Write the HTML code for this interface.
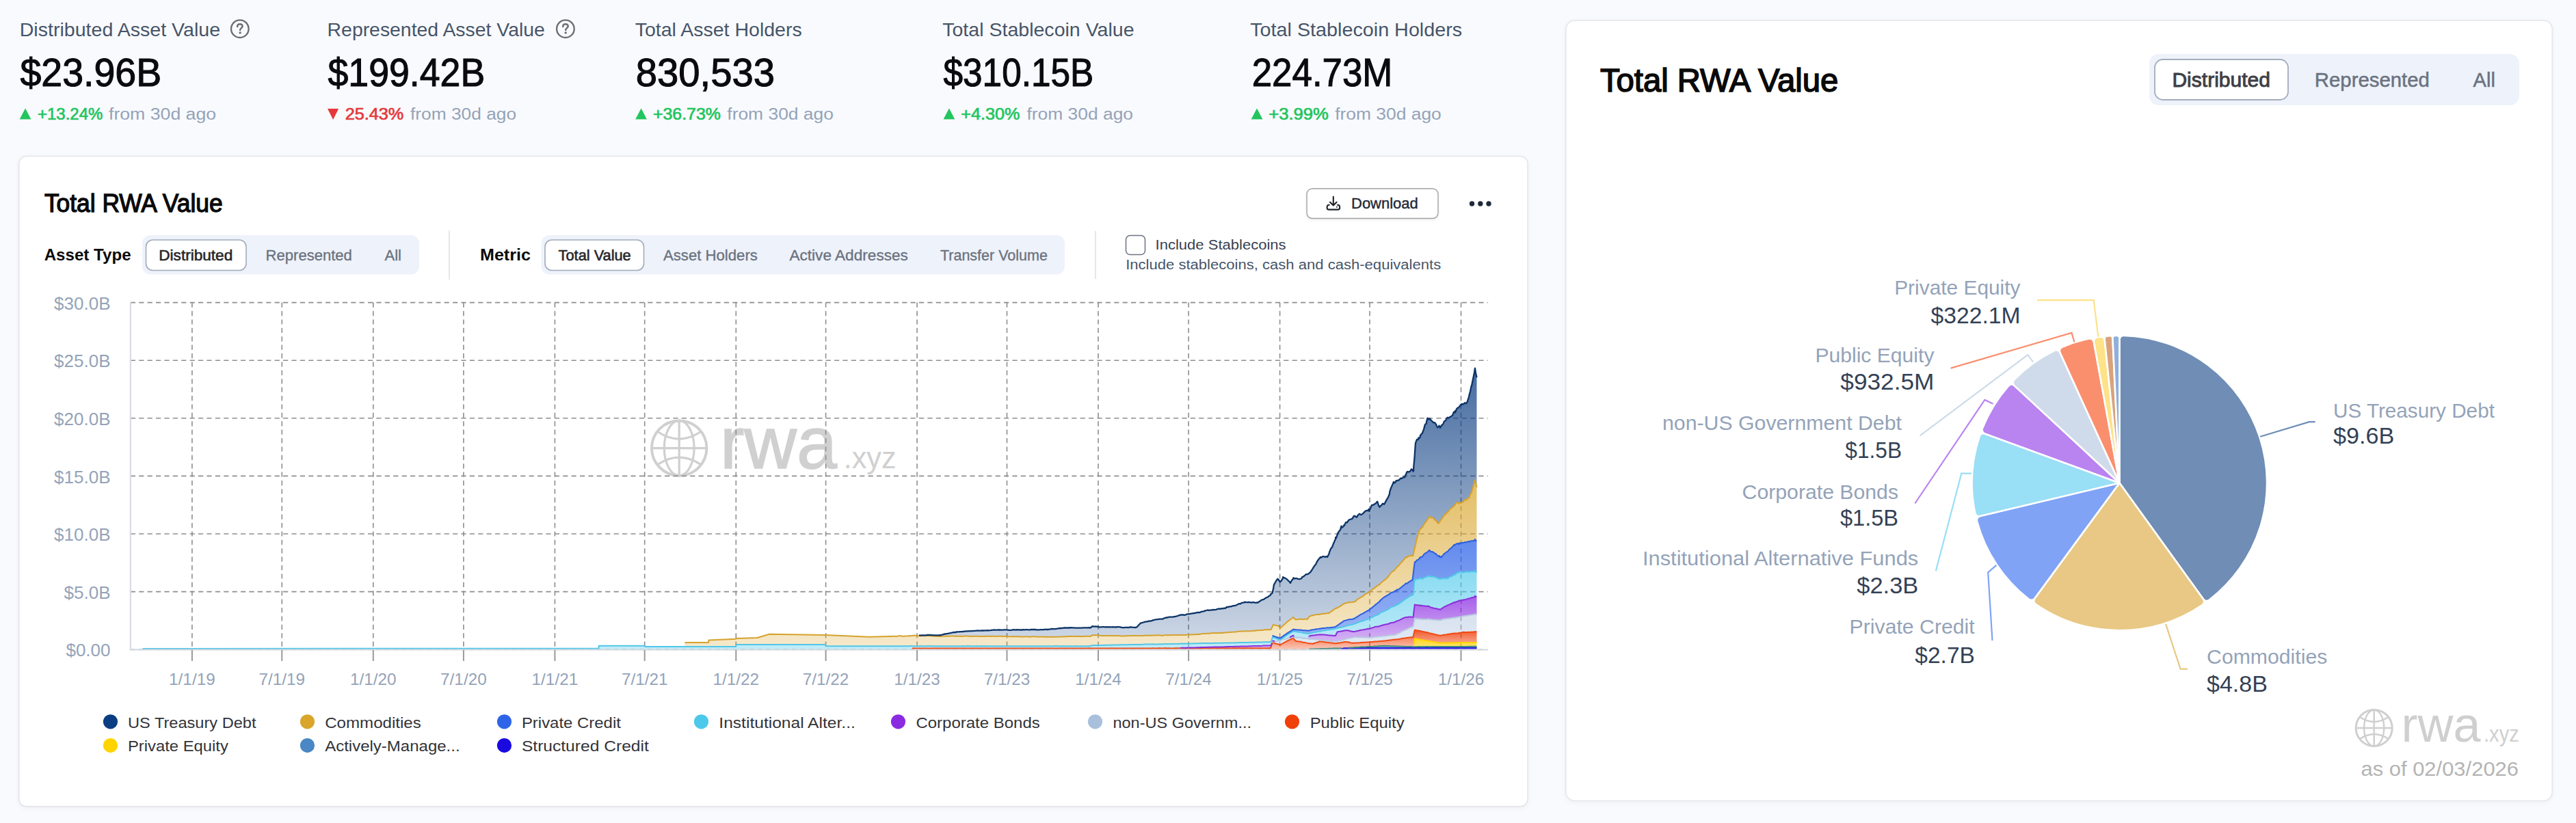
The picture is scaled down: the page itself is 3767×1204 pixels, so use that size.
<!DOCTYPE html>
<html><head><meta charset="utf-8"><title>RWA Dashboard</title>
<style>
html,body{margin:0;padding:0;width:3767px;height:1204px;overflow:hidden;background:#f9fafd;}
svg{display:block;font-family:"Liberation Sans",sans-serif;}
</style></head><body>
<svg width="3767" height="1204" viewBox="0 0 3767 1204">
<defs><filter id="sh2" x="-10%" y="-20%" width="120%" height="150%"><feDropShadow dx="0" dy="1.5" stdDeviation="1.5" flood-color="#000" flood-opacity="0.08"/></filter><filter id="sh" x="-5%" y="-5%" width="110%" height="115%"><feDropShadow dx="0" dy="2" stdDeviation="3" flood-color="#0f172a" flood-opacity="0.045"/></filter><linearGradient id="g_sc" x1="0" y1="0" x2="0" y2="1"><stop offset="0.02" stop-color="#1a0ae0" stop-opacity="0.8"/><stop offset="0.98" stop-color="#1a0ae0" stop-opacity="0.5"/></linearGradient><linearGradient id="g_am" x1="0" y1="0" x2="0" y2="1"><stop offset="0.02" stop-color="#4a87c4" stop-opacity="0.8"/><stop offset="0.98" stop-color="#4a87c4" stop-opacity="0.5"/></linearGradient><linearGradient id="g_pe" x1="0" y1="0" x2="0" y2="1"><stop offset="0.02" stop-color="#ffd000" stop-opacity="0.85"/><stop offset="0.98" stop-color="#ffd000" stop-opacity="0.5"/></linearGradient><linearGradient id="g_pub" x1="0" y1="0" x2="0" y2="1"><stop offset="0.02" stop-color="#f0400a" stop-opacity="0.85"/><stop offset="0.98" stop-color="#f0400a" stop-opacity="0.3"/></linearGradient><linearGradient id="g_nus" x1="0" y1="0" x2="0" y2="1"><stop offset="0.02" stop-color="#a9c0dd" stop-opacity="0.45"/><stop offset="0.98" stop-color="#a9c0dd" stop-opacity="0.35"/></linearGradient><linearGradient id="g_cb" x1="0" y1="0" x2="0" y2="1"><stop offset="0.02" stop-color="#8a2be2" stop-opacity="0.75"/><stop offset="0.98" stop-color="#8a2be2" stop-opacity="0.3"/></linearGradient><linearGradient id="g_iaf" x1="0" y1="0" x2="0" y2="1"><stop offset="0.02" stop-color="#4cc8ea" stop-opacity="0.65"/><stop offset="0.98" stop-color="#4cc8ea" stop-opacity="0.35"/></linearGradient><linearGradient id="g_pc" x1="0" y1="0" x2="0" y2="1"><stop offset="0.02" stop-color="#2e64e8" stop-opacity="0.75"/><stop offset="0.98" stop-color="#2e64e8" stop-opacity="0.45"/></linearGradient><linearGradient id="g_com" x1="0" y1="0" x2="0" y2="1"><stop offset="0.02" stop-color="#d9a52b" stop-opacity="0.72"/><stop offset="0.98" stop-color="#d9a52b" stop-opacity="0.25"/></linearGradient><linearGradient id="g_ust" x1="0" y1="0" x2="0" y2="1"><stop offset="0.02" stop-color="#0b3d82" stop-opacity="0.75"/><stop offset="0.98" stop-color="#0b3d82" stop-opacity="0.2"/></linearGradient></defs>
<rect x="0" y="0" width="3767" height="1204" fill="#f9fafd"/>
<rect x="27.8" y="228.5" width="2206.2" height="951.4" rx="11" fill="#ffffff" stroke="#e3e6eb" stroke-width="1.6" filter="url(#sh)"/>
<rect x="2289.8" y="29.8" width="1442.5" height="1141.7" rx="13" fill="#ffffff" stroke="#e3e6eb" stroke-width="1.6" filter="url(#sh)"/>
<text x="28.7" y="52.7" font-size="28.5" font-weight="normal" fill="#475569" textLength="293.4" lengthAdjust="spacingAndGlyphs">Distributed Asset Value</text>
<text stroke="#0b0b0f" stroke-width="1.1" x="29.5" y="126.2" font-size="57.0" font-weight="normal" fill="#0b0b0f" textLength="206.7" lengthAdjust="spacingAndGlyphs">$23.96B</text>
<path d="M37.0,158.4 L45.4,174.6 L28.7,174.6 Z" fill="#22c55e"/>
<text stroke="#22c55e" stroke-width="0.7" x="55.0" y="175.0" font-size="23.5" font-weight="normal" fill="#22c55e" textLength="95.3" lengthAdjust="spacingAndGlyphs">+13.24%</text>
<text x="159.0" y="175.0" font-size="23.5" font-weight="normal" fill="#94a3b8" textLength="157.1" lengthAdjust="spacingAndGlyphs">from 30d ago</text>
<circle cx="350.8" cy="42.2" r="12.8" fill="none" stroke="#6e6e72" stroke-width="2.4"/>
<path d="M347.1,38.9 C347.1,36.4 348.9,35.2 350.9,35.2 C353.1,35.2 354.6,36.6 354.6,38.5 C354.6,40.9 351.1,41.4 351.1,43.9" fill="none" stroke="#6e6e72" stroke-width="2.5" stroke-linecap="round"/>
<circle cx="351.1" cy="47.9" r="1.7" fill="#6e6e72"/>
<text x="478.6" y="52.7" font-size="28.5" font-weight="normal" fill="#475569" textLength="318.2" lengthAdjust="spacingAndGlyphs">Represented Asset Value</text>
<text stroke="#0b0b0f" stroke-width="1.1" x="479.5" y="126.2" font-size="57.0" font-weight="normal" fill="#0b0b0f" textLength="229.7" lengthAdjust="spacingAndGlyphs">$199.42B</text>
<path d="M479.0,159 L495.1,159 L487.1,175 Z" fill="#e5393b"/>
<text stroke="#e5393b" stroke-width="0.7" x="504.7" y="175.0" font-size="23.5" font-weight="normal" fill="#e5393b" textLength="85.6" lengthAdjust="spacingAndGlyphs">25.43%</text>
<text x="600.0" y="175.0" font-size="23.5" font-weight="normal" fill="#94a3b8" textLength="155.1" lengthAdjust="spacingAndGlyphs">from 30d ago</text>
<circle cx="826.9" cy="42.2" r="12.8" fill="none" stroke="#6e6e72" stroke-width="2.4"/>
<path d="M823.2,38.9 C823.2,36.4 825.0,35.2 827.0,35.2 C829.2,35.2 830.7,36.6 830.7,38.5 C830.7,40.9 827.2,41.4 827.2,43.9" fill="none" stroke="#6e6e72" stroke-width="2.5" stroke-linecap="round"/>
<circle cx="827.2" cy="47.9" r="1.7" fill="#6e6e72"/>
<text x="928.7" y="52.7" font-size="28.5" font-weight="normal" fill="#475569" textLength="244.0" lengthAdjust="spacingAndGlyphs">Total Asset Holders</text>
<text stroke="#0b0b0f" stroke-width="1.1" x="929.7" y="126.2" font-size="57.0" font-weight="normal" fill="#0b0b0f" textLength="203.3" lengthAdjust="spacingAndGlyphs">830,533</text>
<path d="M937.6,158.4 L945.9,174.6 L929.2,174.6 Z" fill="#22c55e"/>
<text stroke="#22c55e" stroke-width="0.7" x="955.0" y="175.0" font-size="23.5" font-weight="normal" fill="#22c55e" textLength="98.9" lengthAdjust="spacingAndGlyphs">+36.73%</text>
<text x="1063.3" y="175.0" font-size="23.5" font-weight="normal" fill="#94a3b8" textLength="155.6" lengthAdjust="spacingAndGlyphs">from 30d ago</text>
<text x="1378.2" y="52.7" font-size="28.5" font-weight="normal" fill="#475569" textLength="280.4" lengthAdjust="spacingAndGlyphs">Total Stablecoin Value</text>
<text stroke="#0b0b0f" stroke-width="1.1" x="1379.5" y="126.2" font-size="57.0" font-weight="normal" fill="#0b0b0f" textLength="219.8" lengthAdjust="spacingAndGlyphs">$310.15B</text>
<path d="M1387.9,158.4 L1396.3,174.6 L1379.6,174.6 Z" fill="#22c55e"/>
<text stroke="#22c55e" stroke-width="0.7" x="1405.3" y="175.0" font-size="23.5" font-weight="normal" fill="#22c55e" textLength="86.2" lengthAdjust="spacingAndGlyphs">+4.30%</text>
<text x="1501.5" y="175.0" font-size="23.5" font-weight="normal" fill="#94a3b8" textLength="155.5" lengthAdjust="spacingAndGlyphs">from 30d ago</text>
<text x="1828.2" y="52.7" font-size="28.5" font-weight="normal" fill="#475569" textLength="310.0" lengthAdjust="spacingAndGlyphs">Total Stablecoin Holders</text>
<text stroke="#0b0b0f" stroke-width="1.1" x="1830.7" y="126.2" font-size="57.0" font-weight="normal" fill="#0b0b0f" textLength="205.7" lengthAdjust="spacingAndGlyphs">224.73M</text>
<path d="M1838.0,158.4 L1846.4,174.6 L1829.7,174.6 Z" fill="#22c55e"/>
<text stroke="#22c55e" stroke-width="0.7" x="1855.3" y="175.0" font-size="23.5" font-weight="normal" fill="#22c55e" textLength="87.6" lengthAdjust="spacingAndGlyphs">+3.99%</text>
<text x="1952.2" y="175.0" font-size="23.5" font-weight="normal" fill="#94a3b8" textLength="155.6" lengthAdjust="spacingAndGlyphs">from 30d ago</text>
<text stroke="#0a0a0a" stroke-width="1.3" x="64.9" y="310.0" font-size="36.0" font-weight="normal" fill="#0a0a0a" textLength="260.7" lengthAdjust="spacingAndGlyphs">Total RWA Value</text>
<text x="64.7" y="381.3" font-size="24.0" font-weight="bold" fill="#0a0a0a" textLength="126.9" lengthAdjust="spacingAndGlyphs">Asset Type</text>
<rect x="208" y="344" width="405" height="57.5" rx="12" fill="#eef2fa"/>
<rect x="213.5" y="351" width="146.5" height="44.5" rx="10" fill="#ffffff" stroke="#a3acbb" stroke-width="1.6"/>
<text stroke="#27272a" stroke-width="0.6" x="232.3" y="381.3" font-size="21.5" font-weight="normal" fill="#27272a" textLength="107.9" lengthAdjust="spacingAndGlyphs">Distributed</text>
<text stroke="#6b7280" stroke-width="0.35" x="388.6" y="381.3" font-size="21.5" font-weight="normal" fill="#6b7280" textLength="126.3" lengthAdjust="spacingAndGlyphs">Represented</text>
<text stroke="#6b7280" stroke-width="0.35" x="562.5" y="381.3" font-size="21.5" font-weight="normal" fill="#6b7280" textLength="24.5" lengthAdjust="spacingAndGlyphs">All</text>
<rect x="656" y="337" width="2" height="72" fill="#e5e7eb"/>
<text x="702.0" y="381.3" font-size="24.0" font-weight="bold" fill="#0a0a0a" textLength="73.9" lengthAdjust="spacingAndGlyphs">Metric</text>
<rect x="791.5" y="344" width="765.5" height="57.5" rx="12" fill="#eef2fa"/>
<rect x="797" y="351" width="144.5" height="44.5" rx="10" fill="#ffffff" stroke="#a3acbb" stroke-width="1.6"/>
<text stroke="#27272a" stroke-width="0.6" x="816.6" y="381.3" font-size="21.5" font-weight="normal" fill="#27272a" textLength="106.1" lengthAdjust="spacingAndGlyphs">Total Value</text>
<text stroke="#6b7280" stroke-width="0.35" x="970.0" y="381.3" font-size="21.5" font-weight="normal" fill="#6b7280" textLength="137.9" lengthAdjust="spacingAndGlyphs">Asset Holders</text>
<text stroke="#6b7280" stroke-width="0.35" x="1154.4" y="381.3" font-size="21.5" font-weight="normal" fill="#6b7280" textLength="173.5" lengthAdjust="spacingAndGlyphs">Active Addresses</text>
<text stroke="#6b7280" stroke-width="0.35" x="1374.9" y="381.3" font-size="21.5" font-weight="normal" fill="#6b7280" textLength="157.1" lengthAdjust="spacingAndGlyphs">Transfer Volume</text>
<rect x="1601" y="338" width="2" height="70" fill="#e5e7eb"/>
<rect x="1646.5" y="344.5" width="28" height="28" rx="6" fill="#ffffff" stroke="#6b7280" stroke-width="1.5"/>
<text x="1689.6" y="365.4" font-size="20.0" font-weight="normal" fill="#374151" textLength="191.0" lengthAdjust="spacingAndGlyphs">Include Stablecoins</text>
<text x="1646.2" y="394.4" font-size="20.0" font-weight="normal" fill="#475569" textLength="461.0" lengthAdjust="spacingAndGlyphs">Include stablecoins, cash and cash-equivalents</text>
<rect x="1911" y="276" width="192" height="43.5" rx="8" fill="#ffffff" stroke="#a3a3a3" stroke-width="1.4" filter="url(#sh2)"/>
<path d="M1949.8,287.8 L1949.8,300.2 M1945,295.8 L1949.8,300.6 L1954.6,295.8 M1943.8,299.8 C1941.3,299.8 1940.6,301.5 1940.6,303 L1940.6,304.2 C1940.6,305.8 1941.8,306.6 1943.3,306.6 L1956.5,306.6 C1958,306.6 1959.1,305.8 1959.1,304.2 L1959.1,303 C1959.1,301.5 1958.5,299.8 1956,299.8" fill="none" stroke="#1f2328" stroke-width="2.1" stroke-linecap="round" stroke-linejoin="round"/>
<circle cx="1954.9" cy="302.8" r="1" fill="#1f2328"/>
<text stroke="#1f2937" stroke-width="0.4" x="1976.0" y="305.1" font-size="22.0" font-weight="normal" fill="#1f2937" textLength="97.8" lengthAdjust="spacingAndGlyphs">Download</text>
<circle cx="2152.5" cy="298" r="3.7" fill="#1e293b"/>
<circle cx="2164.8" cy="298" r="3.7" fill="#1e293b"/>
<circle cx="2177" cy="298" r="3.7" fill="#1e293b"/>
<text stroke="#0a0a0a" stroke-width="1.6" x="2339.9" y="133.7" font-size="48.0" font-weight="normal" fill="#0a0a0a" textLength="348.3" lengthAdjust="spacingAndGlyphs">Total RWA Value</text>
<rect x="3143" y="79" width="541" height="75" rx="14" fill="#eef2fa"/>
<rect x="3151" y="87" width="195" height="59" rx="12" fill="#ffffff" stroke="#a3acbb" stroke-width="1.8"/>
<text stroke="#3f3f46" stroke-width="0.9" x="3176.4" y="126.7" font-size="29.0" font-weight="normal" fill="#3f3f46" textLength="143.6" lengthAdjust="spacingAndGlyphs">Distributed</text>
<text stroke="#6b7280" stroke-width="0.5" x="3384.8" y="126.7" font-size="29.0" font-weight="normal" fill="#6b7280" textLength="168.1" lengthAdjust="spacingAndGlyphs">Represented</text>
<text stroke="#6b7280" stroke-width="0.5" x="3616.6" y="126.7" font-size="29.0" font-weight="normal" fill="#6b7280" textLength="32.4" lengthAdjust="spacingAndGlyphs">All</text>
<circle cx="993.2" cy="655.6" r="40.2" fill="none" stroke="#d0d0d0" stroke-width="4.0"/><ellipse cx="993.2" cy="655.6" rx="21.9" ry="40.2" fill="none" stroke="#d0d0d0" stroke-width="3.2"/><path d="M993.2,615.4 L993.2,695.8 M953.0,655.6 L1033.4,655.6" stroke="#d0d0d0" stroke-width="3.2"/><path d="M962.4,632.0 Q993.2,652.2 1024.0,632.0 M962.4,679.2 Q993.2,659.0 1024.0,679.2" fill="none" stroke="#d0d0d0" stroke-width="3.2"/>
<text stroke="#d0d0d0" stroke-width="1.6" x="1053.0" y="685.3" font-size="108.0" font-weight="normal" fill="#d0d0d0" textLength="171.1" lengthAdjust="spacingAndGlyphs">rwa</text>
<text x="1233.7" y="685.3" font-size="44.0" font-weight="normal" fill="#d0d0d0" textLength="77.0" lengthAdjust="spacingAndGlyphs">.xyz</text>
<path d="M190.8,442.6 L2175.8,442.6 M190.8,527.2 L2175.8,527.2 M190.8,611.8 L2175.8,611.8 M190.8,696.4 L2175.8,696.4 M190.8,781.0 L2175.8,781.0 M190.8,865.6 L2175.8,865.6 M280.9,442.6 L280.9,950.2 M412.3,442.6 L412.3,950.2 M545.8,442.6 L545.8,950.2 M677.9,442.6 L677.9,950.2 M811.4,442.6 L811.4,950.2 M942.7,442.6 L942.7,950.2 M1076.3,442.6 L1076.3,950.2 M1207.6,442.6 L1207.6,950.2 M1341.1,442.6 L1341.1,950.2 M1472.5,442.6 L1472.5,950.2 M1606.0,442.6 L1606.0,950.2 M1738.1,442.6 L1738.1,950.2 M1871.6,442.6 L1871.6,950.2 M2003.0,442.6 L2003.0,950.2 M2136.5,442.6 L2136.5,950.2" fill="none" stroke="#8e8e8e" stroke-width="1.6" stroke-dasharray="7.2 5.2"/>
<path d="M190.8,950.2 L2175.8,950.2" fill="none" stroke="#c8c8c8" stroke-width="2" stroke-dasharray="6.2 6.2"/>
<path d="M190.8,950.0 L208.5,950.0 L875.5,950.0 L875.7,950.0 L943.0,950.0 L943.3,950.0 L1001.4,950.0 L1001.5,950.0 L1036.0,950.0 L1036.4,950.0 L1076.0,950.0 L1076.5,950.0 L1107.5,950.0 L1125.0,950.0 L1207.0,950.0 L1207.6,950.0 L1270.5,950.0 L1300.0,950.0 L1302.0,950.0 L1304.0,950.0 L1306.0,950.0 L1308.0,950.0 L1310.0,950.0 L1312.0,950.0 L1312.5,950.0 L1314.0,950.0 L1316.0,950.0 L1318.0,950.0 L1320.0,950.0 L1322.0,950.0 L1324.0,950.0 L1326.0,950.0 L1328.0,950.0 L1330.0,950.0 L1332.0,950.0 L1333.0,950.0 L1334.0,950.0 L1334.5,950.0 L1336.0,950.0 L1338.0,950.0 L1340.0,950.0 L1342.0,950.0 L1344.0,950.0 L1346.0,950.0 L1348.0,950.0 L1350.0,950.0 L1352.0,950.0 L1354.0,950.0 L1356.0,950.0 L1358.0,950.0 L1360.0,950.0 L1362.0,950.0 L1364.0,950.0 L1366.0,950.0 L1368.0,950.0 L1370.0,950.0 L1372.0,950.0 L1374.0,950.0 L1375.0,950.0 L1376.0,950.0 L1378.0,950.0 L1380.0,950.0 L1382.0,950.0 L1384.0,950.0 L1386.0,950.0 L1388.0,950.0 L1390.0,950.0 L1392.0,950.0 L1394.0,950.0 L1396.0,950.0 L1398.0,950.0 L1398.3,950.0 L1400.0,950.0 L1402.0,950.0 L1404.0,950.0 L1406.0,950.0 L1408.0,950.0 L1410.0,950.0 L1412.0,950.0 L1414.0,950.0 L1416.0,950.0 L1418.0,950.0 L1420.0,950.0 L1422.0,950.0 L1424.0,950.0 L1426.0,950.0 L1428.0,950.0 L1430.0,950.0 L1430.4,950.0 L1432.0,950.0 L1434.0,950.0 L1436.0,950.0 L1438.0,950.0 L1440.0,950.0 L1442.0,950.0 L1444.0,950.0 L1446.0,950.0 L1448.0,950.0 L1450.0,950.0 L1452.0,950.0 L1454.0,950.0 L1456.0,950.0 L1458.0,950.0 L1460.0,950.0 L1462.0,950.0 L1464.0,950.0 L1466.0,950.0 L1468.0,950.0 L1470.0,950.0 L1471.2,950.0 L1472.0,950.0 L1474.0,950.0 L1476.0,950.0 L1478.0,950.0 L1480.0,950.0 L1482.0,950.0 L1484.0,950.0 L1486.0,950.0 L1488.0,950.0 L1490.0,950.0 L1492.0,950.0 L1494.0,950.0 L1496.0,950.0 L1498.0,950.0 L1500.0,950.0 L1502.0,950.0 L1504.0,950.0 L1506.0,950.0 L1508.0,950.0 L1510.0,950.0 L1512.0,950.0 L1514.0,950.0 L1516.0,950.0 L1518.0,950.0 L1520.0,950.0 L1522.0,950.0 L1524.0,950.0 L1526.0,950.0 L1528.0,950.0 L1529.5,950.0 L1530.0,950.0 L1532.0,950.0 L1534.0,950.0 L1536.0,950.0 L1538.0,950.0 L1540.0,950.0 L1541.0,950.0 L1542.0,950.0 L1544.0,950.0 L1546.0,950.0 L1548.0,950.0 L1550.0,950.0 L1552.0,950.0 L1554.0,950.0 L1556.0,950.0 L1558.0,950.0 L1558.7,950.0 L1560.0,950.0 L1562.0,950.0 L1564.0,950.0 L1566.0,950.0 L1568.0,950.0 L1570.0,950.0 L1572.0,950.0 L1574.0,950.0 L1576.0,950.0 L1578.0,950.0 L1580.0,950.0 L1582.0,950.0 L1584.0,950.0 L1586.0,950.0 L1588.0,950.0 L1590.0,950.0 L1592.0,950.0 L1594.0,950.0 L1595.0,950.0 L1596.0,950.0 L1596.6,950.0 L1598.0,950.0 L1600.0,950.0 L1602.0,950.0 L1604.0,950.0 L1606.0,950.0 L1608.0,950.0 L1610.0,950.0 L1612.0,950.0 L1614.0,950.0 L1616.0,950.0 L1618.0,950.0 L1620.0,950.0 L1622.0,950.0 L1624.0,950.0 L1626.0,950.0 L1628.0,950.0 L1630.0,950.0 L1632.0,950.0 L1634.0,950.0 L1636.0,950.0 L1638.0,950.0 L1640.0,950.0 L1642.0,950.0 L1644.0,950.0 L1646.0,950.0 L1648.0,950.0 L1650.0,950.0 L1652.0,950.0 L1654.0,950.0 L1656.0,950.0 L1658.0,950.0 L1660.0,950.0 L1661.9,950.0 L1662.0,950.0 L1664.0,950.0 L1666.0,950.0 L1668.0,950.0 L1668.4,950.0 L1670.0,950.0 L1672.0,950.0 L1674.0,950.0 L1676.0,950.0 L1678.0,950.0 L1680.0,950.0 L1682.0,950.0 L1684.0,950.0 L1686.0,950.0 L1688.0,950.0 L1690.0,950.0 L1692.0,950.0 L1694.0,950.0 L1694.7,950.0 L1696.0,950.0 L1698.0,950.0 L1700.0,950.0 L1702.0,950.0 L1704.0,950.0 L1706.0,950.0 L1708.0,950.0 L1710.0,950.0 L1712.0,950.0 L1714.0,950.0 L1716.0,950.0 L1718.0,950.0 L1720.0,950.0 L1722.0,950.0 L1724.0,950.0 L1726.0,950.0 L1728.0,950.0 L1730.0,950.0 L1732.0,950.0 L1734.0,950.0 L1736.0,950.0 L1738.0,950.0 L1738.4,950.0 L1740.0,950.0 L1742.0,950.0 L1744.0,950.0 L1746.0,950.0 L1748.0,950.0 L1750.0,950.0 L1752.0,950.0 L1754.0,950.0 L1756.0,950.0 L1758.0,950.0 L1760.0,950.0 L1762.0,950.0 L1764.0,950.0 L1766.0,950.0 L1768.0,950.0 L1770.0,950.0 L1772.0,950.0 L1774.0,950.0 L1776.0,950.0 L1778.0,950.0 L1780.0,950.0 L1782.0,950.0 L1784.0,950.0 L1786.0,950.0 L1788.0,950.0 L1790.0,950.0 L1792.0,950.0 L1794.0,950.0 L1796.0,950.0 L1798.0,950.0 L1800.0,950.0 L1802.0,950.0 L1804.0,950.0 L1806.0,950.0 L1808.0,950.0 L1810.0,950.0 L1812.0,950.0 L1814.0,950.0 L1816.0,950.0 L1818.0,950.0 L1819.3,950.0 L1820.0,950.0 L1822.0,950.0 L1824.0,950.0 L1826.0,950.0 L1828.0,950.0 L1830.0,950.0 L1832.0,950.0 L1834.0,950.0 L1836.0,950.0 L1838.0,950.0 L1839.0,950.0 L1840.0,950.0 L1842.0,950.0 L1844.0,950.0 L1846.0,950.0 L1848.0,950.0 L1850.0,950.0 L1852.0,950.0 L1854.0,950.0 L1856.0,950.0 L1856.5,950.0 L1858.0,950.0 L1858.5,950.0 L1858.7,950.0 L1860.0,950.0 L1860.6,950.0 L1860.9,950.0 L1861.2,950.0 L1861.8,950.0 L1862.0,950.0 L1863.0,950.0 L1864.0,950.0 L1866.0,950.0 L1868.0,950.0 L1868.5,950.0 L1869.9,950.0 L1870.0,950.0 L1871.7,950.0 L1871.8,950.0 L1872.0,950.0 L1872.4,950.0 L1874.0,950.0 L1876.0,950.0 L1876.2,950.0 L1878.0,950.0 L1880.0,950.0 L1882.0,950.0 L1884.0,950.0 L1886.0,950.0 L1887.0,950.0 L1888.0,950.0 L1890.0,950.0 L1891.0,950.0 L1891.5,950.0 L1892.0,950.0 L1893.5,950.0 L1894.0,950.0 L1894.7,950.0 L1896.0,950.0 L1898.0,950.0 L1900.0,950.0 L1902.0,950.0 L1903.6,950.0 L1904.0,950.0 L1906.0,950.0 L1908.0,950.0 L1910.0,950.0 L1912.0,950.0 L1914.0,950.0 L1914.6,950.0 L1916.0,950.0 L1917.2,950.0 L1918.0,950.0 L1919.6,950.0 L1920.0,950.0 L1922.0,950.0 L1924.0,950.0 L1926.0,950.0 L1928.0,950.0 L1929.5,950.0 L1930.0,950.0 L1930.7,950.0 L1930.8,950.0 L1932.0,950.0 L1934.0,950.0 L1936.0,950.0 L1938.0,950.0 L1940.0,950.0 L1941.0,950.0 L1942.0,950.0 L1943.2,950.0 L1944.0,950.0 L1946.0,950.0 L1948.0,950.0 L1950.0,950.0 L1952.0,950.0 L1953.0,950.0 L1953.1,950.0 L1954.0,950.0 L1955.6,950.0 L1956.0,950.0 L1958.0,950.0 L1960.0,950.0 L1961.5,949.5 L1961.8,949.4 L1962.0,949.3 L1964.0,948.6 L1965.0,948.2 L1965.5,948.2 L1966.0,948.2 L1966.8,948.2 L1968.0,948.2 L1970.0,948.2 L1972.0,948.2 L1974.0,948.2 L1976.0,948.2 L1978.0,948.2 L1978.5,948.1 L1980.0,948.1 L1982.0,948.1 L1984.0,948.1 L1986.0,948.1 L1988.0,948.1 L1990.0,948.1 L1992.0,948.1 L1994.0,948.1 L1996.0,948.1 L1998.0,948.1 L2000.0,948.1 L2002.0,948.1 L2002.3,948.2 L2002.5,948.1 L2003.3,948.1 L2004.0,948.1 L2005.0,948.1 L2006.0,948.2 L2008.0,948.1 L2010.0,948.1 L2012.0,948.1 L2014.0,948.1 L2014.2,948.1 L2016.0,948.1 L2017.6,948.1 L2018.0,948.1 L2020.0,948.1 L2022.0,948.1 L2024.0,948.1 L2025.0,948.1 L2026.0,948.1 L2028.0,948.1 L2030.0,948.1 L2032.0,948.1 L2032.3,948.0 L2034.0,948.1 L2036.0,948.1 L2038.0,948.1 L2038.5,948.0 L2040.0,948.0 L2042.0,948.1 L2043.0,948.0 L2044.0,948.0 L2044.7,948.0 L2046.0,948.0 L2048.0,948.0 L2050.0,948.0 L2052.0,948.0 L2054.0,948.0 L2056.0,948.1 L2056.5,948.0 L2057.0,948.0 L2058.0,948.0 L2060.0,948.0 L2062.0,948.0 L2064.0,948.0 L2065.5,948.0 L2066.0,948.0 L2066.6,948.0 L2067.0,948.0 L2067.4,948.0 L2068.0,948.0 L2068.5,948.0 L2068.8,948.0 L2070.0,948.0 L2072.0,948.0 L2074.0,948.0 L2074.4,948.0 L2076.0,948.0 L2076.7,947.9 L2077.0,947.9 L2078.0,948.0 L2080.0,948.0 L2082.0,948.0 L2084.0,947.9 L2085.7,948.0 L2086.0,948.0 L2087.5,948.0 L2088.0,948.0 L2090.0,948.0 L2090.2,948.0 L2090.7,948.0 L2092.0,948.0 L2092.4,947.9 L2094.0,947.9 L2096.0,947.9 L2098.0,947.9 L2100.0,948.0 L2102.0,947.9 L2104.0,947.9 L2104.4,947.9 L2105.9,947.9 L2106.0,947.9 L2108.0,947.9 L2108.2,947.9 L2110.0,947.9 L2112.0,947.9 L2112.7,947.9 L2114.0,947.9 L2116.0,947.9 L2116.6,947.9 L2118.0,947.9 L2120.0,947.9 L2122.0,947.9 L2124.0,947.9 L2126.0,947.9 L2126.2,947.9 L2126.8,947.9 L2128.0,947.9 L2128.2,947.9 L2130.0,947.9 L2132.0,947.8 L2132.9,947.9 L2134.0,947.9 L2136.0,947.8 L2137.0,947.8 L2137.4,947.8 L2138.0,947.8 L2140.0,947.8 L2142.0,947.8 L2144.0,947.9 L2145.8,947.9 L2146.0,947.8 L2148.0,947.8 L2148.6,947.8 L2150.0,947.8 L2151.6,947.8 L2152.0,947.8 L2154.0,947.8 L2156.0,947.8 L2156.9,947.8 L2157.1,947.8 L2158.0,947.8 L2159.5,947.8 L2159.5,950.0 L2158.0,950.0 L2157.1,950.0 L2156.9,950.0 L2156.0,950.0 L2154.0,950.0 L2152.0,950.0 L2151.6,950.0 L2150.0,950.0 L2148.6,950.0 L2148.0,950.0 L2146.0,950.0 L2145.8,950.0 L2144.0,950.0 L2142.0,950.0 L2140.0,950.0 L2138.0,950.0 L2137.4,950.0 L2137.0,950.0 L2136.0,950.0 L2134.0,950.0 L2132.9,950.0 L2132.0,950.0 L2130.0,950.0 L2128.2,950.0 L2128.0,950.0 L2126.8,950.0 L2126.2,950.0 L2126.0,950.0 L2124.0,950.0 L2122.0,950.0 L2120.0,950.0 L2118.0,950.0 L2116.6,950.0 L2116.0,950.0 L2114.0,950.0 L2112.7,950.0 L2112.0,950.0 L2110.0,950.0 L2108.2,950.0 L2108.0,950.0 L2106.0,950.0 L2105.9,950.0 L2104.4,950.0 L2104.0,950.0 L2102.0,950.0 L2100.0,950.0 L2098.0,950.0 L2096.0,950.0 L2094.0,950.0 L2092.4,950.0 L2092.0,950.0 L2090.7,950.0 L2090.2,950.0 L2090.0,950.0 L2088.0,950.0 L2087.5,950.0 L2086.0,950.0 L2085.7,950.0 L2084.0,950.0 L2082.0,950.0 L2080.0,950.0 L2078.0,950.0 L2077.0,950.0 L2076.7,950.0 L2076.0,950.0 L2074.4,950.0 L2074.0,950.0 L2072.0,950.0 L2070.0,950.0 L2068.8,950.0 L2068.5,950.0 L2068.0,950.0 L2067.4,950.0 L2067.0,950.0 L2066.6,950.0 L2066.0,950.0 L2065.5,950.0 L2064.0,950.0 L2062.0,950.0 L2060.0,950.0 L2058.0,950.0 L2057.0,950.0 L2056.5,950.0 L2056.0,950.0 L2054.0,950.0 L2052.0,950.0 L2050.0,950.0 L2048.0,950.0 L2046.0,950.0 L2044.7,950.0 L2044.0,950.0 L2043.0,950.0 L2042.0,950.0 L2040.0,950.0 L2038.5,950.0 L2038.0,950.0 L2036.0,950.0 L2034.0,950.0 L2032.3,950.0 L2032.0,950.0 L2030.0,950.0 L2028.0,950.0 L2026.0,950.0 L2025.0,950.0 L2024.0,950.0 L2022.0,950.0 L2020.0,950.0 L2018.0,950.0 L2017.6,950.0 L2016.0,950.0 L2014.2,950.0 L2014.0,950.0 L2012.0,950.0 L2010.0,950.0 L2008.0,950.0 L2006.0,950.0 L2005.0,950.0 L2004.0,950.0 L2003.3,950.0 L2002.5,950.0 L2002.3,950.0 L2002.0,950.0 L2000.0,950.0 L1998.0,950.0 L1996.0,950.0 L1994.0,950.0 L1992.0,950.0 L1990.0,950.0 L1988.0,950.0 L1986.0,950.0 L1984.0,950.0 L1982.0,950.0 L1980.0,950.0 L1978.5,950.0 L1978.0,950.0 L1976.0,950.0 L1974.0,950.0 L1972.0,950.0 L1970.0,950.0 L1968.0,950.0 L1966.8,950.0 L1966.0,950.0 L1965.5,950.0 L1965.0,950.0 L1964.0,950.0 L1962.0,950.0 L1961.8,950.0 L1961.5,950.0 L1960.0,950.0 L1958.0,950.0 L1956.0,950.0 L1955.6,950.0 L1954.0,950.0 L1953.1,950.0 L1953.0,950.0 L1952.0,950.0 L1950.0,950.0 L1948.0,950.0 L1946.0,950.0 L1944.0,950.0 L1943.2,950.0 L1942.0,950.0 L1941.0,950.0 L1940.0,950.0 L1938.0,950.0 L1936.0,950.0 L1934.0,950.0 L1932.0,950.0 L1930.8,950.0 L1930.7,950.0 L1930.0,950.0 L1929.5,950.0 L1928.0,950.0 L1926.0,950.0 L1924.0,950.0 L1922.0,950.0 L1920.0,950.0 L1919.6,950.0 L1918.0,950.0 L1917.2,950.0 L1916.0,950.0 L1914.6,950.0 L1914.0,950.0 L1912.0,950.0 L1910.0,950.0 L1908.0,950.0 L1906.0,950.0 L1904.0,950.0 L1903.6,950.0 L1902.0,950.0 L1900.0,950.0 L1898.0,950.0 L1896.0,950.0 L1894.7,950.0 L1894.0,950.0 L1893.5,950.0 L1892.0,950.0 L1891.5,950.0 L1891.0,950.0 L1890.0,950.0 L1888.0,950.0 L1887.0,950.0 L1886.0,950.0 L1884.0,950.0 L1882.0,950.0 L1880.0,950.0 L1878.0,950.0 L1876.2,950.0 L1876.0,950.0 L1874.0,950.0 L1872.4,950.0 L1872.0,950.0 L1871.8,950.0 L1871.7,950.0 L1870.0,950.0 L1869.9,950.0 L1868.5,950.0 L1868.0,950.0 L1866.0,950.0 L1864.0,950.0 L1863.0,950.0 L1862.0,950.0 L1861.8,950.0 L1861.2,950.0 L1860.9,950.0 L1860.6,950.0 L1860.0,950.0 L1858.7,950.0 L1858.5,950.0 L1858.0,950.0 L1856.5,950.0 L1856.0,950.0 L1854.0,950.0 L1852.0,950.0 L1850.0,950.0 L1848.0,950.0 L1846.0,950.0 L1844.0,950.0 L1842.0,950.0 L1840.0,950.0 L1839.0,950.0 L1838.0,950.0 L1836.0,950.0 L1834.0,950.0 L1832.0,950.0 L1830.0,950.0 L1828.0,950.0 L1826.0,950.0 L1824.0,950.0 L1822.0,950.0 L1820.0,950.0 L1819.3,950.0 L1818.0,950.0 L1816.0,950.0 L1814.0,950.0 L1812.0,950.0 L1810.0,950.0 L1808.0,950.0 L1806.0,950.0 L1804.0,950.0 L1802.0,950.0 L1800.0,950.0 L1798.0,950.0 L1796.0,950.0 L1794.0,950.0 L1792.0,950.0 L1790.0,950.0 L1788.0,950.0 L1786.0,950.0 L1784.0,950.0 L1782.0,950.0 L1780.0,950.0 L1778.0,950.0 L1776.0,950.0 L1774.0,950.0 L1772.0,950.0 L1770.0,950.0 L1768.0,950.0 L1766.0,950.0 L1764.0,950.0 L1762.0,950.0 L1760.0,950.0 L1758.0,950.0 L1756.0,950.0 L1754.0,950.0 L1752.0,950.0 L1750.0,950.0 L1748.0,950.0 L1746.0,950.0 L1744.0,950.0 L1742.0,950.0 L1740.0,950.0 L1738.4,950.0 L1738.0,950.0 L1736.0,950.0 L1734.0,950.0 L1732.0,950.0 L1730.0,950.0 L1728.0,950.0 L1726.0,950.0 L1724.0,950.0 L1722.0,950.0 L1720.0,950.0 L1718.0,950.0 L1716.0,950.0 L1714.0,950.0 L1712.0,950.0 L1710.0,950.0 L1708.0,950.0 L1706.0,950.0 L1704.0,950.0 L1702.0,950.0 L1700.0,950.0 L1698.0,950.0 L1696.0,950.0 L1694.7,950.0 L1694.0,950.0 L1692.0,950.0 L1690.0,950.0 L1688.0,950.0 L1686.0,950.0 L1684.0,950.0 L1682.0,950.0 L1680.0,950.0 L1678.0,950.0 L1676.0,950.0 L1674.0,950.0 L1672.0,950.0 L1670.0,950.0 L1668.4,950.0 L1668.0,950.0 L1666.0,950.0 L1664.0,950.0 L1662.0,950.0 L1661.9,950.0 L1660.0,950.0 L1658.0,950.0 L1656.0,950.0 L1654.0,950.0 L1652.0,950.0 L1650.0,950.0 L1648.0,950.0 L1646.0,950.0 L1644.0,950.0 L1642.0,950.0 L1640.0,950.0 L1638.0,950.0 L1636.0,950.0 L1634.0,950.0 L1632.0,950.0 L1630.0,950.0 L1628.0,950.0 L1626.0,950.0 L1624.0,950.0 L1622.0,950.0 L1620.0,950.0 L1618.0,950.0 L1616.0,950.0 L1614.0,950.0 L1612.0,950.0 L1610.0,950.0 L1608.0,950.0 L1606.0,950.0 L1604.0,950.0 L1602.0,950.0 L1600.0,950.0 L1598.0,950.0 L1596.6,950.0 L1596.0,950.0 L1595.0,950.0 L1594.0,950.0 L1592.0,950.0 L1590.0,950.0 L1588.0,950.0 L1586.0,950.0 L1584.0,950.0 L1582.0,950.0 L1580.0,950.0 L1578.0,950.0 L1576.0,950.0 L1574.0,950.0 L1572.0,950.0 L1570.0,950.0 L1568.0,950.0 L1566.0,950.0 L1564.0,950.0 L1562.0,950.0 L1560.0,950.0 L1558.7,950.0 L1558.0,950.0 L1556.0,950.0 L1554.0,950.0 L1552.0,950.0 L1550.0,950.0 L1548.0,950.0 L1546.0,950.0 L1544.0,950.0 L1542.0,950.0 L1541.0,950.0 L1540.0,950.0 L1538.0,950.0 L1536.0,950.0 L1534.0,950.0 L1532.0,950.0 L1530.0,950.0 L1529.5,950.0 L1528.0,950.0 L1526.0,950.0 L1524.0,950.0 L1522.0,950.0 L1520.0,950.0 L1518.0,950.0 L1516.0,950.0 L1514.0,950.0 L1512.0,950.0 L1510.0,950.0 L1508.0,950.0 L1506.0,950.0 L1504.0,950.0 L1502.0,950.0 L1500.0,950.0 L1498.0,950.0 L1496.0,950.0 L1494.0,950.0 L1492.0,950.0 L1490.0,950.0 L1488.0,950.0 L1486.0,950.0 L1484.0,950.0 L1482.0,950.0 L1480.0,950.0 L1478.0,950.0 L1476.0,950.0 L1474.0,950.0 L1472.0,950.0 L1471.2,950.0 L1470.0,950.0 L1468.0,950.0 L1466.0,950.0 L1464.0,950.0 L1462.0,950.0 L1460.0,950.0 L1458.0,950.0 L1456.0,950.0 L1454.0,950.0 L1452.0,950.0 L1450.0,950.0 L1448.0,950.0 L1446.0,950.0 L1444.0,950.0 L1442.0,950.0 L1440.0,950.0 L1438.0,950.0 L1436.0,950.0 L1434.0,950.0 L1432.0,950.0 L1430.4,950.0 L1430.0,950.0 L1428.0,950.0 L1426.0,950.0 L1424.0,950.0 L1422.0,950.0 L1420.0,950.0 L1418.0,950.0 L1416.0,950.0 L1414.0,950.0 L1412.0,950.0 L1410.0,950.0 L1408.0,950.0 L1406.0,950.0 L1404.0,950.0 L1402.0,950.0 L1400.0,950.0 L1398.3,950.0 L1398.0,950.0 L1396.0,950.0 L1394.0,950.0 L1392.0,950.0 L1390.0,950.0 L1388.0,950.0 L1386.0,950.0 L1384.0,950.0 L1382.0,950.0 L1380.0,950.0 L1378.0,950.0 L1376.0,950.0 L1375.0,950.0 L1374.0,950.0 L1372.0,950.0 L1370.0,950.0 L1368.0,950.0 L1366.0,950.0 L1364.0,950.0 L1362.0,950.0 L1360.0,950.0 L1358.0,950.0 L1356.0,950.0 L1354.0,950.0 L1352.0,950.0 L1350.0,950.0 L1348.0,950.0 L1346.0,950.0 L1344.0,950.0 L1342.0,950.0 L1340.0,950.0 L1338.0,950.0 L1336.0,950.0 L1334.5,950.0 L1334.0,950.0 L1333.0,950.0 L1332.0,950.0 L1330.0,950.0 L1328.0,950.0 L1326.0,950.0 L1324.0,950.0 L1322.0,950.0 L1320.0,950.0 L1318.0,950.0 L1316.0,950.0 L1314.0,950.0 L1312.5,950.0 L1312.0,950.0 L1310.0,950.0 L1308.0,950.0 L1306.0,950.0 L1304.0,950.0 L1302.0,950.0 L1300.0,950.0 L1270.5,950.0 L1207.6,950.0 L1207.0,950.0 L1125.0,950.0 L1107.5,950.0 L1076.5,950.0 L1076.0,950.0 L1036.4,950.0 L1036.0,950.0 L1001.5,950.0 L1001.4,950.0 L943.3,950.0 L943.0,950.0 L875.7,950.0 L875.5,950.0 L208.5,950.0 L190.8,950.0 Z" fill="url(#g_sc)"/>
<path d="M190.8,950.0 L208.5,950.0 L875.5,950.0 L875.7,950.0 L943.0,950.0 L943.3,950.0 L1001.4,950.0 L1001.5,950.0 L1036.0,950.0 L1036.4,950.0 L1076.0,950.0 L1076.5,950.0 L1107.5,950.0 L1125.0,950.0 L1207.0,950.0 L1207.6,950.0 L1270.5,950.0 L1300.0,950.0 L1302.0,950.0 L1304.0,950.0 L1306.0,950.0 L1308.0,950.0 L1310.0,950.0 L1312.0,950.0 L1312.5,950.0 L1314.0,950.0 L1316.0,950.0 L1318.0,950.0 L1320.0,950.0 L1322.0,950.0 L1324.0,950.0 L1326.0,950.0 L1328.0,950.0 L1330.0,950.0 L1332.0,950.0 L1333.0,950.0 L1334.0,950.0 L1334.5,950.0 L1336.0,950.0 L1338.0,950.0 L1340.0,950.0 L1342.0,950.0 L1344.0,950.0 L1346.0,950.0 L1348.0,950.0 L1350.0,950.0 L1352.0,950.0 L1354.0,950.0 L1356.0,950.0 L1358.0,950.0 L1360.0,950.0 L1362.0,950.0 L1364.0,950.0 L1366.0,950.0 L1368.0,950.0 L1370.0,950.0 L1372.0,950.0 L1374.0,950.0 L1375.0,950.0 L1376.0,950.0 L1378.0,950.0 L1380.0,950.0 L1382.0,950.0 L1384.0,950.0 L1386.0,950.0 L1388.0,950.0 L1390.0,950.0 L1392.0,950.0 L1394.0,950.0 L1396.0,950.0 L1398.0,950.0 L1398.3,950.0 L1400.0,950.0 L1402.0,950.0 L1404.0,950.0 L1406.0,950.0 L1408.0,950.0 L1410.0,950.0 L1412.0,950.0 L1414.0,950.0 L1416.0,950.0 L1418.0,950.0 L1420.0,950.0 L1422.0,950.0 L1424.0,950.0 L1426.0,950.0 L1428.0,950.0 L1430.0,950.0 L1430.4,950.0 L1432.0,950.0 L1434.0,950.0 L1436.0,950.0 L1438.0,950.0 L1440.0,950.0 L1442.0,950.0 L1444.0,950.0 L1446.0,950.0 L1448.0,950.0 L1450.0,950.0 L1452.0,950.0 L1454.0,950.0 L1456.0,950.0 L1458.0,950.0 L1460.0,950.0 L1462.0,950.0 L1464.0,950.0 L1466.0,950.0 L1468.0,950.0 L1470.0,950.0 L1471.2,950.0 L1472.0,950.0 L1474.0,950.0 L1476.0,950.0 L1478.0,950.0 L1480.0,950.0 L1482.0,950.0 L1484.0,950.0 L1486.0,950.0 L1488.0,950.0 L1490.0,950.0 L1492.0,950.0 L1494.0,950.0 L1496.0,950.0 L1498.0,950.0 L1500.0,950.0 L1502.0,950.0 L1504.0,950.0 L1506.0,950.0 L1508.0,950.0 L1510.0,950.0 L1512.0,950.0 L1514.0,950.0 L1516.0,950.0 L1518.0,950.0 L1520.0,950.0 L1522.0,950.0 L1524.0,950.0 L1526.0,950.0 L1528.0,950.0 L1529.5,950.0 L1530.0,950.0 L1532.0,950.0 L1534.0,950.0 L1536.0,950.0 L1538.0,950.0 L1540.0,950.0 L1541.0,950.0 L1542.0,950.0 L1544.0,950.0 L1546.0,950.0 L1548.0,950.0 L1550.0,950.0 L1552.0,950.0 L1554.0,950.0 L1556.0,950.0 L1558.0,950.0 L1558.7,950.0 L1560.0,950.0 L1562.0,950.0 L1564.0,950.0 L1566.0,950.0 L1568.0,950.0 L1570.0,950.0 L1572.0,950.0 L1574.0,950.0 L1576.0,950.0 L1578.0,950.0 L1580.0,950.0 L1582.0,950.0 L1584.0,950.0 L1586.0,950.0 L1588.0,950.0 L1590.0,950.0 L1592.0,950.0 L1594.0,950.0 L1595.0,950.0 L1596.0,950.0 L1596.6,950.0 L1598.0,950.0 L1600.0,950.0 L1602.0,950.0 L1604.0,950.0 L1606.0,950.0 L1608.0,950.0 L1610.0,950.0 L1612.0,950.0 L1614.0,950.0 L1616.0,950.0 L1618.0,950.0 L1620.0,950.0 L1622.0,950.0 L1624.0,950.0 L1626.0,950.0 L1628.0,950.0 L1630.0,950.0 L1632.0,950.0 L1634.0,950.0 L1636.0,950.0 L1638.0,950.0 L1640.0,950.0 L1642.0,950.0 L1644.0,950.0 L1646.0,950.0 L1648.0,950.0 L1650.0,950.0 L1652.0,950.0 L1654.0,950.0 L1656.0,950.0 L1658.0,950.0 L1660.0,950.0 L1661.9,950.0 L1662.0,950.0 L1664.0,950.0 L1666.0,950.0 L1668.0,950.0 L1668.4,950.0 L1670.0,950.0 L1672.0,950.0 L1674.0,950.0 L1676.0,950.0 L1678.0,950.0 L1680.0,950.0 L1682.0,950.0 L1684.0,950.0 L1686.0,950.0 L1688.0,950.0 L1690.0,950.0 L1692.0,950.0 L1694.0,950.0 L1694.7,950.0 L1696.0,950.0 L1698.0,950.0 L1700.0,950.0 L1702.0,950.0 L1704.0,950.0 L1706.0,950.0 L1708.0,950.0 L1710.0,950.0 L1712.0,950.0 L1714.0,950.0 L1716.0,950.0 L1718.0,950.0 L1720.0,950.0 L1722.0,950.0 L1724.0,950.0 L1726.0,950.0 L1728.0,950.0 L1730.0,950.0 L1732.0,950.0 L1734.0,950.0 L1736.0,950.0 L1738.0,950.0 L1738.4,950.0 L1740.0,950.0 L1742.0,950.0 L1744.0,950.0 L1746.0,950.0 L1748.0,950.0 L1750.0,950.0 L1752.0,950.0 L1754.0,950.0 L1756.0,950.0 L1758.0,950.0 L1760.0,950.0 L1762.0,950.0 L1764.0,950.0 L1766.0,950.0 L1768.0,950.0 L1770.0,950.0 L1772.0,950.0 L1774.0,950.0 L1776.0,950.0 L1778.0,950.0 L1780.0,950.0 L1782.0,950.0 L1784.0,950.0 L1786.0,950.0 L1788.0,950.0 L1790.0,950.0 L1792.0,950.0 L1794.0,950.0 L1796.0,950.0 L1798.0,950.0 L1800.0,950.0 L1802.0,950.0 L1804.0,950.0 L1806.0,950.0 L1808.0,950.0 L1810.0,950.0 L1812.0,950.0 L1814.0,950.0 L1816.0,950.0 L1818.0,950.0 L1819.3,950.0 L1820.0,950.0 L1822.0,950.0 L1824.0,950.0 L1826.0,950.0 L1828.0,950.0 L1830.0,950.0 L1832.0,950.0 L1834.0,950.0 L1836.0,950.0 L1838.0,950.0 L1839.0,950.0 L1840.0,950.0 L1842.0,950.0 L1844.0,950.0 L1846.0,950.0 L1848.0,950.0 L1850.0,950.0 L1852.0,950.0 L1854.0,950.0 L1856.0,950.0 L1856.5,950.0 L1858.0,950.0 L1858.5,950.0 L1858.7,950.0 L1860.0,950.0 L1860.6,950.0 L1860.9,950.0 L1861.2,950.0 L1861.8,950.0 L1862.0,950.0 L1863.0,950.0 L1864.0,950.0 L1866.0,950.0 L1868.0,950.0 L1868.5,950.0 L1869.9,950.0 L1870.0,950.0 L1871.7,950.0 L1871.8,950.0 L1872.0,950.0 L1872.4,950.0 L1874.0,950.0 L1876.0,950.0 L1876.2,950.0 L1878.0,950.0 L1880.0,950.0 L1882.0,950.0 L1884.0,950.0 L1886.0,950.0 L1887.0,950.0 L1888.0,950.0 L1890.0,950.0 L1891.0,950.0 L1891.5,950.0 L1892.0,950.0 L1893.5,950.0 L1894.0,950.0 L1894.7,950.0 L1896.0,950.0 L1898.0,950.0 L1900.0,950.0 L1902.0,949.9 L1903.6,949.9 L1904.0,949.9 L1906.0,949.8 L1908.0,949.8 L1910.0,949.7 L1912.0,949.7 L1914.0,949.6 L1914.6,949.6 L1916.0,949.6 L1917.2,949.5 L1918.0,949.5 L1919.6,949.5 L1920.0,949.5 L1922.0,949.4 L1924.0,949.3 L1926.0,949.3 L1928.0,949.2 L1929.5,949.2 L1930.0,949.2 L1930.7,949.2 L1930.8,949.1 L1932.0,949.1 L1934.0,949.0 L1936.0,949.0 L1938.0,949.0 L1940.0,948.9 L1941.0,948.9 L1942.0,948.8 L1943.2,948.8 L1944.0,948.8 L1946.0,948.7 L1948.0,948.7 L1950.0,948.6 L1952.0,948.5 L1953.0,948.5 L1953.1,948.5 L1954.0,948.5 L1955.6,948.5 L1956.0,948.5 L1958.0,948.4 L1960.0,948.4 L1961.5,948.3 L1961.8,948.3 L1962.0,948.3 L1964.0,948.2 L1965.0,948.1 L1965.5,948.1 L1966.0,948.1 L1966.8,948.0 L1968.0,948.0 L1970.0,947.8 L1972.0,947.8 L1974.0,947.6 L1976.0,947.5 L1978.0,947.4 L1978.5,947.3 L1980.0,947.2 L1982.0,947.1 L1984.0,947.0 L1986.0,946.9 L1988.0,946.8 L1990.0,946.6 L1992.0,946.6 L1994.0,946.5 L1996.0,946.4 L1998.0,946.3 L2000.0,946.1 L2002.0,946.0 L2002.3,946.0 L2002.5,946.0 L2003.3,945.9 L2004.0,945.9 L2005.0,945.9 L2006.0,945.9 L2008.0,945.8 L2010.0,945.6 L2012.0,945.5 L2014.0,945.4 L2014.2,945.4 L2016.0,945.2 L2017.6,945.1 L2018.0,945.1 L2020.0,945.0 L2022.0,944.9 L2024.0,944.8 L2025.0,944.9 L2026.0,944.9 L2028.0,945.0 L2030.0,945.0 L2032.0,945.1 L2032.3,945.1 L2034.0,945.2 L2036.0,945.2 L2038.0,945.3 L2038.5,945.3 L2040.0,945.3 L2042.0,945.4 L2043.0,945.5 L2044.0,945.5 L2044.7,945.5 L2046.0,945.6 L2048.0,945.6 L2050.0,945.7 L2052.0,945.8 L2054.0,945.8 L2056.0,945.9 L2056.5,945.9 L2057.0,945.9 L2058.0,946.0 L2060.0,946.0 L2062.0,946.1 L2064.0,946.1 L2065.5,946.2 L2066.0,946.2 L2066.6,946.2 L2067.0,946.2 L2067.4,946.2 L2068.0,946.3 L2068.5,946.3 L2068.8,946.3 L2070.0,946.2 L2072.0,946.2 L2074.0,946.1 L2074.4,946.1 L2076.0,946.2 L2076.7,946.1 L2077.0,946.1 L2078.0,946.2 L2080.0,946.1 L2082.0,946.2 L2084.0,946.1 L2085.7,946.1 L2086.0,946.1 L2087.5,946.1 L2088.0,946.1 L2090.0,946.1 L2090.2,946.1 L2090.7,946.2 L2092.0,946.2 L2092.4,946.1 L2094.0,946.1 L2096.0,946.0 L2098.0,946.1 L2100.0,946.1 L2102.0,946.0 L2104.0,946.0 L2104.4,946.0 L2105.9,946.0 L2106.0,946.0 L2108.0,946.0 L2108.2,946.1 L2110.0,946.0 L2112.0,946.0 L2112.7,946.0 L2114.0,946.0 L2116.0,946.0 L2116.6,946.0 L2118.0,946.0 L2120.0,946.0 L2122.0,946.0 L2124.0,945.9 L2126.0,945.9 L2126.2,945.9 L2126.8,945.9 L2128.0,945.9 L2128.2,945.9 L2130.0,945.9 L2132.0,945.9 L2132.9,945.9 L2134.0,945.9 L2136.0,945.8 L2137.0,945.9 L2137.4,945.8 L2138.0,945.9 L2140.0,945.9 L2142.0,945.9 L2144.0,945.9 L2145.8,945.9 L2146.0,945.8 L2148.0,945.8 L2148.6,945.8 L2150.0,945.8 L2151.6,945.8 L2152.0,945.8 L2154.0,945.8 L2156.0,945.8 L2156.9,945.8 L2157.1,945.8 L2158.0,945.8 L2159.5,945.8 L2159.5,947.8 L2158.0,947.8 L2157.1,947.8 L2156.9,947.8 L2156.0,947.8 L2154.0,947.8 L2152.0,947.8 L2151.6,947.8 L2150.0,947.8 L2148.6,947.8 L2148.0,947.8 L2146.0,947.8 L2145.8,947.9 L2144.0,947.9 L2142.0,947.8 L2140.0,947.8 L2138.0,947.8 L2137.4,947.8 L2137.0,947.8 L2136.0,947.8 L2134.0,947.9 L2132.9,947.9 L2132.0,947.8 L2130.0,947.9 L2128.2,947.9 L2128.0,947.9 L2126.8,947.9 L2126.2,947.9 L2126.0,947.9 L2124.0,947.9 L2122.0,947.9 L2120.0,947.9 L2118.0,947.9 L2116.6,947.9 L2116.0,947.9 L2114.0,947.9 L2112.7,947.9 L2112.0,947.9 L2110.0,947.9 L2108.2,947.9 L2108.0,947.9 L2106.0,947.9 L2105.9,947.9 L2104.4,947.9 L2104.0,947.9 L2102.0,947.9 L2100.0,948.0 L2098.0,947.9 L2096.0,947.9 L2094.0,947.9 L2092.4,947.9 L2092.0,948.0 L2090.7,948.0 L2090.2,948.0 L2090.0,948.0 L2088.0,948.0 L2087.5,948.0 L2086.0,948.0 L2085.7,948.0 L2084.0,947.9 L2082.0,948.0 L2080.0,948.0 L2078.0,948.0 L2077.0,947.9 L2076.7,947.9 L2076.0,948.0 L2074.4,948.0 L2074.0,948.0 L2072.0,948.0 L2070.0,948.0 L2068.8,948.0 L2068.5,948.0 L2068.0,948.0 L2067.4,948.0 L2067.0,948.0 L2066.6,948.0 L2066.0,948.0 L2065.5,948.0 L2064.0,948.0 L2062.0,948.0 L2060.0,948.0 L2058.0,948.0 L2057.0,948.0 L2056.5,948.0 L2056.0,948.1 L2054.0,948.0 L2052.0,948.0 L2050.0,948.0 L2048.0,948.0 L2046.0,948.0 L2044.7,948.0 L2044.0,948.0 L2043.0,948.0 L2042.0,948.1 L2040.0,948.0 L2038.5,948.0 L2038.0,948.1 L2036.0,948.1 L2034.0,948.1 L2032.3,948.0 L2032.0,948.1 L2030.0,948.1 L2028.0,948.1 L2026.0,948.1 L2025.0,948.1 L2024.0,948.1 L2022.0,948.1 L2020.0,948.1 L2018.0,948.1 L2017.6,948.1 L2016.0,948.1 L2014.2,948.1 L2014.0,948.1 L2012.0,948.1 L2010.0,948.1 L2008.0,948.1 L2006.0,948.2 L2005.0,948.1 L2004.0,948.1 L2003.3,948.1 L2002.5,948.1 L2002.3,948.2 L2002.0,948.1 L2000.0,948.1 L1998.0,948.1 L1996.0,948.1 L1994.0,948.1 L1992.0,948.1 L1990.0,948.1 L1988.0,948.1 L1986.0,948.1 L1984.0,948.1 L1982.0,948.1 L1980.0,948.1 L1978.5,948.1 L1978.0,948.2 L1976.0,948.2 L1974.0,948.2 L1972.0,948.2 L1970.0,948.2 L1968.0,948.2 L1966.8,948.2 L1966.0,948.2 L1965.5,948.2 L1965.0,948.2 L1964.0,948.6 L1962.0,949.3 L1961.8,949.4 L1961.5,949.5 L1960.0,950.0 L1958.0,950.0 L1956.0,950.0 L1955.6,950.0 L1954.0,950.0 L1953.1,950.0 L1953.0,950.0 L1952.0,950.0 L1950.0,950.0 L1948.0,950.0 L1946.0,950.0 L1944.0,950.0 L1943.2,950.0 L1942.0,950.0 L1941.0,950.0 L1940.0,950.0 L1938.0,950.0 L1936.0,950.0 L1934.0,950.0 L1932.0,950.0 L1930.8,950.0 L1930.7,950.0 L1930.0,950.0 L1929.5,950.0 L1928.0,950.0 L1926.0,950.0 L1924.0,950.0 L1922.0,950.0 L1920.0,950.0 L1919.6,950.0 L1918.0,950.0 L1917.2,950.0 L1916.0,950.0 L1914.6,950.0 L1914.0,950.0 L1912.0,950.0 L1910.0,950.0 L1908.0,950.0 L1906.0,950.0 L1904.0,950.0 L1903.6,950.0 L1902.0,950.0 L1900.0,950.0 L1898.0,950.0 L1896.0,950.0 L1894.7,950.0 L1894.0,950.0 L1893.5,950.0 L1892.0,950.0 L1891.5,950.0 L1891.0,950.0 L1890.0,950.0 L1888.0,950.0 L1887.0,950.0 L1886.0,950.0 L1884.0,950.0 L1882.0,950.0 L1880.0,950.0 L1878.0,950.0 L1876.2,950.0 L1876.0,950.0 L1874.0,950.0 L1872.4,950.0 L1872.0,950.0 L1871.8,950.0 L1871.7,950.0 L1870.0,950.0 L1869.9,950.0 L1868.5,950.0 L1868.0,950.0 L1866.0,950.0 L1864.0,950.0 L1863.0,950.0 L1862.0,950.0 L1861.8,950.0 L1861.2,950.0 L1860.9,950.0 L1860.6,950.0 L1860.0,950.0 L1858.7,950.0 L1858.5,950.0 L1858.0,950.0 L1856.5,950.0 L1856.0,950.0 L1854.0,950.0 L1852.0,950.0 L1850.0,950.0 L1848.0,950.0 L1846.0,950.0 L1844.0,950.0 L1842.0,950.0 L1840.0,950.0 L1839.0,950.0 L1838.0,950.0 L1836.0,950.0 L1834.0,950.0 L1832.0,950.0 L1830.0,950.0 L1828.0,950.0 L1826.0,950.0 L1824.0,950.0 L1822.0,950.0 L1820.0,950.0 L1819.3,950.0 L1818.0,950.0 L1816.0,950.0 L1814.0,950.0 L1812.0,950.0 L1810.0,950.0 L1808.0,950.0 L1806.0,950.0 L1804.0,950.0 L1802.0,950.0 L1800.0,950.0 L1798.0,950.0 L1796.0,950.0 L1794.0,950.0 L1792.0,950.0 L1790.0,950.0 L1788.0,950.0 L1786.0,950.0 L1784.0,950.0 L1782.0,950.0 L1780.0,950.0 L1778.0,950.0 L1776.0,950.0 L1774.0,950.0 L1772.0,950.0 L1770.0,950.0 L1768.0,950.0 L1766.0,950.0 L1764.0,950.0 L1762.0,950.0 L1760.0,950.0 L1758.0,950.0 L1756.0,950.0 L1754.0,950.0 L1752.0,950.0 L1750.0,950.0 L1748.0,950.0 L1746.0,950.0 L1744.0,950.0 L1742.0,950.0 L1740.0,950.0 L1738.4,950.0 L1738.0,950.0 L1736.0,950.0 L1734.0,950.0 L1732.0,950.0 L1730.0,950.0 L1728.0,950.0 L1726.0,950.0 L1724.0,950.0 L1722.0,950.0 L1720.0,950.0 L1718.0,950.0 L1716.0,950.0 L1714.0,950.0 L1712.0,950.0 L1710.0,950.0 L1708.0,950.0 L1706.0,950.0 L1704.0,950.0 L1702.0,950.0 L1700.0,950.0 L1698.0,950.0 L1696.0,950.0 L1694.7,950.0 L1694.0,950.0 L1692.0,950.0 L1690.0,950.0 L1688.0,950.0 L1686.0,950.0 L1684.0,950.0 L1682.0,950.0 L1680.0,950.0 L1678.0,950.0 L1676.0,950.0 L1674.0,950.0 L1672.0,950.0 L1670.0,950.0 L1668.4,950.0 L1668.0,950.0 L1666.0,950.0 L1664.0,950.0 L1662.0,950.0 L1661.9,950.0 L1660.0,950.0 L1658.0,950.0 L1656.0,950.0 L1654.0,950.0 L1652.0,950.0 L1650.0,950.0 L1648.0,950.0 L1646.0,950.0 L1644.0,950.0 L1642.0,950.0 L1640.0,950.0 L1638.0,950.0 L1636.0,950.0 L1634.0,950.0 L1632.0,950.0 L1630.0,950.0 L1628.0,950.0 L1626.0,950.0 L1624.0,950.0 L1622.0,950.0 L1620.0,950.0 L1618.0,950.0 L1616.0,950.0 L1614.0,950.0 L1612.0,950.0 L1610.0,950.0 L1608.0,950.0 L1606.0,950.0 L1604.0,950.0 L1602.0,950.0 L1600.0,950.0 L1598.0,950.0 L1596.6,950.0 L1596.0,950.0 L1595.0,950.0 L1594.0,950.0 L1592.0,950.0 L1590.0,950.0 L1588.0,950.0 L1586.0,950.0 L1584.0,950.0 L1582.0,950.0 L1580.0,950.0 L1578.0,950.0 L1576.0,950.0 L1574.0,950.0 L1572.0,950.0 L1570.0,950.0 L1568.0,950.0 L1566.0,950.0 L1564.0,950.0 L1562.0,950.0 L1560.0,950.0 L1558.7,950.0 L1558.0,950.0 L1556.0,950.0 L1554.0,950.0 L1552.0,950.0 L1550.0,950.0 L1548.0,950.0 L1546.0,950.0 L1544.0,950.0 L1542.0,950.0 L1541.0,950.0 L1540.0,950.0 L1538.0,950.0 L1536.0,950.0 L1534.0,950.0 L1532.0,950.0 L1530.0,950.0 L1529.5,950.0 L1528.0,950.0 L1526.0,950.0 L1524.0,950.0 L1522.0,950.0 L1520.0,950.0 L1518.0,950.0 L1516.0,950.0 L1514.0,950.0 L1512.0,950.0 L1510.0,950.0 L1508.0,950.0 L1506.0,950.0 L1504.0,950.0 L1502.0,950.0 L1500.0,950.0 L1498.0,950.0 L1496.0,950.0 L1494.0,950.0 L1492.0,950.0 L1490.0,950.0 L1488.0,950.0 L1486.0,950.0 L1484.0,950.0 L1482.0,950.0 L1480.0,950.0 L1478.0,950.0 L1476.0,950.0 L1474.0,950.0 L1472.0,950.0 L1471.2,950.0 L1470.0,950.0 L1468.0,950.0 L1466.0,950.0 L1464.0,950.0 L1462.0,950.0 L1460.0,950.0 L1458.0,950.0 L1456.0,950.0 L1454.0,950.0 L1452.0,950.0 L1450.0,950.0 L1448.0,950.0 L1446.0,950.0 L1444.0,950.0 L1442.0,950.0 L1440.0,950.0 L1438.0,950.0 L1436.0,950.0 L1434.0,950.0 L1432.0,950.0 L1430.4,950.0 L1430.0,950.0 L1428.0,950.0 L1426.0,950.0 L1424.0,950.0 L1422.0,950.0 L1420.0,950.0 L1418.0,950.0 L1416.0,950.0 L1414.0,950.0 L1412.0,950.0 L1410.0,950.0 L1408.0,950.0 L1406.0,950.0 L1404.0,950.0 L1402.0,950.0 L1400.0,950.0 L1398.3,950.0 L1398.0,950.0 L1396.0,950.0 L1394.0,950.0 L1392.0,950.0 L1390.0,950.0 L1388.0,950.0 L1386.0,950.0 L1384.0,950.0 L1382.0,950.0 L1380.0,950.0 L1378.0,950.0 L1376.0,950.0 L1375.0,950.0 L1374.0,950.0 L1372.0,950.0 L1370.0,950.0 L1368.0,950.0 L1366.0,950.0 L1364.0,950.0 L1362.0,950.0 L1360.0,950.0 L1358.0,950.0 L1356.0,950.0 L1354.0,950.0 L1352.0,950.0 L1350.0,950.0 L1348.0,950.0 L1346.0,950.0 L1344.0,950.0 L1342.0,950.0 L1340.0,950.0 L1338.0,950.0 L1336.0,950.0 L1334.5,950.0 L1334.0,950.0 L1333.0,950.0 L1332.0,950.0 L1330.0,950.0 L1328.0,950.0 L1326.0,950.0 L1324.0,950.0 L1322.0,950.0 L1320.0,950.0 L1318.0,950.0 L1316.0,950.0 L1314.0,950.0 L1312.5,950.0 L1312.0,950.0 L1310.0,950.0 L1308.0,950.0 L1306.0,950.0 L1304.0,950.0 L1302.0,950.0 L1300.0,950.0 L1270.5,950.0 L1207.6,950.0 L1207.0,950.0 L1125.0,950.0 L1107.5,950.0 L1076.5,950.0 L1076.0,950.0 L1036.4,950.0 L1036.0,950.0 L1001.5,950.0 L1001.4,950.0 L943.3,950.0 L943.0,950.0 L875.7,950.0 L875.5,950.0 L208.5,950.0 L190.8,950.0 Z" fill="url(#g_am)"/>
<path d="M190.8,950.0 L208.5,950.0 L875.5,950.0 L875.7,950.0 L943.0,950.0 L943.3,950.0 L1001.4,950.0 L1001.5,950.0 L1036.0,950.0 L1036.4,950.0 L1076.0,950.0 L1076.5,950.0 L1107.5,950.0 L1125.0,950.0 L1207.0,950.0 L1207.6,950.0 L1270.5,950.0 L1300.0,950.0 L1302.0,950.0 L1304.0,950.0 L1306.0,950.0 L1308.0,950.0 L1310.0,950.0 L1312.0,950.0 L1312.5,950.0 L1314.0,950.0 L1316.0,950.0 L1318.0,950.0 L1320.0,950.0 L1322.0,950.0 L1324.0,950.0 L1326.0,950.0 L1328.0,950.0 L1330.0,950.0 L1332.0,950.0 L1333.0,950.0 L1334.0,950.0 L1334.5,950.0 L1336.0,950.0 L1338.0,950.0 L1340.0,950.0 L1342.0,950.0 L1344.0,950.0 L1346.0,950.0 L1348.0,950.0 L1350.0,950.0 L1352.0,950.0 L1354.0,950.0 L1356.0,950.0 L1358.0,950.0 L1360.0,950.0 L1362.0,950.0 L1364.0,950.0 L1366.0,950.0 L1368.0,950.0 L1370.0,950.0 L1372.0,950.0 L1374.0,950.0 L1375.0,950.0 L1376.0,950.0 L1378.0,950.0 L1380.0,950.0 L1382.0,950.0 L1384.0,950.0 L1386.0,950.0 L1388.0,950.0 L1390.0,950.0 L1392.0,950.0 L1394.0,950.0 L1396.0,950.0 L1398.0,950.0 L1398.3,950.0 L1400.0,950.0 L1402.0,950.0 L1404.0,950.0 L1406.0,950.0 L1408.0,950.0 L1410.0,950.0 L1412.0,950.0 L1414.0,950.0 L1416.0,950.0 L1418.0,950.0 L1420.0,950.0 L1422.0,950.0 L1424.0,950.0 L1426.0,950.0 L1428.0,950.0 L1430.0,950.0 L1430.4,950.0 L1432.0,950.0 L1434.0,950.0 L1436.0,950.0 L1438.0,950.0 L1440.0,950.0 L1442.0,950.0 L1444.0,950.0 L1446.0,950.0 L1448.0,950.0 L1450.0,950.0 L1452.0,950.0 L1454.0,950.0 L1456.0,950.0 L1458.0,950.0 L1460.0,950.0 L1462.0,950.0 L1464.0,950.0 L1466.0,950.0 L1468.0,950.0 L1470.0,950.0 L1471.2,950.0 L1472.0,950.0 L1474.0,950.0 L1476.0,950.0 L1478.0,950.0 L1480.0,950.0 L1482.0,950.0 L1484.0,950.0 L1486.0,950.0 L1488.0,950.0 L1490.0,950.0 L1492.0,950.0 L1494.0,950.0 L1496.0,950.0 L1498.0,950.0 L1500.0,950.0 L1502.0,950.0 L1504.0,950.0 L1506.0,950.0 L1508.0,950.0 L1510.0,950.0 L1512.0,950.0 L1514.0,950.0 L1516.0,950.0 L1518.0,950.0 L1520.0,950.0 L1522.0,950.0 L1524.0,950.0 L1526.0,950.0 L1528.0,950.0 L1529.5,950.0 L1530.0,950.0 L1532.0,950.0 L1534.0,950.0 L1536.0,950.0 L1538.0,950.0 L1540.0,950.0 L1541.0,950.0 L1542.0,950.0 L1544.0,950.0 L1546.0,950.0 L1548.0,950.0 L1550.0,950.0 L1552.0,950.0 L1554.0,950.0 L1556.0,950.0 L1558.0,950.0 L1558.7,950.0 L1560.0,950.0 L1562.0,950.0 L1564.0,950.0 L1566.0,950.0 L1568.0,950.0 L1570.0,950.0 L1572.0,950.0 L1574.0,950.0 L1576.0,950.0 L1578.0,950.0 L1580.0,950.0 L1582.0,950.0 L1584.0,950.0 L1586.0,950.0 L1588.0,950.0 L1590.0,950.0 L1592.0,950.0 L1594.0,950.0 L1595.0,950.0 L1596.0,950.0 L1596.6,950.0 L1598.0,950.0 L1600.0,950.0 L1602.0,950.0 L1604.0,950.0 L1606.0,950.0 L1608.0,950.0 L1610.0,950.0 L1612.0,950.0 L1614.0,950.0 L1616.0,950.0 L1618.0,950.0 L1620.0,950.0 L1622.0,950.0 L1624.0,950.0 L1626.0,950.0 L1628.0,950.0 L1630.0,950.0 L1632.0,950.0 L1634.0,950.0 L1636.0,950.0 L1638.0,950.0 L1640.0,950.0 L1642.0,950.0 L1644.0,950.0 L1646.0,950.0 L1648.0,950.0 L1650.0,950.0 L1652.0,950.0 L1654.0,950.0 L1656.0,950.0 L1658.0,950.0 L1660.0,950.0 L1661.9,950.0 L1662.0,950.0 L1664.0,950.0 L1666.0,950.0 L1668.0,950.0 L1668.4,950.0 L1670.0,950.0 L1672.0,950.0 L1674.0,950.0 L1676.0,950.0 L1678.0,950.0 L1680.0,950.0 L1682.0,950.0 L1684.0,950.0 L1686.0,950.0 L1688.0,950.0 L1690.0,950.0 L1692.0,950.0 L1694.0,950.0 L1694.7,950.0 L1696.0,950.0 L1698.0,950.0 L1700.0,950.0 L1702.0,950.0 L1704.0,950.0 L1706.0,950.0 L1708.0,950.0 L1710.0,950.0 L1712.0,950.0 L1714.0,950.0 L1716.0,950.0 L1718.0,950.0 L1720.0,950.0 L1722.0,950.0 L1724.0,950.0 L1726.0,950.0 L1728.0,950.0 L1730.0,950.0 L1732.0,950.0 L1734.0,950.0 L1736.0,950.0 L1738.0,950.0 L1738.4,950.0 L1740.0,950.0 L1742.0,950.0 L1744.0,950.0 L1746.0,950.0 L1748.0,950.0 L1750.0,950.0 L1752.0,950.0 L1754.0,950.0 L1756.0,950.0 L1758.0,950.0 L1760.0,950.0 L1762.0,950.0 L1764.0,950.0 L1766.0,950.0 L1768.0,950.0 L1770.0,950.0 L1772.0,950.0 L1774.0,950.0 L1776.0,950.0 L1778.0,950.0 L1780.0,950.0 L1782.0,950.0 L1784.0,950.0 L1786.0,950.0 L1788.0,950.0 L1790.0,950.0 L1792.0,950.0 L1794.0,950.0 L1796.0,950.0 L1798.0,950.0 L1800.0,950.0 L1802.0,950.0 L1804.0,950.0 L1806.0,950.0 L1808.0,950.0 L1810.0,950.0 L1812.0,950.0 L1814.0,950.0 L1816.0,950.0 L1818.0,950.0 L1819.3,950.0 L1820.0,950.0 L1822.0,950.0 L1824.0,950.0 L1826.0,950.0 L1828.0,950.0 L1830.0,950.0 L1832.0,950.0 L1834.0,950.0 L1836.0,950.0 L1838.0,950.0 L1839.0,950.0 L1840.0,950.0 L1842.0,950.0 L1844.0,950.0 L1846.0,950.0 L1848.0,950.0 L1850.0,950.0 L1852.0,950.0 L1854.0,950.0 L1856.0,950.0 L1856.5,950.0 L1858.0,950.0 L1858.5,950.0 L1858.7,950.0 L1860.0,950.0 L1860.6,950.0 L1860.9,950.0 L1861.2,950.0 L1861.8,950.0 L1862.0,950.0 L1863.0,950.0 L1864.0,950.0 L1866.0,950.0 L1868.0,950.0 L1868.5,950.0 L1869.9,950.0 L1870.0,950.0 L1871.7,950.0 L1871.8,950.0 L1872.0,950.0 L1872.4,950.0 L1874.0,950.0 L1876.0,950.0 L1876.2,950.0 L1878.0,950.0 L1880.0,950.0 L1882.0,950.0 L1884.0,950.0 L1886.0,950.0 L1887.0,950.0 L1888.0,950.0 L1890.0,950.0 L1891.0,950.0 L1891.5,950.0 L1892.0,950.0 L1893.5,950.0 L1894.0,950.0 L1894.7,950.0 L1896.0,950.0 L1898.0,950.0 L1900.0,950.0 L1902.0,949.9 L1903.6,949.9 L1904.0,949.9 L1906.0,949.8 L1908.0,949.8 L1910.0,949.7 L1912.0,949.7 L1914.0,949.6 L1914.6,949.6 L1916.0,949.6 L1917.2,949.5 L1918.0,949.5 L1919.6,949.5 L1920.0,949.5 L1922.0,949.4 L1924.0,949.3 L1926.0,949.3 L1928.0,949.2 L1929.5,949.2 L1930.0,949.2 L1930.7,949.2 L1930.8,949.1 L1932.0,949.1 L1934.0,949.0 L1936.0,949.0 L1938.0,949.0 L1940.0,948.9 L1941.0,948.9 L1942.0,948.8 L1943.2,948.8 L1944.0,948.8 L1946.0,948.7 L1948.0,948.7 L1950.0,948.6 L1952.0,948.5 L1953.0,948.5 L1953.1,948.5 L1954.0,948.5 L1955.6,948.5 L1956.0,948.5 L1958.0,948.4 L1960.0,948.4 L1961.5,948.3 L1961.8,948.3 L1962.0,948.3 L1964.0,948.2 L1965.0,948.1 L1965.5,948.1 L1966.0,948.1 L1966.8,948.0 L1968.0,948.0 L1970.0,947.8 L1972.0,947.8 L1974.0,947.6 L1976.0,947.5 L1978.0,947.4 L1978.5,947.3 L1980.0,947.2 L1982.0,947.1 L1984.0,947.0 L1986.0,946.9 L1988.0,946.8 L1990.0,946.6 L1992.0,946.6 L1994.0,946.5 L1996.0,946.4 L1998.0,946.3 L2000.0,946.1 L2002.0,946.0 L2002.3,946.0 L2002.5,946.0 L2003.3,945.9 L2004.0,945.9 L2005.0,945.9 L2006.0,945.9 L2008.0,945.8 L2010.0,945.6 L2012.0,945.5 L2014.0,945.4 L2014.2,945.4 L2016.0,945.2 L2017.6,945.1 L2018.0,945.1 L2020.0,945.0 L2022.0,944.9 L2024.0,944.8 L2025.0,944.9 L2026.0,944.9 L2028.0,945.0 L2030.0,945.0 L2032.0,945.1 L2032.3,945.0 L2034.0,945.2 L2036.0,945.2 L2038.0,945.3 L2038.5,945.3 L2040.0,945.3 L2042.0,945.4 L2043.0,945.5 L2044.0,945.5 L2044.7,945.5 L2046.0,945.6 L2048.0,945.6 L2050.0,945.6 L2052.0,945.7 L2054.0,945.8 L2056.0,945.9 L2056.5,945.9 L2057.0,945.9 L2058.0,945.9 L2060.0,946.0 L2062.0,946.1 L2064.0,946.1 L2065.5,946.1 L2066.0,946.2 L2066.6,946.2 L2067.0,946.2 L2067.4,946.2 L2068.0,941.2 L2068.5,936.8 L2068.8,934.3 L2070.0,934.4 L2072.0,934.8 L2074.0,935.1 L2074.4,935.2 L2076.0,935.5 L2076.7,935.6 L2077.0,935.7 L2078.0,935.9 L2080.0,936.3 L2082.0,936.5 L2084.0,936.9 L2085.7,937.3 L2086.0,937.4 L2087.5,937.5 L2088.0,937.6 L2090.0,937.9 L2090.2,937.9 L2090.7,938.1 L2092.0,938.3 L2092.4,938.3 L2094.0,938.6 L2096.0,939.0 L2098.0,939.4 L2100.0,939.8 L2102.0,940.1 L2104.0,940.4 L2104.4,940.4 L2105.9,940.7 L2106.0,940.7 L2108.0,940.7 L2108.2,940.6 L2110.0,940.6 L2112.0,940.6 L2112.7,940.5 L2114.0,940.7 L2116.0,940.7 L2116.6,940.6 L2118.0,940.4 L2120.0,940.5 L2122.0,940.4 L2124.0,940.2 L2126.0,940.1 L2126.2,940.4 L2126.8,940.3 L2128.0,940.2 L2128.2,940.2 L2130.0,940.3 L2132.0,940.2 L2132.9,940.3 L2134.0,940.1 L2136.0,940.1 L2137.0,940.1 L2137.4,940.1 L2138.0,940.1 L2140.0,940.1 L2142.0,940.1 L2144.0,940.1 L2145.8,940.1 L2146.0,940.1 L2148.0,940.0 L2148.6,940.1 L2150.0,940.0 L2151.6,939.9 L2152.0,939.9 L2154.0,940.0 L2156.0,939.9 L2156.9,939.7 L2157.1,939.7 L2158.0,939.8 L2159.5,939.9 L2159.5,945.8 L2158.0,945.8 L2157.1,945.8 L2156.9,945.8 L2156.0,945.8 L2154.0,945.8 L2152.0,945.8 L2151.6,945.8 L2150.0,945.8 L2148.6,945.8 L2148.0,945.8 L2146.0,945.8 L2145.8,945.9 L2144.0,945.9 L2142.0,945.9 L2140.0,945.9 L2138.0,945.9 L2137.4,945.8 L2137.0,945.9 L2136.0,945.8 L2134.0,945.9 L2132.9,945.9 L2132.0,945.9 L2130.0,945.9 L2128.2,945.9 L2128.0,945.9 L2126.8,945.9 L2126.2,945.9 L2126.0,945.9 L2124.0,945.9 L2122.0,946.0 L2120.0,946.0 L2118.0,946.0 L2116.6,946.0 L2116.0,946.0 L2114.0,946.0 L2112.7,946.0 L2112.0,946.0 L2110.0,946.0 L2108.2,946.1 L2108.0,946.0 L2106.0,946.0 L2105.9,946.0 L2104.4,946.0 L2104.0,946.0 L2102.0,946.0 L2100.0,946.1 L2098.0,946.1 L2096.0,946.0 L2094.0,946.1 L2092.4,946.1 L2092.0,946.2 L2090.7,946.2 L2090.2,946.1 L2090.0,946.1 L2088.0,946.1 L2087.5,946.1 L2086.0,946.1 L2085.7,946.1 L2084.0,946.1 L2082.0,946.2 L2080.0,946.1 L2078.0,946.2 L2077.0,946.1 L2076.7,946.1 L2076.0,946.2 L2074.4,946.1 L2074.0,946.1 L2072.0,946.2 L2070.0,946.2 L2068.8,946.3 L2068.5,946.3 L2068.0,946.3 L2067.4,946.2 L2067.0,946.2 L2066.6,946.2 L2066.0,946.2 L2065.5,946.2 L2064.0,946.1 L2062.0,946.1 L2060.0,946.0 L2058.0,946.0 L2057.0,945.9 L2056.5,945.9 L2056.0,945.9 L2054.0,945.8 L2052.0,945.8 L2050.0,945.7 L2048.0,945.6 L2046.0,945.6 L2044.7,945.5 L2044.0,945.5 L2043.0,945.5 L2042.0,945.4 L2040.0,945.3 L2038.5,945.3 L2038.0,945.3 L2036.0,945.2 L2034.0,945.2 L2032.3,945.1 L2032.0,945.1 L2030.0,945.0 L2028.0,945.0 L2026.0,944.9 L2025.0,944.9 L2024.0,944.8 L2022.0,944.9 L2020.0,945.0 L2018.0,945.1 L2017.6,945.1 L2016.0,945.2 L2014.2,945.4 L2014.0,945.4 L2012.0,945.5 L2010.0,945.6 L2008.0,945.8 L2006.0,945.9 L2005.0,945.9 L2004.0,945.9 L2003.3,945.9 L2002.5,946.0 L2002.3,946.0 L2002.0,946.0 L2000.0,946.1 L1998.0,946.3 L1996.0,946.4 L1994.0,946.5 L1992.0,946.6 L1990.0,946.6 L1988.0,946.8 L1986.0,946.9 L1984.0,947.0 L1982.0,947.1 L1980.0,947.2 L1978.5,947.3 L1978.0,947.4 L1976.0,947.5 L1974.0,947.6 L1972.0,947.8 L1970.0,947.8 L1968.0,948.0 L1966.8,948.0 L1966.0,948.1 L1965.5,948.1 L1965.0,948.1 L1964.0,948.2 L1962.0,948.3 L1961.8,948.3 L1961.5,948.3 L1960.0,948.4 L1958.0,948.4 L1956.0,948.5 L1955.6,948.5 L1954.0,948.5 L1953.1,948.5 L1953.0,948.5 L1952.0,948.5 L1950.0,948.6 L1948.0,948.7 L1946.0,948.7 L1944.0,948.8 L1943.2,948.8 L1942.0,948.8 L1941.0,948.9 L1940.0,948.9 L1938.0,949.0 L1936.0,949.0 L1934.0,949.0 L1932.0,949.1 L1930.8,949.1 L1930.7,949.2 L1930.0,949.2 L1929.5,949.2 L1928.0,949.2 L1926.0,949.3 L1924.0,949.3 L1922.0,949.4 L1920.0,949.5 L1919.6,949.5 L1918.0,949.5 L1917.2,949.5 L1916.0,949.6 L1914.6,949.6 L1914.0,949.6 L1912.0,949.7 L1910.0,949.7 L1908.0,949.8 L1906.0,949.8 L1904.0,949.9 L1903.6,949.9 L1902.0,949.9 L1900.0,950.0 L1898.0,950.0 L1896.0,950.0 L1894.7,950.0 L1894.0,950.0 L1893.5,950.0 L1892.0,950.0 L1891.5,950.0 L1891.0,950.0 L1890.0,950.0 L1888.0,950.0 L1887.0,950.0 L1886.0,950.0 L1884.0,950.0 L1882.0,950.0 L1880.0,950.0 L1878.0,950.0 L1876.2,950.0 L1876.0,950.0 L1874.0,950.0 L1872.4,950.0 L1872.0,950.0 L1871.8,950.0 L1871.7,950.0 L1870.0,950.0 L1869.9,950.0 L1868.5,950.0 L1868.0,950.0 L1866.0,950.0 L1864.0,950.0 L1863.0,950.0 L1862.0,950.0 L1861.8,950.0 L1861.2,950.0 L1860.9,950.0 L1860.6,950.0 L1860.0,950.0 L1858.7,950.0 L1858.5,950.0 L1858.0,950.0 L1856.5,950.0 L1856.0,950.0 L1854.0,950.0 L1852.0,950.0 L1850.0,950.0 L1848.0,950.0 L1846.0,950.0 L1844.0,950.0 L1842.0,950.0 L1840.0,950.0 L1839.0,950.0 L1838.0,950.0 L1836.0,950.0 L1834.0,950.0 L1832.0,950.0 L1830.0,950.0 L1828.0,950.0 L1826.0,950.0 L1824.0,950.0 L1822.0,950.0 L1820.0,950.0 L1819.3,950.0 L1818.0,950.0 L1816.0,950.0 L1814.0,950.0 L1812.0,950.0 L1810.0,950.0 L1808.0,950.0 L1806.0,950.0 L1804.0,950.0 L1802.0,950.0 L1800.0,950.0 L1798.0,950.0 L1796.0,950.0 L1794.0,950.0 L1792.0,950.0 L1790.0,950.0 L1788.0,950.0 L1786.0,950.0 L1784.0,950.0 L1782.0,950.0 L1780.0,950.0 L1778.0,950.0 L1776.0,950.0 L1774.0,950.0 L1772.0,950.0 L1770.0,950.0 L1768.0,950.0 L1766.0,950.0 L1764.0,950.0 L1762.0,950.0 L1760.0,950.0 L1758.0,950.0 L1756.0,950.0 L1754.0,950.0 L1752.0,950.0 L1750.0,950.0 L1748.0,950.0 L1746.0,950.0 L1744.0,950.0 L1742.0,950.0 L1740.0,950.0 L1738.4,950.0 L1738.0,950.0 L1736.0,950.0 L1734.0,950.0 L1732.0,950.0 L1730.0,950.0 L1728.0,950.0 L1726.0,950.0 L1724.0,950.0 L1722.0,950.0 L1720.0,950.0 L1718.0,950.0 L1716.0,950.0 L1714.0,950.0 L1712.0,950.0 L1710.0,950.0 L1708.0,950.0 L1706.0,950.0 L1704.0,950.0 L1702.0,950.0 L1700.0,950.0 L1698.0,950.0 L1696.0,950.0 L1694.7,950.0 L1694.0,950.0 L1692.0,950.0 L1690.0,950.0 L1688.0,950.0 L1686.0,950.0 L1684.0,950.0 L1682.0,950.0 L1680.0,950.0 L1678.0,950.0 L1676.0,950.0 L1674.0,950.0 L1672.0,950.0 L1670.0,950.0 L1668.4,950.0 L1668.0,950.0 L1666.0,950.0 L1664.0,950.0 L1662.0,950.0 L1661.9,950.0 L1660.0,950.0 L1658.0,950.0 L1656.0,950.0 L1654.0,950.0 L1652.0,950.0 L1650.0,950.0 L1648.0,950.0 L1646.0,950.0 L1644.0,950.0 L1642.0,950.0 L1640.0,950.0 L1638.0,950.0 L1636.0,950.0 L1634.0,950.0 L1632.0,950.0 L1630.0,950.0 L1628.0,950.0 L1626.0,950.0 L1624.0,950.0 L1622.0,950.0 L1620.0,950.0 L1618.0,950.0 L1616.0,950.0 L1614.0,950.0 L1612.0,950.0 L1610.0,950.0 L1608.0,950.0 L1606.0,950.0 L1604.0,950.0 L1602.0,950.0 L1600.0,950.0 L1598.0,950.0 L1596.6,950.0 L1596.0,950.0 L1595.0,950.0 L1594.0,950.0 L1592.0,950.0 L1590.0,950.0 L1588.0,950.0 L1586.0,950.0 L1584.0,950.0 L1582.0,950.0 L1580.0,950.0 L1578.0,950.0 L1576.0,950.0 L1574.0,950.0 L1572.0,950.0 L1570.0,950.0 L1568.0,950.0 L1566.0,950.0 L1564.0,950.0 L1562.0,950.0 L1560.0,950.0 L1558.7,950.0 L1558.0,950.0 L1556.0,950.0 L1554.0,950.0 L1552.0,950.0 L1550.0,950.0 L1548.0,950.0 L1546.0,950.0 L1544.0,950.0 L1542.0,950.0 L1541.0,950.0 L1540.0,950.0 L1538.0,950.0 L1536.0,950.0 L1534.0,950.0 L1532.0,950.0 L1530.0,950.0 L1529.5,950.0 L1528.0,950.0 L1526.0,950.0 L1524.0,950.0 L1522.0,950.0 L1520.0,950.0 L1518.0,950.0 L1516.0,950.0 L1514.0,950.0 L1512.0,950.0 L1510.0,950.0 L1508.0,950.0 L1506.0,950.0 L1504.0,950.0 L1502.0,950.0 L1500.0,950.0 L1498.0,950.0 L1496.0,950.0 L1494.0,950.0 L1492.0,950.0 L1490.0,950.0 L1488.0,950.0 L1486.0,950.0 L1484.0,950.0 L1482.0,950.0 L1480.0,950.0 L1478.0,950.0 L1476.0,950.0 L1474.0,950.0 L1472.0,950.0 L1471.2,950.0 L1470.0,950.0 L1468.0,950.0 L1466.0,950.0 L1464.0,950.0 L1462.0,950.0 L1460.0,950.0 L1458.0,950.0 L1456.0,950.0 L1454.0,950.0 L1452.0,950.0 L1450.0,950.0 L1448.0,950.0 L1446.0,950.0 L1444.0,950.0 L1442.0,950.0 L1440.0,950.0 L1438.0,950.0 L1436.0,950.0 L1434.0,950.0 L1432.0,950.0 L1430.4,950.0 L1430.0,950.0 L1428.0,950.0 L1426.0,950.0 L1424.0,950.0 L1422.0,950.0 L1420.0,950.0 L1418.0,950.0 L1416.0,950.0 L1414.0,950.0 L1412.0,950.0 L1410.0,950.0 L1408.0,950.0 L1406.0,950.0 L1404.0,950.0 L1402.0,950.0 L1400.0,950.0 L1398.3,950.0 L1398.0,950.0 L1396.0,950.0 L1394.0,950.0 L1392.0,950.0 L1390.0,950.0 L1388.0,950.0 L1386.0,950.0 L1384.0,950.0 L1382.0,950.0 L1380.0,950.0 L1378.0,950.0 L1376.0,950.0 L1375.0,950.0 L1374.0,950.0 L1372.0,950.0 L1370.0,950.0 L1368.0,950.0 L1366.0,950.0 L1364.0,950.0 L1362.0,950.0 L1360.0,950.0 L1358.0,950.0 L1356.0,950.0 L1354.0,950.0 L1352.0,950.0 L1350.0,950.0 L1348.0,950.0 L1346.0,950.0 L1344.0,950.0 L1342.0,950.0 L1340.0,950.0 L1338.0,950.0 L1336.0,950.0 L1334.5,950.0 L1334.0,950.0 L1333.0,950.0 L1332.0,950.0 L1330.0,950.0 L1328.0,950.0 L1326.0,950.0 L1324.0,950.0 L1322.0,950.0 L1320.0,950.0 L1318.0,950.0 L1316.0,950.0 L1314.0,950.0 L1312.5,950.0 L1312.0,950.0 L1310.0,950.0 L1308.0,950.0 L1306.0,950.0 L1304.0,950.0 L1302.0,950.0 L1300.0,950.0 L1270.5,950.0 L1207.6,950.0 L1207.0,950.0 L1125.0,950.0 L1107.5,950.0 L1076.5,950.0 L1076.0,950.0 L1036.4,950.0 L1036.0,950.0 L1001.5,950.0 L1001.4,950.0 L943.3,950.0 L943.0,950.0 L875.7,950.0 L875.5,950.0 L208.5,950.0 L190.8,950.0 Z" fill="url(#g_pe)"/>
<path d="M190.8,950.0 L208.5,950.0 L875.5,950.0 L875.7,950.0 L943.0,950.0 L943.3,950.0 L1001.4,950.0 L1001.5,950.0 L1036.0,950.0 L1036.4,950.0 L1076.0,950.0 L1076.5,950.0 L1107.5,950.0 L1125.0,950.0 L1207.0,950.0 L1207.6,950.0 L1270.5,950.0 L1300.0,950.0 L1302.0,950.0 L1304.0,950.0 L1306.0,950.0 L1308.0,950.0 L1310.0,950.0 L1312.0,950.0 L1312.5,950.0 L1314.0,950.0 L1316.0,950.0 L1318.0,950.0 L1320.0,950.0 L1322.0,950.0 L1324.0,950.0 L1326.0,950.0 L1328.0,950.0 L1330.0,950.0 L1332.0,950.0 L1333.0,950.0 L1334.0,949.0 L1334.5,948.5 L1336.0,948.5 L1338.0,948.5 L1340.0,948.5 L1342.0,948.5 L1344.0,948.5 L1346.0,948.5 L1348.0,948.5 L1350.0,948.5 L1352.0,948.5 L1354.0,948.5 L1356.0,948.5 L1358.0,948.5 L1360.0,948.5 L1362.0,948.5 L1364.0,948.5 L1366.0,948.5 L1368.0,948.5 L1370.0,948.5 L1372.0,948.5 L1374.0,948.5 L1375.0,948.5 L1376.0,948.5 L1378.0,948.5 L1380.0,948.5 L1382.0,948.5 L1384.0,948.5 L1386.0,948.5 L1388.0,948.5 L1390.0,948.5 L1392.0,948.5 L1394.0,948.5 L1396.0,948.4 L1398.0,948.5 L1398.3,948.4 L1400.0,948.4 L1402.0,948.5 L1404.0,948.5 L1406.0,948.4 L1408.0,948.5 L1410.0,948.5 L1412.0,948.5 L1414.0,948.5 L1416.0,948.5 L1418.0,948.5 L1420.0,948.5 L1422.0,948.5 L1424.0,948.5 L1426.0,948.5 L1428.0,948.5 L1430.0,948.5 L1430.4,948.5 L1432.0,948.5 L1434.0,948.4 L1436.0,948.5 L1438.0,948.5 L1440.0,948.5 L1442.0,948.4 L1444.0,948.4 L1446.0,948.5 L1448.0,948.5 L1450.0,948.5 L1452.0,948.4 L1454.0,948.4 L1456.0,948.4 L1458.0,948.5 L1460.0,948.4 L1462.0,948.5 L1464.0,948.4 L1466.0,948.5 L1468.0,948.5 L1470.0,948.5 L1471.2,948.4 L1472.0,948.4 L1474.0,948.4 L1476.0,948.4 L1478.0,948.4 L1480.0,948.4 L1482.0,948.4 L1484.0,948.4 L1486.0,948.5 L1488.0,948.4 L1490.0,948.4 L1492.0,948.4 L1494.0,948.5 L1496.0,948.5 L1498.0,948.4 L1500.0,948.5 L1502.0,948.4 L1504.0,948.5 L1506.0,948.4 L1508.0,948.4 L1510.0,948.4 L1512.0,948.4 L1514.0,948.4 L1516.0,948.4 L1518.0,948.4 L1520.0,948.4 L1522.0,948.4 L1524.0,948.4 L1526.0,948.4 L1528.0,948.4 L1529.5,948.4 L1530.0,948.5 L1532.0,948.5 L1534.0,948.4 L1536.0,948.4 L1538.0,948.4 L1540.0,948.4 L1541.0,948.4 L1542.0,948.4 L1544.0,948.4 L1546.0,948.4 L1548.0,948.4 L1550.0,948.4 L1552.0,948.4 L1554.0,948.4 L1556.0,948.4 L1558.0,948.4 L1558.7,948.4 L1560.0,948.4 L1562.0,948.4 L1564.0,948.4 L1566.0,948.4 L1568.0,948.4 L1570.0,948.4 L1572.0,948.4 L1574.0,948.4 L1576.0,948.4 L1578.0,948.4 L1580.0,948.5 L1582.0,948.4 L1584.0,948.4 L1586.0,948.4 L1588.0,948.4 L1590.0,948.4 L1592.0,948.3 L1594.0,948.4 L1595.0,948.4 L1596.0,948.4 L1596.6,948.4 L1598.0,948.4 L1600.0,948.4 L1602.0,948.4 L1604.0,948.4 L1606.0,948.4 L1608.0,948.4 L1610.0,948.4 L1612.0,948.4 L1614.0,948.4 L1616.0,948.4 L1618.0,948.4 L1620.0,948.4 L1622.0,948.4 L1624.0,948.4 L1626.0,948.3 L1628.0,948.4 L1630.0,948.4 L1632.0,948.4 L1634.0,948.4 L1636.0,948.4 L1638.0,948.4 L1640.0,948.4 L1642.0,948.4 L1644.0,948.4 L1646.0,948.4 L1648.0,948.4 L1650.0,948.4 L1652.0,948.4 L1654.0,948.4 L1656.0,948.4 L1658.0,948.4 L1660.0,948.4 L1661.9,948.4 L1662.0,948.4 L1664.0,948.4 L1666.0,948.4 L1668.0,948.4 L1668.4,948.4 L1670.0,948.4 L1672.0,948.4 L1674.0,948.4 L1676.0,948.4 L1678.0,948.4 L1680.0,948.4 L1682.0,948.4 L1684.0,948.4 L1686.0,948.3 L1688.0,948.4 L1690.0,948.4 L1692.0,948.4 L1694.0,948.3 L1694.7,948.3 L1696.0,948.3 L1698.0,948.4 L1700.0,948.4 L1702.0,948.3 L1704.0,948.3 L1706.0,948.3 L1708.0,948.4 L1710.0,948.3 L1712.0,948.4 L1714.0,948.4 L1716.0,948.4 L1718.0,948.3 L1720.0,948.3 L1722.0,948.3 L1724.0,948.3 L1726.0,948.3 L1728.0,948.3 L1730.0,948.3 L1732.0,948.4 L1734.0,948.4 L1736.0,948.3 L1738.0,948.4 L1738.4,948.4 L1740.0,948.4 L1742.0,948.4 L1744.0,948.3 L1746.0,948.3 L1748.0,948.4 L1750.0,948.4 L1752.0,948.3 L1754.0,948.4 L1756.0,948.3 L1758.0,948.4 L1760.0,948.3 L1762.0,948.3 L1764.0,948.3 L1766.0,948.3 L1768.0,948.3 L1770.0,948.3 L1772.0,948.3 L1774.0,948.3 L1776.0,948.3 L1778.0,948.3 L1780.0,948.3 L1782.0,948.3 L1784.0,948.3 L1786.0,948.3 L1788.0,948.3 L1790.0,948.3 L1792.0,948.3 L1794.0,948.3 L1796.0,948.3 L1798.0,948.4 L1800.0,948.4 L1802.0,948.4 L1804.0,948.3 L1806.0,948.3 L1808.0,948.3 L1810.0,948.3 L1812.0,948.3 L1814.0,948.3 L1816.0,948.3 L1818.0,948.3 L1819.3,948.3 L1820.0,948.3 L1822.0,948.3 L1824.0,948.3 L1826.0,948.3 L1828.0,948.3 L1830.0,948.3 L1832.0,948.3 L1834.0,948.3 L1836.0,948.3 L1838.0,948.3 L1839.0,948.3 L1840.0,948.3 L1842.0,948.3 L1844.0,948.3 L1846.0,948.3 L1848.0,948.3 L1850.0,948.3 L1852.0,948.3 L1854.0,948.3 L1856.0,948.3 L1856.5,948.3 L1858.0,948.3 L1858.5,946.8 L1858.7,946.1 L1860.0,942.1 L1860.6,940.2 L1860.9,940.1 L1861.2,940.3 L1861.8,940.4 L1862.0,940.5 L1863.0,940.7 L1864.0,941.1 L1866.0,941.7 L1868.0,942.3 L1868.5,942.3 L1869.9,942.6 L1870.0,942.6 L1871.7,943.1 L1871.8,943.1 L1872.0,943.2 L1872.4,943.3 L1874.0,942.4 L1876.0,941.3 L1876.2,941.1 L1878.0,940.2 L1880.0,939.2 L1882.0,937.9 L1884.0,936.8 L1886.0,935.9 L1887.0,935.6 L1888.0,934.9 L1890.0,933.8 L1891.0,933.4 L1891.5,933.6 L1892.0,934.6 L1893.5,936.4 L1894.0,936.9 L1894.7,937.5 L1896.0,938.0 L1898.0,938.3 L1900.0,938.4 L1902.0,938.7 L1903.6,939.1 L1904.0,939.2 L1906.0,939.7 L1908.0,939.9 L1910.0,940.4 L1912.0,940.9 L1914.0,941.3 L1914.6,941.2 L1916.0,941.5 L1917.2,941.6 L1918.0,941.6 L1919.6,941.9 L1920.0,941.7 L1922.0,941.0 L1924.0,940.4 L1926.0,939.7 L1928.0,939.1 L1929.5,938.5 L1930.0,938.5 L1930.7,938.4 L1930.8,938.5 L1932.0,938.5 L1934.0,938.7 L1936.0,939.1 L1938.0,939.4 L1940.0,939.7 L1941.0,939.7 L1942.0,939.8 L1943.2,940.0 L1944.0,940.2 L1946.0,940.5 L1948.0,940.6 L1950.0,941.0 L1952.0,941.3 L1953.0,941.3 L1953.1,941.3 L1954.0,941.2 L1955.6,940.8 L1956.0,940.9 L1958.0,940.5 L1960.0,940.4 L1961.5,940.0 L1961.8,939.8 L1962.0,939.8 L1964.0,939.5 L1965.0,939.3 L1965.5,939.2 L1966.0,939.1 L1966.8,939.0 L1968.0,939.0 L1970.0,939.2 L1972.0,939.6 L1974.0,940.0 L1976.0,940.4 L1978.0,940.7 L1978.5,940.6 L1980.0,940.8 L1982.0,940.6 L1984.0,940.5 L1986.0,940.4 L1988.0,940.3 L1990.0,940.1 L1992.0,939.9 L1994.0,939.7 L1996.0,939.7 L1998.0,939.6 L2000.0,939.4 L2002.0,939.3 L2002.3,939.1 L2002.5,939.2 L2003.3,939.2 L2004.0,939.2 L2005.0,939.0 L2006.0,939.0 L2008.0,938.9 L2010.0,938.5 L2012.0,938.5 L2014.0,938.4 L2014.2,938.4 L2016.0,938.2 L2017.6,938.1 L2018.0,938.0 L2020.0,937.9 L2022.0,937.7 L2024.0,937.5 L2025.0,937.4 L2026.0,937.4 L2028.0,937.1 L2030.0,936.8 L2032.0,936.4 L2032.3,936.4 L2034.0,936.3 L2036.0,935.9 L2038.0,935.8 L2038.5,935.8 L2040.0,935.6 L2042.0,935.4 L2043.0,935.3 L2044.0,935.2 L2044.7,935.2 L2046.0,935.0 L2048.0,934.6 L2050.0,934.0 L2052.0,933.7 L2054.0,933.7 L2056.0,933.2 L2056.5,933.2 L2057.0,933.0 L2058.0,933.1 L2060.0,932.7 L2062.0,932.4 L2064.0,932.2 L2065.5,932.1 L2066.0,932.1 L2066.6,931.9 L2067.0,929.7 L2067.4,927.7 L2068.0,925.1 L2068.5,923.0 L2068.8,921.8 L2070.0,921.8 L2072.0,922.3 L2074.0,922.6 L2074.4,922.7 L2076.0,922.8 L2076.7,922.9 L2077.0,923.0 L2078.0,923.3 L2080.0,923.8 L2082.0,924.2 L2084.0,924.6 L2085.7,925.1 L2086.0,925.0 L2087.5,925.3 L2088.0,925.4 L2090.0,926.1 L2090.2,926.1 L2090.7,926.3 L2092.0,926.6 L2092.4,926.6 L2094.0,927.0 L2096.0,927.5 L2098.0,928.0 L2100.0,928.5 L2102.0,928.9 L2104.0,929.4 L2104.4,929.4 L2105.9,929.7 L2106.0,929.9 L2108.0,929.5 L2108.2,929.2 L2110.0,929.0 L2112.0,928.7 L2112.7,928.6 L2114.0,928.7 L2116.0,928.2 L2116.6,927.8 L2118.0,927.8 L2120.0,927.4 L2122.0,927.3 L2124.0,926.7 L2126.0,926.7 L2126.2,926.7 L2126.8,926.5 L2128.0,926.6 L2128.2,926.6 L2130.0,926.5 L2132.0,926.2 L2132.9,926.0 L2134.0,925.7 L2136.0,925.7 L2137.0,925.5 L2137.4,925.2 L2138.0,925.1 L2140.0,924.7 L2142.0,925.1 L2144.0,924.9 L2145.8,924.9 L2146.0,924.7 L2148.0,924.8 L2148.6,924.9 L2150.0,924.8 L2151.6,924.5 L2152.0,924.8 L2154.0,924.5 L2156.0,924.3 L2156.9,924.0 L2157.1,924.4 L2158.0,924.2 L2159.5,924.3 L2159.5,939.9 L2158.0,939.8 L2157.1,939.7 L2156.9,939.7 L2156.0,939.9 L2154.0,940.0 L2152.0,939.9 L2151.6,939.9 L2150.0,940.0 L2148.6,940.1 L2148.0,940.0 L2146.0,940.1 L2145.8,940.1 L2144.0,940.1 L2142.0,940.1 L2140.0,940.1 L2138.0,940.1 L2137.4,940.1 L2137.0,940.1 L2136.0,940.1 L2134.0,940.1 L2132.9,940.3 L2132.0,940.2 L2130.0,940.3 L2128.2,940.2 L2128.0,940.2 L2126.8,940.3 L2126.2,940.4 L2126.0,940.1 L2124.0,940.2 L2122.0,940.4 L2120.0,940.5 L2118.0,940.4 L2116.6,940.6 L2116.0,940.7 L2114.0,940.7 L2112.7,940.5 L2112.0,940.6 L2110.0,940.6 L2108.2,940.6 L2108.0,940.7 L2106.0,940.7 L2105.9,940.7 L2104.4,940.4 L2104.0,940.4 L2102.0,940.1 L2100.0,939.8 L2098.0,939.4 L2096.0,939.0 L2094.0,938.6 L2092.4,938.3 L2092.0,938.3 L2090.7,938.1 L2090.2,937.9 L2090.0,937.9 L2088.0,937.6 L2087.5,937.5 L2086.0,937.4 L2085.7,937.3 L2084.0,936.9 L2082.0,936.5 L2080.0,936.3 L2078.0,935.9 L2077.0,935.7 L2076.7,935.6 L2076.0,935.5 L2074.4,935.2 L2074.0,935.1 L2072.0,934.8 L2070.0,934.4 L2068.8,934.3 L2068.5,936.8 L2068.0,941.2 L2067.4,946.2 L2067.0,946.2 L2066.6,946.2 L2066.0,946.2 L2065.5,946.1 L2064.0,946.1 L2062.0,946.1 L2060.0,946.0 L2058.0,945.9 L2057.0,945.9 L2056.5,945.9 L2056.0,945.9 L2054.0,945.8 L2052.0,945.7 L2050.0,945.6 L2048.0,945.6 L2046.0,945.6 L2044.7,945.5 L2044.0,945.5 L2043.0,945.5 L2042.0,945.4 L2040.0,945.3 L2038.5,945.3 L2038.0,945.3 L2036.0,945.2 L2034.0,945.2 L2032.3,945.0 L2032.0,945.1 L2030.0,945.0 L2028.0,945.0 L2026.0,944.9 L2025.0,944.9 L2024.0,944.8 L2022.0,944.9 L2020.0,945.0 L2018.0,945.1 L2017.6,945.1 L2016.0,945.2 L2014.2,945.4 L2014.0,945.4 L2012.0,945.5 L2010.0,945.6 L2008.0,945.8 L2006.0,945.9 L2005.0,945.9 L2004.0,945.9 L2003.3,945.9 L2002.5,946.0 L2002.3,946.0 L2002.0,946.0 L2000.0,946.1 L1998.0,946.3 L1996.0,946.4 L1994.0,946.5 L1992.0,946.6 L1990.0,946.6 L1988.0,946.8 L1986.0,946.9 L1984.0,947.0 L1982.0,947.1 L1980.0,947.2 L1978.5,947.3 L1978.0,947.4 L1976.0,947.5 L1974.0,947.6 L1972.0,947.8 L1970.0,947.8 L1968.0,948.0 L1966.8,948.0 L1966.0,948.1 L1965.5,948.1 L1965.0,948.1 L1964.0,948.2 L1962.0,948.3 L1961.8,948.3 L1961.5,948.3 L1960.0,948.4 L1958.0,948.4 L1956.0,948.5 L1955.6,948.5 L1954.0,948.5 L1953.1,948.5 L1953.0,948.5 L1952.0,948.5 L1950.0,948.6 L1948.0,948.7 L1946.0,948.7 L1944.0,948.8 L1943.2,948.8 L1942.0,948.8 L1941.0,948.9 L1940.0,948.9 L1938.0,949.0 L1936.0,949.0 L1934.0,949.0 L1932.0,949.1 L1930.8,949.1 L1930.7,949.2 L1930.0,949.2 L1929.5,949.2 L1928.0,949.2 L1926.0,949.3 L1924.0,949.3 L1922.0,949.4 L1920.0,949.5 L1919.6,949.5 L1918.0,949.5 L1917.2,949.5 L1916.0,949.6 L1914.6,949.6 L1914.0,949.6 L1912.0,949.7 L1910.0,949.7 L1908.0,949.8 L1906.0,949.8 L1904.0,949.9 L1903.6,949.9 L1902.0,949.9 L1900.0,950.0 L1898.0,950.0 L1896.0,950.0 L1894.7,950.0 L1894.0,950.0 L1893.5,950.0 L1892.0,950.0 L1891.5,950.0 L1891.0,950.0 L1890.0,950.0 L1888.0,950.0 L1887.0,950.0 L1886.0,950.0 L1884.0,950.0 L1882.0,950.0 L1880.0,950.0 L1878.0,950.0 L1876.2,950.0 L1876.0,950.0 L1874.0,950.0 L1872.4,950.0 L1872.0,950.0 L1871.8,950.0 L1871.7,950.0 L1870.0,950.0 L1869.9,950.0 L1868.5,950.0 L1868.0,950.0 L1866.0,950.0 L1864.0,950.0 L1863.0,950.0 L1862.0,950.0 L1861.8,950.0 L1861.2,950.0 L1860.9,950.0 L1860.6,950.0 L1860.0,950.0 L1858.7,950.0 L1858.5,950.0 L1858.0,950.0 L1856.5,950.0 L1856.0,950.0 L1854.0,950.0 L1852.0,950.0 L1850.0,950.0 L1848.0,950.0 L1846.0,950.0 L1844.0,950.0 L1842.0,950.0 L1840.0,950.0 L1839.0,950.0 L1838.0,950.0 L1836.0,950.0 L1834.0,950.0 L1832.0,950.0 L1830.0,950.0 L1828.0,950.0 L1826.0,950.0 L1824.0,950.0 L1822.0,950.0 L1820.0,950.0 L1819.3,950.0 L1818.0,950.0 L1816.0,950.0 L1814.0,950.0 L1812.0,950.0 L1810.0,950.0 L1808.0,950.0 L1806.0,950.0 L1804.0,950.0 L1802.0,950.0 L1800.0,950.0 L1798.0,950.0 L1796.0,950.0 L1794.0,950.0 L1792.0,950.0 L1790.0,950.0 L1788.0,950.0 L1786.0,950.0 L1784.0,950.0 L1782.0,950.0 L1780.0,950.0 L1778.0,950.0 L1776.0,950.0 L1774.0,950.0 L1772.0,950.0 L1770.0,950.0 L1768.0,950.0 L1766.0,950.0 L1764.0,950.0 L1762.0,950.0 L1760.0,950.0 L1758.0,950.0 L1756.0,950.0 L1754.0,950.0 L1752.0,950.0 L1750.0,950.0 L1748.0,950.0 L1746.0,950.0 L1744.0,950.0 L1742.0,950.0 L1740.0,950.0 L1738.4,950.0 L1738.0,950.0 L1736.0,950.0 L1734.0,950.0 L1732.0,950.0 L1730.0,950.0 L1728.0,950.0 L1726.0,950.0 L1724.0,950.0 L1722.0,950.0 L1720.0,950.0 L1718.0,950.0 L1716.0,950.0 L1714.0,950.0 L1712.0,950.0 L1710.0,950.0 L1708.0,950.0 L1706.0,950.0 L1704.0,950.0 L1702.0,950.0 L1700.0,950.0 L1698.0,950.0 L1696.0,950.0 L1694.7,950.0 L1694.0,950.0 L1692.0,950.0 L1690.0,950.0 L1688.0,950.0 L1686.0,950.0 L1684.0,950.0 L1682.0,950.0 L1680.0,950.0 L1678.0,950.0 L1676.0,950.0 L1674.0,950.0 L1672.0,950.0 L1670.0,950.0 L1668.4,950.0 L1668.0,950.0 L1666.0,950.0 L1664.0,950.0 L1662.0,950.0 L1661.9,950.0 L1660.0,950.0 L1658.0,950.0 L1656.0,950.0 L1654.0,950.0 L1652.0,950.0 L1650.0,950.0 L1648.0,950.0 L1646.0,950.0 L1644.0,950.0 L1642.0,950.0 L1640.0,950.0 L1638.0,950.0 L1636.0,950.0 L1634.0,950.0 L1632.0,950.0 L1630.0,950.0 L1628.0,950.0 L1626.0,950.0 L1624.0,950.0 L1622.0,950.0 L1620.0,950.0 L1618.0,950.0 L1616.0,950.0 L1614.0,950.0 L1612.0,950.0 L1610.0,950.0 L1608.0,950.0 L1606.0,950.0 L1604.0,950.0 L1602.0,950.0 L1600.0,950.0 L1598.0,950.0 L1596.6,950.0 L1596.0,950.0 L1595.0,950.0 L1594.0,950.0 L1592.0,950.0 L1590.0,950.0 L1588.0,950.0 L1586.0,950.0 L1584.0,950.0 L1582.0,950.0 L1580.0,950.0 L1578.0,950.0 L1576.0,950.0 L1574.0,950.0 L1572.0,950.0 L1570.0,950.0 L1568.0,950.0 L1566.0,950.0 L1564.0,950.0 L1562.0,950.0 L1560.0,950.0 L1558.7,950.0 L1558.0,950.0 L1556.0,950.0 L1554.0,950.0 L1552.0,950.0 L1550.0,950.0 L1548.0,950.0 L1546.0,950.0 L1544.0,950.0 L1542.0,950.0 L1541.0,950.0 L1540.0,950.0 L1538.0,950.0 L1536.0,950.0 L1534.0,950.0 L1532.0,950.0 L1530.0,950.0 L1529.5,950.0 L1528.0,950.0 L1526.0,950.0 L1524.0,950.0 L1522.0,950.0 L1520.0,950.0 L1518.0,950.0 L1516.0,950.0 L1514.0,950.0 L1512.0,950.0 L1510.0,950.0 L1508.0,950.0 L1506.0,950.0 L1504.0,950.0 L1502.0,950.0 L1500.0,950.0 L1498.0,950.0 L1496.0,950.0 L1494.0,950.0 L1492.0,950.0 L1490.0,950.0 L1488.0,950.0 L1486.0,950.0 L1484.0,950.0 L1482.0,950.0 L1480.0,950.0 L1478.0,950.0 L1476.0,950.0 L1474.0,950.0 L1472.0,950.0 L1471.2,950.0 L1470.0,950.0 L1468.0,950.0 L1466.0,950.0 L1464.0,950.0 L1462.0,950.0 L1460.0,950.0 L1458.0,950.0 L1456.0,950.0 L1454.0,950.0 L1452.0,950.0 L1450.0,950.0 L1448.0,950.0 L1446.0,950.0 L1444.0,950.0 L1442.0,950.0 L1440.0,950.0 L1438.0,950.0 L1436.0,950.0 L1434.0,950.0 L1432.0,950.0 L1430.4,950.0 L1430.0,950.0 L1428.0,950.0 L1426.0,950.0 L1424.0,950.0 L1422.0,950.0 L1420.0,950.0 L1418.0,950.0 L1416.0,950.0 L1414.0,950.0 L1412.0,950.0 L1410.0,950.0 L1408.0,950.0 L1406.0,950.0 L1404.0,950.0 L1402.0,950.0 L1400.0,950.0 L1398.3,950.0 L1398.0,950.0 L1396.0,950.0 L1394.0,950.0 L1392.0,950.0 L1390.0,950.0 L1388.0,950.0 L1386.0,950.0 L1384.0,950.0 L1382.0,950.0 L1380.0,950.0 L1378.0,950.0 L1376.0,950.0 L1375.0,950.0 L1374.0,950.0 L1372.0,950.0 L1370.0,950.0 L1368.0,950.0 L1366.0,950.0 L1364.0,950.0 L1362.0,950.0 L1360.0,950.0 L1358.0,950.0 L1356.0,950.0 L1354.0,950.0 L1352.0,950.0 L1350.0,950.0 L1348.0,950.0 L1346.0,950.0 L1344.0,950.0 L1342.0,950.0 L1340.0,950.0 L1338.0,950.0 L1336.0,950.0 L1334.5,950.0 L1334.0,950.0 L1333.0,950.0 L1332.0,950.0 L1330.0,950.0 L1328.0,950.0 L1326.0,950.0 L1324.0,950.0 L1322.0,950.0 L1320.0,950.0 L1318.0,950.0 L1316.0,950.0 L1314.0,950.0 L1312.5,950.0 L1312.0,950.0 L1310.0,950.0 L1308.0,950.0 L1306.0,950.0 L1304.0,950.0 L1302.0,950.0 L1300.0,950.0 L1270.5,950.0 L1207.6,950.0 L1207.0,950.0 L1125.0,950.0 L1107.5,950.0 L1076.5,950.0 L1076.0,950.0 L1036.4,950.0 L1036.0,950.0 L1001.5,950.0 L1001.4,950.0 L943.3,950.0 L943.0,950.0 L875.7,950.0 L875.5,950.0 L208.5,950.0 L190.8,950.0 Z" fill="url(#g_pub)"/>
<path d="M190.8,950.0 L208.5,950.0 L875.5,950.0 L875.7,950.0 L943.0,950.0 L943.3,950.0 L1001.4,950.0 L1001.5,950.0 L1036.0,950.0 L1036.4,950.0 L1076.0,950.0 L1076.5,950.0 L1107.5,950.0 L1125.0,950.0 L1207.0,950.0 L1207.6,950.0 L1270.5,950.0 L1300.0,950.0 L1302.0,950.0 L1304.0,950.0 L1306.0,950.0 L1308.0,950.0 L1310.0,950.0 L1312.0,950.0 L1312.5,950.0 L1314.0,950.0 L1316.0,950.0 L1318.0,950.0 L1320.0,950.0 L1322.0,950.0 L1324.0,950.0 L1326.0,950.0 L1328.0,950.0 L1330.0,950.0 L1332.0,950.0 L1333.0,950.0 L1334.0,949.0 L1334.5,948.5 L1336.0,948.5 L1338.0,948.5 L1340.0,948.5 L1342.0,948.5 L1344.0,948.5 L1346.0,948.5 L1348.0,948.5 L1350.0,948.5 L1352.0,948.5 L1354.0,948.5 L1356.0,948.5 L1358.0,948.5 L1360.0,948.5 L1362.0,948.5 L1364.0,948.5 L1366.0,948.5 L1368.0,948.5 L1370.0,948.5 L1372.0,948.5 L1374.0,948.5 L1375.0,948.5 L1376.0,948.5 L1378.0,948.5 L1380.0,948.5 L1382.0,948.5 L1384.0,948.5 L1386.0,948.5 L1388.0,948.5 L1390.0,948.5 L1392.0,948.5 L1394.0,948.5 L1396.0,948.4 L1398.0,948.5 L1398.3,948.4 L1400.0,948.4 L1402.0,948.5 L1404.0,948.5 L1406.0,948.4 L1408.0,948.5 L1410.0,948.5 L1412.0,948.5 L1414.0,948.5 L1416.0,948.5 L1418.0,948.5 L1420.0,948.5 L1422.0,948.5 L1424.0,948.5 L1426.0,948.5 L1428.0,948.5 L1430.0,948.5 L1430.4,948.5 L1432.0,948.5 L1434.0,948.4 L1436.0,948.5 L1438.0,948.5 L1440.0,948.5 L1442.0,948.4 L1444.0,948.4 L1446.0,948.5 L1448.0,948.5 L1450.0,948.5 L1452.0,948.4 L1454.0,948.4 L1456.0,948.4 L1458.0,948.5 L1460.0,948.4 L1462.0,948.5 L1464.0,948.4 L1466.0,948.5 L1468.0,948.5 L1470.0,948.5 L1471.2,948.4 L1472.0,948.4 L1474.0,948.4 L1476.0,948.4 L1478.0,948.4 L1480.0,948.4 L1482.0,948.4 L1484.0,948.4 L1486.0,948.5 L1488.0,948.4 L1490.0,948.4 L1492.0,948.4 L1494.0,948.5 L1496.0,948.5 L1498.0,948.4 L1500.0,948.5 L1502.0,948.4 L1504.0,948.5 L1506.0,948.4 L1508.0,948.4 L1510.0,948.4 L1512.0,948.4 L1514.0,948.4 L1516.0,948.4 L1518.0,948.4 L1520.0,948.4 L1522.0,948.4 L1524.0,948.4 L1526.0,948.4 L1528.0,948.4 L1529.5,948.4 L1530.0,948.5 L1532.0,948.5 L1534.0,948.4 L1536.0,948.4 L1538.0,948.4 L1540.0,948.4 L1541.0,948.4 L1542.0,948.4 L1544.0,948.4 L1546.0,948.4 L1548.0,948.4 L1550.0,948.4 L1552.0,948.4 L1554.0,948.4 L1556.0,948.4 L1558.0,948.4 L1558.7,948.4 L1560.0,948.4 L1562.0,948.4 L1564.0,948.4 L1566.0,948.4 L1568.0,948.4 L1570.0,948.4 L1572.0,948.4 L1574.0,948.4 L1576.0,948.4 L1578.0,948.4 L1580.0,948.5 L1582.0,948.4 L1584.0,948.4 L1586.0,948.4 L1588.0,948.4 L1590.0,948.4 L1592.0,948.3 L1594.0,948.4 L1595.0,948.4 L1596.0,948.4 L1596.6,948.4 L1598.0,948.4 L1600.0,948.4 L1602.0,948.4 L1604.0,948.4 L1606.0,948.4 L1608.0,948.4 L1610.0,948.4 L1612.0,948.4 L1614.0,948.4 L1616.0,948.4 L1618.0,948.4 L1620.0,948.4 L1622.0,948.4 L1624.0,948.4 L1626.0,948.3 L1628.0,948.4 L1630.0,948.4 L1632.0,948.4 L1634.0,948.4 L1636.0,948.4 L1638.0,948.4 L1640.0,948.4 L1642.0,948.4 L1644.0,948.4 L1646.0,948.4 L1648.0,948.4 L1650.0,948.4 L1652.0,948.4 L1654.0,948.4 L1656.0,948.4 L1658.0,948.4 L1660.0,948.4 L1661.9,948.4 L1662.0,948.4 L1664.0,948.4 L1666.0,948.4 L1668.0,948.4 L1668.4,948.4 L1670.0,948.4 L1672.0,948.4 L1674.0,948.4 L1676.0,948.4 L1678.0,948.4 L1680.0,948.4 L1682.0,948.4 L1684.0,948.4 L1686.0,948.3 L1688.0,948.4 L1690.0,948.4 L1692.0,948.4 L1694.0,948.3 L1694.7,948.3 L1696.0,948.3 L1698.0,948.4 L1700.0,948.4 L1702.0,948.3 L1704.0,948.3 L1706.0,948.3 L1708.0,948.4 L1710.0,948.3 L1712.0,948.4 L1714.0,948.4 L1716.0,948.4 L1718.0,948.3 L1720.0,948.3 L1722.0,948.3 L1724.0,948.3 L1726.0,948.3 L1728.0,948.3 L1730.0,948.3 L1732.0,948.4 L1734.0,948.4 L1736.0,948.3 L1738.0,948.4 L1738.4,948.4 L1740.0,948.4 L1742.0,948.4 L1744.0,948.3 L1746.0,948.3 L1748.0,948.4 L1750.0,948.4 L1752.0,948.3 L1754.0,948.4 L1756.0,948.3 L1758.0,948.4 L1760.0,948.3 L1762.0,948.3 L1764.0,948.3 L1766.0,948.3 L1768.0,948.3 L1770.0,948.3 L1772.0,948.3 L1774.0,948.3 L1776.0,948.3 L1778.0,948.3 L1780.0,948.3 L1782.0,948.3 L1784.0,948.3 L1786.0,948.3 L1788.0,948.3 L1790.0,948.3 L1792.0,948.3 L1794.0,948.3 L1796.0,948.3 L1798.0,948.4 L1800.0,948.4 L1802.0,948.4 L1804.0,948.3 L1806.0,948.3 L1808.0,948.3 L1810.0,948.3 L1812.0,948.3 L1814.0,948.3 L1816.0,948.3 L1818.0,948.3 L1819.3,948.3 L1820.0,948.3 L1822.0,948.3 L1824.0,948.3 L1826.0,948.3 L1828.0,948.3 L1830.0,948.3 L1832.0,948.3 L1834.0,948.3 L1836.0,948.3 L1838.0,948.3 L1839.0,948.3 L1840.0,948.3 L1842.0,948.3 L1844.0,948.3 L1846.0,948.3 L1848.0,948.3 L1850.0,948.3 L1852.0,948.3 L1854.0,948.3 L1856.0,948.3 L1856.5,948.3 L1858.0,948.3 L1858.5,946.8 L1858.7,946.1 L1860.0,942.0 L1860.6,939.6 L1860.9,939.3 L1861.2,939.4 L1861.8,939.2 L1862.0,939.2 L1863.0,938.9 L1864.0,938.7 L1866.0,938.3 L1868.0,938.0 L1868.5,937.7 L1869.9,937.2 L1870.0,937.3 L1871.7,936.9 L1871.8,936.9 L1872.0,936.8 L1872.4,936.8 L1874.0,936.3 L1876.0,935.6 L1876.2,935.5 L1878.0,935.1 L1880.0,934.7 L1882.0,934.1 L1884.0,933.5 L1886.0,933.1 L1887.0,933.1 L1888.0,932.8 L1890.0,932.2 L1891.0,932.1 L1891.5,931.7 L1892.0,932.3 L1893.5,932.5 L1894.0,932.4 L1894.7,932.2 L1896.0,932.6 L1898.0,932.8 L1900.0,932.8 L1902.0,932.8 L1903.6,933.2 L1904.0,933.3 L1906.0,933.7 L1908.0,933.8 L1910.0,934.1 L1912.0,934.3 L1914.0,934.6 L1914.6,934.6 L1916.0,934.9 L1917.2,934.7 L1918.0,934.8 L1919.6,934.9 L1920.0,935.0 L1922.0,935.1 L1924.0,935.4 L1926.0,935.5 L1928.0,935.8 L1929.5,935.9 L1930.0,936.1 L1930.7,936.3 L1930.8,936.4 L1932.0,936.3 L1934.0,936.4 L1936.0,936.7 L1938.0,937.1 L1940.0,937.2 L1941.0,937.2 L1942.0,937.3 L1943.2,937.5 L1944.0,937.7 L1946.0,937.9 L1948.0,938.0 L1950.0,938.3 L1952.0,938.4 L1953.0,938.4 L1953.1,938.3 L1954.0,938.3 L1955.6,937.8 L1956.0,937.9 L1958.0,937.3 L1960.0,937.0 L1961.5,936.6 L1961.8,936.4 L1962.0,936.4 L1964.0,936.0 L1965.0,935.7 L1965.5,935.6 L1966.0,935.4 L1966.8,935.2 L1968.0,934.7 L1970.0,934.1 L1972.0,933.7 L1974.0,933.3 L1976.0,933.1 L1978.0,932.7 L1978.5,932.3 L1980.0,931.9 L1982.0,932.1 L1984.0,932.1 L1986.0,932.2 L1988.0,932.2 L1990.0,932.1 L1992.0,932.2 L1994.0,932.2 L1996.0,932.3 L1998.0,932.4 L2000.0,932.4 L2002.0,932.6 L2002.3,932.4 L2002.5,932.7 L2003.3,932.6 L2004.0,932.6 L2005.0,932.5 L2006.0,932.5 L2008.0,932.2 L2010.0,931.7 L2012.0,931.6 L2014.0,931.5 L2014.2,931.5 L2016.0,931.1 L2017.6,931.1 L2018.0,931.0 L2020.0,930.9 L2022.0,930.6 L2024.0,930.6 L2025.0,930.3 L2026.0,930.4 L2028.0,930.0 L2030.0,929.8 L2032.0,929.3 L2032.3,929.2 L2034.0,929.2 L2036.0,928.8 L2038.0,928.9 L2038.5,928.8 L2040.0,928.7 L2042.0,927.8 L2043.0,927.3 L2044.0,926.9 L2044.7,926.7 L2046.0,926.1 L2048.0,925.0 L2050.0,923.7 L2052.0,922.7 L2054.0,921.9 L2056.0,921.1 L2056.5,920.9 L2057.0,920.4 L2058.0,920.2 L2060.0,919.1 L2062.0,918.1 L2064.0,917.5 L2065.5,916.9 L2066.0,916.5 L2066.6,916.1 L2067.0,913.8 L2067.4,911.4 L2068.0,908.9 L2068.5,906.4 L2068.8,904.7 L2070.0,904.8 L2072.0,905.2 L2074.0,905.2 L2074.4,905.4 L2076.0,905.5 L2076.7,905.4 L2077.0,905.7 L2078.0,905.6 L2080.0,906.0 L2082.0,906.1 L2084.0,905.8 L2085.7,906.1 L2086.0,905.9 L2087.5,905.7 L2088.0,905.5 L2090.0,905.6 L2090.2,906.0 L2090.7,906.0 L2092.0,906.6 L2092.4,906.3 L2094.0,906.2 L2096.0,906.7 L2098.0,906.8 L2100.0,906.8 L2102.0,907.0 L2104.0,907.3 L2104.4,906.9 L2105.9,907.4 L2106.0,907.4 L2108.0,906.7 L2108.2,906.5 L2110.0,906.0 L2112.0,905.5 L2112.7,905.5 L2114.0,905.3 L2116.0,905.0 L2116.6,905.1 L2118.0,905.1 L2120.0,904.5 L2122.0,904.3 L2124.0,904.1 L2126.0,903.4 L2126.2,903.9 L2126.8,903.9 L2128.0,903.6 L2128.2,903.6 L2130.0,903.0 L2132.0,902.8 L2132.9,902.6 L2134.0,902.2 L2136.0,902.4 L2137.0,902.5 L2137.4,902.2 L2138.0,901.7 L2140.0,901.2 L2142.0,901.0 L2144.0,900.8 L2145.8,900.4 L2146.0,900.3 L2148.0,900.0 L2148.6,900.2 L2150.0,899.9 L2151.6,899.6 L2152.0,899.5 L2154.0,899.2 L2156.0,898.7 L2156.9,898.2 L2157.1,899.0 L2158.0,898.8 L2159.5,898.7 L2159.5,924.3 L2158.0,924.2 L2157.1,924.4 L2156.9,924.0 L2156.0,924.3 L2154.0,924.5 L2152.0,924.8 L2151.6,924.5 L2150.0,924.8 L2148.6,924.9 L2148.0,924.8 L2146.0,924.7 L2145.8,924.9 L2144.0,924.9 L2142.0,925.1 L2140.0,924.7 L2138.0,925.1 L2137.4,925.2 L2137.0,925.5 L2136.0,925.7 L2134.0,925.7 L2132.9,926.0 L2132.0,926.2 L2130.0,926.5 L2128.2,926.6 L2128.0,926.6 L2126.8,926.5 L2126.2,926.7 L2126.0,926.7 L2124.0,926.7 L2122.0,927.3 L2120.0,927.4 L2118.0,927.8 L2116.6,927.8 L2116.0,928.2 L2114.0,928.7 L2112.7,928.6 L2112.0,928.7 L2110.0,929.0 L2108.2,929.2 L2108.0,929.5 L2106.0,929.9 L2105.9,929.7 L2104.4,929.4 L2104.0,929.4 L2102.0,928.9 L2100.0,928.5 L2098.0,928.0 L2096.0,927.5 L2094.0,927.0 L2092.4,926.6 L2092.0,926.6 L2090.7,926.3 L2090.2,926.1 L2090.0,926.1 L2088.0,925.4 L2087.5,925.3 L2086.0,925.0 L2085.7,925.1 L2084.0,924.6 L2082.0,924.2 L2080.0,923.8 L2078.0,923.3 L2077.0,923.0 L2076.7,922.9 L2076.0,922.8 L2074.4,922.7 L2074.0,922.6 L2072.0,922.3 L2070.0,921.8 L2068.8,921.8 L2068.5,923.0 L2068.0,925.1 L2067.4,927.7 L2067.0,929.7 L2066.6,931.9 L2066.0,932.1 L2065.5,932.1 L2064.0,932.2 L2062.0,932.4 L2060.0,932.7 L2058.0,933.1 L2057.0,933.0 L2056.5,933.2 L2056.0,933.2 L2054.0,933.7 L2052.0,933.7 L2050.0,934.0 L2048.0,934.6 L2046.0,935.0 L2044.7,935.2 L2044.0,935.2 L2043.0,935.3 L2042.0,935.4 L2040.0,935.6 L2038.5,935.8 L2038.0,935.8 L2036.0,935.9 L2034.0,936.3 L2032.3,936.4 L2032.0,936.4 L2030.0,936.8 L2028.0,937.1 L2026.0,937.4 L2025.0,937.4 L2024.0,937.5 L2022.0,937.7 L2020.0,937.9 L2018.0,938.0 L2017.6,938.1 L2016.0,938.2 L2014.2,938.4 L2014.0,938.4 L2012.0,938.5 L2010.0,938.5 L2008.0,938.9 L2006.0,939.0 L2005.0,939.0 L2004.0,939.2 L2003.3,939.2 L2002.5,939.2 L2002.3,939.1 L2002.0,939.3 L2000.0,939.4 L1998.0,939.6 L1996.0,939.7 L1994.0,939.7 L1992.0,939.9 L1990.0,940.1 L1988.0,940.3 L1986.0,940.4 L1984.0,940.5 L1982.0,940.6 L1980.0,940.8 L1978.5,940.6 L1978.0,940.7 L1976.0,940.4 L1974.0,940.0 L1972.0,939.6 L1970.0,939.2 L1968.0,939.0 L1966.8,939.0 L1966.0,939.1 L1965.5,939.2 L1965.0,939.3 L1964.0,939.5 L1962.0,939.8 L1961.8,939.8 L1961.5,940.0 L1960.0,940.4 L1958.0,940.5 L1956.0,940.9 L1955.6,940.8 L1954.0,941.2 L1953.1,941.3 L1953.0,941.3 L1952.0,941.3 L1950.0,941.0 L1948.0,940.6 L1946.0,940.5 L1944.0,940.2 L1943.2,940.0 L1942.0,939.8 L1941.0,939.7 L1940.0,939.7 L1938.0,939.4 L1936.0,939.1 L1934.0,938.7 L1932.0,938.5 L1930.8,938.5 L1930.7,938.4 L1930.0,938.5 L1929.5,938.5 L1928.0,939.1 L1926.0,939.7 L1924.0,940.4 L1922.0,941.0 L1920.0,941.7 L1919.6,941.9 L1918.0,941.6 L1917.2,941.6 L1916.0,941.5 L1914.6,941.2 L1914.0,941.3 L1912.0,940.9 L1910.0,940.4 L1908.0,939.9 L1906.0,939.7 L1904.0,939.2 L1903.6,939.1 L1902.0,938.7 L1900.0,938.4 L1898.0,938.3 L1896.0,938.0 L1894.7,937.5 L1894.0,936.9 L1893.5,936.4 L1892.0,934.6 L1891.5,933.6 L1891.0,933.4 L1890.0,933.8 L1888.0,934.9 L1887.0,935.6 L1886.0,935.9 L1884.0,936.8 L1882.0,937.9 L1880.0,939.2 L1878.0,940.2 L1876.2,941.1 L1876.0,941.3 L1874.0,942.4 L1872.4,943.3 L1872.0,943.2 L1871.8,943.1 L1871.7,943.1 L1870.0,942.6 L1869.9,942.6 L1868.5,942.3 L1868.0,942.3 L1866.0,941.7 L1864.0,941.1 L1863.0,940.7 L1862.0,940.5 L1861.8,940.4 L1861.2,940.3 L1860.9,940.1 L1860.6,940.2 L1860.0,942.1 L1858.7,946.1 L1858.5,946.8 L1858.0,948.3 L1856.5,948.3 L1856.0,948.3 L1854.0,948.3 L1852.0,948.3 L1850.0,948.3 L1848.0,948.3 L1846.0,948.3 L1844.0,948.3 L1842.0,948.3 L1840.0,948.3 L1839.0,948.3 L1838.0,948.3 L1836.0,948.3 L1834.0,948.3 L1832.0,948.3 L1830.0,948.3 L1828.0,948.3 L1826.0,948.3 L1824.0,948.3 L1822.0,948.3 L1820.0,948.3 L1819.3,948.3 L1818.0,948.3 L1816.0,948.3 L1814.0,948.3 L1812.0,948.3 L1810.0,948.3 L1808.0,948.3 L1806.0,948.3 L1804.0,948.3 L1802.0,948.4 L1800.0,948.4 L1798.0,948.4 L1796.0,948.3 L1794.0,948.3 L1792.0,948.3 L1790.0,948.3 L1788.0,948.3 L1786.0,948.3 L1784.0,948.3 L1782.0,948.3 L1780.0,948.3 L1778.0,948.3 L1776.0,948.3 L1774.0,948.3 L1772.0,948.3 L1770.0,948.3 L1768.0,948.3 L1766.0,948.3 L1764.0,948.3 L1762.0,948.3 L1760.0,948.3 L1758.0,948.4 L1756.0,948.3 L1754.0,948.4 L1752.0,948.3 L1750.0,948.4 L1748.0,948.4 L1746.0,948.3 L1744.0,948.3 L1742.0,948.4 L1740.0,948.4 L1738.4,948.4 L1738.0,948.4 L1736.0,948.3 L1734.0,948.4 L1732.0,948.4 L1730.0,948.3 L1728.0,948.3 L1726.0,948.3 L1724.0,948.3 L1722.0,948.3 L1720.0,948.3 L1718.0,948.3 L1716.0,948.4 L1714.0,948.4 L1712.0,948.4 L1710.0,948.3 L1708.0,948.4 L1706.0,948.3 L1704.0,948.3 L1702.0,948.3 L1700.0,948.4 L1698.0,948.4 L1696.0,948.3 L1694.7,948.3 L1694.0,948.3 L1692.0,948.4 L1690.0,948.4 L1688.0,948.4 L1686.0,948.3 L1684.0,948.4 L1682.0,948.4 L1680.0,948.4 L1678.0,948.4 L1676.0,948.4 L1674.0,948.4 L1672.0,948.4 L1670.0,948.4 L1668.4,948.4 L1668.0,948.4 L1666.0,948.4 L1664.0,948.4 L1662.0,948.4 L1661.9,948.4 L1660.0,948.4 L1658.0,948.4 L1656.0,948.4 L1654.0,948.4 L1652.0,948.4 L1650.0,948.4 L1648.0,948.4 L1646.0,948.4 L1644.0,948.4 L1642.0,948.4 L1640.0,948.4 L1638.0,948.4 L1636.0,948.4 L1634.0,948.4 L1632.0,948.4 L1630.0,948.4 L1628.0,948.4 L1626.0,948.3 L1624.0,948.4 L1622.0,948.4 L1620.0,948.4 L1618.0,948.4 L1616.0,948.4 L1614.0,948.4 L1612.0,948.4 L1610.0,948.4 L1608.0,948.4 L1606.0,948.4 L1604.0,948.4 L1602.0,948.4 L1600.0,948.4 L1598.0,948.4 L1596.6,948.4 L1596.0,948.4 L1595.0,948.4 L1594.0,948.4 L1592.0,948.3 L1590.0,948.4 L1588.0,948.4 L1586.0,948.4 L1584.0,948.4 L1582.0,948.4 L1580.0,948.5 L1578.0,948.4 L1576.0,948.4 L1574.0,948.4 L1572.0,948.4 L1570.0,948.4 L1568.0,948.4 L1566.0,948.4 L1564.0,948.4 L1562.0,948.4 L1560.0,948.4 L1558.7,948.4 L1558.0,948.4 L1556.0,948.4 L1554.0,948.4 L1552.0,948.4 L1550.0,948.4 L1548.0,948.4 L1546.0,948.4 L1544.0,948.4 L1542.0,948.4 L1541.0,948.4 L1540.0,948.4 L1538.0,948.4 L1536.0,948.4 L1534.0,948.4 L1532.0,948.5 L1530.0,948.5 L1529.5,948.4 L1528.0,948.4 L1526.0,948.4 L1524.0,948.4 L1522.0,948.4 L1520.0,948.4 L1518.0,948.4 L1516.0,948.4 L1514.0,948.4 L1512.0,948.4 L1510.0,948.4 L1508.0,948.4 L1506.0,948.4 L1504.0,948.5 L1502.0,948.4 L1500.0,948.5 L1498.0,948.4 L1496.0,948.5 L1494.0,948.5 L1492.0,948.4 L1490.0,948.4 L1488.0,948.4 L1486.0,948.5 L1484.0,948.4 L1482.0,948.4 L1480.0,948.4 L1478.0,948.4 L1476.0,948.4 L1474.0,948.4 L1472.0,948.4 L1471.2,948.4 L1470.0,948.5 L1468.0,948.5 L1466.0,948.5 L1464.0,948.4 L1462.0,948.5 L1460.0,948.4 L1458.0,948.5 L1456.0,948.4 L1454.0,948.4 L1452.0,948.4 L1450.0,948.5 L1448.0,948.5 L1446.0,948.5 L1444.0,948.4 L1442.0,948.4 L1440.0,948.5 L1438.0,948.5 L1436.0,948.5 L1434.0,948.4 L1432.0,948.5 L1430.4,948.5 L1430.0,948.5 L1428.0,948.5 L1426.0,948.5 L1424.0,948.5 L1422.0,948.5 L1420.0,948.5 L1418.0,948.5 L1416.0,948.5 L1414.0,948.5 L1412.0,948.5 L1410.0,948.5 L1408.0,948.5 L1406.0,948.4 L1404.0,948.5 L1402.0,948.5 L1400.0,948.4 L1398.3,948.4 L1398.0,948.5 L1396.0,948.4 L1394.0,948.5 L1392.0,948.5 L1390.0,948.5 L1388.0,948.5 L1386.0,948.5 L1384.0,948.5 L1382.0,948.5 L1380.0,948.5 L1378.0,948.5 L1376.0,948.5 L1375.0,948.5 L1374.0,948.5 L1372.0,948.5 L1370.0,948.5 L1368.0,948.5 L1366.0,948.5 L1364.0,948.5 L1362.0,948.5 L1360.0,948.5 L1358.0,948.5 L1356.0,948.5 L1354.0,948.5 L1352.0,948.5 L1350.0,948.5 L1348.0,948.5 L1346.0,948.5 L1344.0,948.5 L1342.0,948.5 L1340.0,948.5 L1338.0,948.5 L1336.0,948.5 L1334.5,948.5 L1334.0,949.0 L1333.0,950.0 L1332.0,950.0 L1330.0,950.0 L1328.0,950.0 L1326.0,950.0 L1324.0,950.0 L1322.0,950.0 L1320.0,950.0 L1318.0,950.0 L1316.0,950.0 L1314.0,950.0 L1312.5,950.0 L1312.0,950.0 L1310.0,950.0 L1308.0,950.0 L1306.0,950.0 L1304.0,950.0 L1302.0,950.0 L1300.0,950.0 L1270.5,950.0 L1207.6,950.0 L1207.0,950.0 L1125.0,950.0 L1107.5,950.0 L1076.5,950.0 L1076.0,950.0 L1036.4,950.0 L1036.0,950.0 L1001.5,950.0 L1001.4,950.0 L943.3,950.0 L943.0,950.0 L875.7,950.0 L875.5,950.0 L208.5,950.0 L190.8,950.0 Z" fill="url(#g_nus)"/>
<path d="M190.8,950.0 L208.5,950.0 L875.5,950.0 L875.7,950.0 L943.0,950.0 L943.3,950.0 L1001.4,950.0 L1001.5,950.0 L1036.0,950.0 L1036.4,950.0 L1076.0,950.0 L1076.5,950.0 L1107.5,950.0 L1125.0,950.0 L1207.0,950.0 L1207.6,950.0 L1270.5,950.0 L1300.0,950.0 L1302.0,950.0 L1304.0,950.0 L1306.0,950.0 L1308.0,950.0 L1310.0,950.0 L1312.0,950.0 L1312.5,950.0 L1314.0,950.0 L1316.0,950.0 L1318.0,950.0 L1320.0,950.0 L1322.0,950.0 L1324.0,950.0 L1326.0,950.0 L1328.0,950.0 L1330.0,950.0 L1332.0,950.0 L1333.0,950.0 L1334.0,949.0 L1334.5,948.5 L1336.0,948.5 L1338.0,948.5 L1340.0,948.5 L1342.0,948.5 L1344.0,948.5 L1346.0,948.5 L1348.0,948.5 L1350.0,948.5 L1352.0,948.5 L1354.0,948.5 L1356.0,948.5 L1358.0,948.5 L1360.0,948.5 L1362.0,948.5 L1364.0,948.5 L1366.0,948.5 L1368.0,948.5 L1370.0,948.5 L1372.0,948.5 L1374.0,948.5 L1375.0,948.5 L1376.0,948.5 L1378.0,948.5 L1380.0,948.5 L1382.0,948.5 L1384.0,948.5 L1386.0,948.5 L1388.0,948.5 L1390.0,948.5 L1392.0,948.5 L1394.0,948.5 L1396.0,948.4 L1398.0,948.5 L1398.3,948.4 L1400.0,948.4 L1402.0,948.5 L1404.0,948.5 L1406.0,948.4 L1408.0,948.5 L1410.0,948.5 L1412.0,948.5 L1414.0,948.5 L1416.0,948.5 L1418.0,948.5 L1420.0,948.5 L1422.0,948.5 L1424.0,948.5 L1426.0,948.5 L1428.0,948.5 L1430.0,948.5 L1430.4,948.5 L1432.0,948.5 L1434.0,948.4 L1436.0,948.5 L1438.0,948.5 L1440.0,948.5 L1442.0,948.4 L1444.0,948.4 L1446.0,948.5 L1448.0,948.5 L1450.0,948.5 L1452.0,948.4 L1454.0,948.4 L1456.0,948.4 L1458.0,948.5 L1460.0,948.4 L1462.0,948.5 L1464.0,948.4 L1466.0,948.5 L1468.0,948.5 L1470.0,948.5 L1471.2,948.4 L1472.0,948.4 L1474.0,948.4 L1476.0,948.4 L1478.0,948.4 L1480.0,948.4 L1482.0,948.4 L1484.0,948.4 L1486.0,948.5 L1488.0,948.4 L1490.0,948.4 L1492.0,948.4 L1494.0,948.5 L1496.0,948.5 L1498.0,948.4 L1500.0,948.5 L1502.0,948.4 L1504.0,948.5 L1506.0,948.4 L1508.0,948.4 L1510.0,948.4 L1512.0,948.4 L1514.0,948.4 L1516.0,948.4 L1518.0,948.4 L1520.0,948.4 L1522.0,948.4 L1524.0,948.4 L1526.0,948.4 L1528.0,948.4 L1529.5,948.4 L1530.0,948.5 L1532.0,948.5 L1534.0,948.4 L1536.0,948.4 L1538.0,948.4 L1540.0,948.4 L1541.0,948.4 L1542.0,948.4 L1544.0,948.4 L1546.0,948.4 L1548.0,948.4 L1550.0,948.4 L1552.0,948.4 L1554.0,948.4 L1556.0,948.4 L1558.0,948.4 L1558.7,948.4 L1560.0,948.4 L1562.0,948.4 L1564.0,948.4 L1566.0,948.4 L1568.0,948.4 L1570.0,948.4 L1572.0,948.4 L1574.0,948.4 L1576.0,948.4 L1578.0,948.4 L1580.0,948.5 L1582.0,948.4 L1584.0,948.4 L1586.0,948.4 L1588.0,948.4 L1590.0,948.4 L1592.0,948.3 L1594.0,948.4 L1595.0,948.4 L1596.0,948.4 L1596.6,948.4 L1598.0,948.4 L1600.0,948.4 L1602.0,948.4 L1604.0,948.4 L1606.0,948.4 L1608.0,948.4 L1610.0,948.4 L1612.0,948.4 L1614.0,948.4 L1616.0,948.4 L1618.0,948.4 L1620.0,948.4 L1622.0,948.4 L1624.0,948.4 L1626.0,948.3 L1628.0,948.4 L1630.0,948.4 L1632.0,948.4 L1634.0,948.4 L1636.0,948.4 L1638.0,948.4 L1640.0,948.4 L1642.0,948.4 L1644.0,948.4 L1646.0,948.4 L1648.0,948.4 L1650.0,948.4 L1652.0,948.4 L1654.0,948.4 L1656.0,948.4 L1658.0,948.4 L1660.0,948.4 L1661.9,948.4 L1662.0,948.4 L1664.0,948.4 L1666.0,948.4 L1668.0,948.4 L1668.4,948.4 L1670.0,948.4 L1672.0,948.4 L1674.0,948.4 L1676.0,948.4 L1678.0,948.4 L1680.0,948.4 L1682.0,948.4 L1684.0,948.4 L1686.0,948.3 L1688.0,948.4 L1690.0,948.4 L1692.0,948.4 L1694.0,948.3 L1694.7,948.3 L1696.0,948.3 L1698.0,948.4 L1700.0,948.4 L1702.0,948.3 L1704.0,948.3 L1706.0,948.3 L1708.0,948.4 L1710.0,948.3 L1712.0,948.3 L1714.0,948.3 L1716.0,948.2 L1718.0,948.1 L1720.0,948.1 L1722.0,948.0 L1724.0,947.9 L1726.0,947.9 L1728.0,947.8 L1730.0,947.8 L1732.0,947.8 L1734.0,947.7 L1736.0,947.6 L1738.0,947.6 L1738.4,947.6 L1740.0,947.6 L1742.0,947.5 L1744.0,947.4 L1746.0,947.4 L1748.0,947.4 L1750.0,947.3 L1752.0,947.2 L1754.0,947.2 L1756.0,947.1 L1758.0,947.1 L1760.0,947.0 L1762.0,946.9 L1764.0,946.9 L1766.0,946.8 L1768.0,946.8 L1770.0,946.8 L1772.0,946.7 L1774.0,946.6 L1776.0,946.6 L1778.0,946.5 L1780.0,946.5 L1782.0,946.4 L1784.0,946.4 L1786.0,946.4 L1788.0,946.4 L1790.0,946.2 L1792.0,946.2 L1794.0,946.1 L1796.0,946.0 L1798.0,946.0 L1800.0,946.0 L1802.0,946.0 L1804.0,945.9 L1806.0,945.8 L1808.0,945.7 L1810.0,945.7 L1812.0,945.7 L1814.0,945.6 L1816.0,945.5 L1818.0,945.5 L1819.3,945.4 L1820.0,945.4 L1822.0,945.4 L1824.0,945.4 L1826.0,945.3 L1828.0,945.2 L1830.0,945.2 L1832.0,945.1 L1834.0,945.1 L1836.0,945.0 L1838.0,945.0 L1839.0,944.9 L1840.0,944.9 L1842.0,944.9 L1844.0,944.9 L1846.0,944.8 L1848.0,944.6 L1850.0,944.6 L1852.0,944.6 L1854.0,944.5 L1856.0,944.4 L1856.5,944.4 L1858.0,944.3 L1858.5,944.5 L1858.7,944.5 L1860.0,940.9 L1860.6,939.3 L1860.9,938.3 L1861.2,937.6 L1861.8,937.7 L1862.0,937.8 L1863.0,938.0 L1864.0,938.3 L1866.0,938.3 L1868.0,938.0 L1868.5,937.7 L1869.9,937.2 L1870.0,937.3 L1871.7,936.9 L1871.8,936.9 L1872.0,936.8 L1872.4,936.8 L1874.0,936.3 L1876.0,935.6 L1876.2,935.5 L1878.0,935.1 L1880.0,934.7 L1882.0,934.1 L1884.0,933.3 L1886.0,932.3 L1887.0,932.0 L1888.0,931.3 L1890.0,930.1 L1891.0,929.7 L1891.5,930.0 L1892.0,931.3 L1893.5,932.5 L1894.0,932.4 L1894.7,932.2 L1896.0,932.6 L1898.0,932.8 L1900.0,932.8 L1902.0,932.8 L1903.6,933.2 L1904.0,933.3 L1906.0,933.7 L1908.0,933.8 L1910.0,934.1 L1912.0,934.3 L1914.0,931.4 L1914.6,930.4 L1916.0,930.2 L1917.2,929.8 L1918.0,929.7 L1919.6,929.4 L1920.0,929.5 L1922.0,929.3 L1924.0,929.0 L1926.0,928.7 L1928.0,928.5 L1929.5,928.3 L1930.0,928.4 L1930.7,928.5 L1930.8,928.6 L1932.0,928.3 L1934.0,928.4 L1936.0,928.6 L1938.0,928.8 L1940.0,929.0 L1941.0,928.9 L1942.0,929.2 L1943.2,929.4 L1944.0,929.4 L1946.0,929.5 L1948.0,929.7 L1950.0,929.9 L1952.0,930.1 L1953.0,930.0 L1953.1,929.7 L1954.0,927.8 L1955.6,924.4 L1956.0,924.6 L1958.0,923.9 L1960.0,923.7 L1961.5,923.3 L1961.8,923.2 L1962.0,923.4 L1964.0,923.0 L1965.0,922.6 L1965.5,922.6 L1966.0,922.6 L1966.8,922.4 L1968.0,922.2 L1970.0,922.2 L1972.0,922.6 L1974.0,923.0 L1976.0,923.6 L1978.0,924.0 L1978.5,923.9 L1980.0,924.0 L1982.0,923.7 L1984.0,923.1 L1986.0,922.9 L1988.0,922.3 L1990.0,921.7 L1992.0,921.6 L1994.0,921.3 L1996.0,920.8 L1998.0,920.6 L2000.0,919.8 L2002.0,919.9 L2002.3,919.7 L2002.5,919.7 L2003.3,919.6 L2004.0,919.2 L2005.0,919.0 L2006.0,918.7 L2008.0,918.2 L2010.0,917.3 L2012.0,916.8 L2014.0,916.8 L2014.2,916.8 L2016.0,916.4 L2017.6,916.1 L2018.0,915.6 L2020.0,915.2 L2022.0,914.5 L2024.0,914.1 L2025.0,913.7 L2026.0,913.6 L2028.0,913.2 L2030.0,912.8 L2032.0,912.0 L2032.3,911.7 L2034.0,911.3 L2036.0,910.8 L2038.0,910.7 L2038.5,910.6 L2040.0,909.7 L2042.0,908.9 L2043.0,908.2 L2044.0,908.2 L2044.7,907.9 L2046.0,907.5 L2048.0,906.3 L2050.0,905.3 L2052.0,904.3 L2054.0,903.6 L2056.0,902.9 L2056.5,902.9 L2057.0,902.9 L2058.0,903.0 L2060.0,902.6 L2062.0,902.4 L2064.0,902.7 L2065.5,902.8 L2066.0,902.8 L2066.6,902.6 L2067.0,899.0 L2067.4,895.6 L2068.0,891.2 L2068.5,887.0 L2068.8,884.4 L2070.0,884.9 L2072.0,885.0 L2074.0,885.5 L2074.4,885.3 L2076.0,885.5 L2076.7,885.8 L2077.0,885.9 L2078.0,885.7 L2080.0,886.1 L2082.0,886.4 L2084.0,886.4 L2085.7,886.8 L2086.0,886.9 L2087.5,886.9 L2088.0,886.5 L2090.0,887.1 L2090.2,887.3 L2090.7,887.8 L2092.0,888.6 L2092.4,888.6 L2094.0,889.0 L2096.0,889.5 L2098.0,889.9 L2100.0,890.2 L2102.0,890.8 L2104.0,891.4 L2104.4,891.2 L2105.9,891.8 L2106.0,891.8 L2108.0,890.6 L2108.2,890.1 L2110.0,889.2 L2112.0,887.8 L2112.7,887.5 L2114.0,886.8 L2116.0,885.8 L2116.6,885.5 L2118.0,885.2 L2120.0,884.2 L2122.0,883.2 L2124.0,882.5 L2126.0,881.1 L2126.2,881.4 L2126.8,881.6 L2128.0,880.9 L2128.2,881.1 L2130.0,880.0 L2132.0,879.7 L2132.9,879.0 L2134.0,878.4 L2136.0,878.5 L2137.0,878.6 L2137.4,878.3 L2138.0,878.2 L2140.0,877.5 L2142.0,877.2 L2144.0,876.9 L2145.8,876.2 L2146.0,876.1 L2148.0,875.4 L2148.6,875.6 L2150.0,875.2 L2151.6,874.5 L2152.0,874.3 L2154.0,874.1 L2156.0,873.4 L2156.9,871.9 L2157.1,872.9 L2158.0,872.8 L2159.5,872.8 L2159.5,898.7 L2158.0,898.8 L2157.1,899.0 L2156.9,898.2 L2156.0,898.7 L2154.0,899.2 L2152.0,899.5 L2151.6,899.6 L2150.0,899.9 L2148.6,900.2 L2148.0,900.0 L2146.0,900.3 L2145.8,900.4 L2144.0,900.8 L2142.0,901.0 L2140.0,901.2 L2138.0,901.7 L2137.4,902.2 L2137.0,902.5 L2136.0,902.4 L2134.0,902.2 L2132.9,902.6 L2132.0,902.8 L2130.0,903.0 L2128.2,903.6 L2128.0,903.6 L2126.8,903.9 L2126.2,903.9 L2126.0,903.4 L2124.0,904.1 L2122.0,904.3 L2120.0,904.5 L2118.0,905.1 L2116.6,905.1 L2116.0,905.0 L2114.0,905.3 L2112.7,905.5 L2112.0,905.5 L2110.0,906.0 L2108.2,906.5 L2108.0,906.7 L2106.0,907.4 L2105.9,907.4 L2104.4,906.9 L2104.0,907.3 L2102.0,907.0 L2100.0,906.8 L2098.0,906.8 L2096.0,906.7 L2094.0,906.2 L2092.4,906.3 L2092.0,906.6 L2090.7,906.0 L2090.2,906.0 L2090.0,905.6 L2088.0,905.5 L2087.5,905.7 L2086.0,905.9 L2085.7,906.1 L2084.0,905.8 L2082.0,906.1 L2080.0,906.0 L2078.0,905.6 L2077.0,905.7 L2076.7,905.4 L2076.0,905.5 L2074.4,905.4 L2074.0,905.2 L2072.0,905.2 L2070.0,904.8 L2068.8,904.7 L2068.5,906.4 L2068.0,908.9 L2067.4,911.4 L2067.0,913.8 L2066.6,916.1 L2066.0,916.5 L2065.5,916.9 L2064.0,917.5 L2062.0,918.1 L2060.0,919.1 L2058.0,920.2 L2057.0,920.4 L2056.5,920.9 L2056.0,921.1 L2054.0,921.9 L2052.0,922.7 L2050.0,923.7 L2048.0,925.0 L2046.0,926.1 L2044.7,926.7 L2044.0,926.9 L2043.0,927.3 L2042.0,927.8 L2040.0,928.7 L2038.5,928.8 L2038.0,928.9 L2036.0,928.8 L2034.0,929.2 L2032.3,929.2 L2032.0,929.3 L2030.0,929.8 L2028.0,930.0 L2026.0,930.4 L2025.0,930.3 L2024.0,930.6 L2022.0,930.6 L2020.0,930.9 L2018.0,931.0 L2017.6,931.1 L2016.0,931.1 L2014.2,931.5 L2014.0,931.5 L2012.0,931.6 L2010.0,931.7 L2008.0,932.2 L2006.0,932.5 L2005.0,932.5 L2004.0,932.6 L2003.3,932.6 L2002.5,932.7 L2002.3,932.4 L2002.0,932.6 L2000.0,932.4 L1998.0,932.4 L1996.0,932.3 L1994.0,932.2 L1992.0,932.2 L1990.0,932.1 L1988.0,932.2 L1986.0,932.2 L1984.0,932.1 L1982.0,932.1 L1980.0,931.9 L1978.5,932.3 L1978.0,932.7 L1976.0,933.1 L1974.0,933.3 L1972.0,933.7 L1970.0,934.1 L1968.0,934.7 L1966.8,935.2 L1966.0,935.4 L1965.5,935.6 L1965.0,935.7 L1964.0,936.0 L1962.0,936.4 L1961.8,936.4 L1961.5,936.6 L1960.0,937.0 L1958.0,937.3 L1956.0,937.9 L1955.6,937.8 L1954.0,938.3 L1953.1,938.3 L1953.0,938.4 L1952.0,938.4 L1950.0,938.3 L1948.0,938.0 L1946.0,937.9 L1944.0,937.7 L1943.2,937.5 L1942.0,937.3 L1941.0,937.2 L1940.0,937.2 L1938.0,937.1 L1936.0,936.7 L1934.0,936.4 L1932.0,936.3 L1930.8,936.4 L1930.7,936.3 L1930.0,936.1 L1929.5,935.9 L1928.0,935.8 L1926.0,935.5 L1924.0,935.4 L1922.0,935.1 L1920.0,935.0 L1919.6,934.9 L1918.0,934.8 L1917.2,934.7 L1916.0,934.9 L1914.6,934.6 L1914.0,934.6 L1912.0,934.3 L1910.0,934.1 L1908.0,933.8 L1906.0,933.7 L1904.0,933.3 L1903.6,933.2 L1902.0,932.8 L1900.0,932.8 L1898.0,932.8 L1896.0,932.6 L1894.7,932.2 L1894.0,932.4 L1893.5,932.5 L1892.0,932.3 L1891.5,931.7 L1891.0,932.1 L1890.0,932.2 L1888.0,932.8 L1887.0,933.1 L1886.0,933.1 L1884.0,933.5 L1882.0,934.1 L1880.0,934.7 L1878.0,935.1 L1876.2,935.5 L1876.0,935.6 L1874.0,936.3 L1872.4,936.8 L1872.0,936.8 L1871.8,936.9 L1871.7,936.9 L1870.0,937.3 L1869.9,937.2 L1868.5,937.7 L1868.0,938.0 L1866.0,938.3 L1864.0,938.7 L1863.0,938.9 L1862.0,939.2 L1861.8,939.2 L1861.2,939.4 L1860.9,939.3 L1860.6,939.6 L1860.0,942.0 L1858.7,946.1 L1858.5,946.8 L1858.0,948.3 L1856.5,948.3 L1856.0,948.3 L1854.0,948.3 L1852.0,948.3 L1850.0,948.3 L1848.0,948.3 L1846.0,948.3 L1844.0,948.3 L1842.0,948.3 L1840.0,948.3 L1839.0,948.3 L1838.0,948.3 L1836.0,948.3 L1834.0,948.3 L1832.0,948.3 L1830.0,948.3 L1828.0,948.3 L1826.0,948.3 L1824.0,948.3 L1822.0,948.3 L1820.0,948.3 L1819.3,948.3 L1818.0,948.3 L1816.0,948.3 L1814.0,948.3 L1812.0,948.3 L1810.0,948.3 L1808.0,948.3 L1806.0,948.3 L1804.0,948.3 L1802.0,948.4 L1800.0,948.4 L1798.0,948.4 L1796.0,948.3 L1794.0,948.3 L1792.0,948.3 L1790.0,948.3 L1788.0,948.3 L1786.0,948.3 L1784.0,948.3 L1782.0,948.3 L1780.0,948.3 L1778.0,948.3 L1776.0,948.3 L1774.0,948.3 L1772.0,948.3 L1770.0,948.3 L1768.0,948.3 L1766.0,948.3 L1764.0,948.3 L1762.0,948.3 L1760.0,948.3 L1758.0,948.4 L1756.0,948.3 L1754.0,948.4 L1752.0,948.3 L1750.0,948.4 L1748.0,948.4 L1746.0,948.3 L1744.0,948.3 L1742.0,948.4 L1740.0,948.4 L1738.4,948.4 L1738.0,948.4 L1736.0,948.3 L1734.0,948.4 L1732.0,948.4 L1730.0,948.3 L1728.0,948.3 L1726.0,948.3 L1724.0,948.3 L1722.0,948.3 L1720.0,948.3 L1718.0,948.3 L1716.0,948.4 L1714.0,948.4 L1712.0,948.4 L1710.0,948.3 L1708.0,948.4 L1706.0,948.3 L1704.0,948.3 L1702.0,948.3 L1700.0,948.4 L1698.0,948.4 L1696.0,948.3 L1694.7,948.3 L1694.0,948.3 L1692.0,948.4 L1690.0,948.4 L1688.0,948.4 L1686.0,948.3 L1684.0,948.4 L1682.0,948.4 L1680.0,948.4 L1678.0,948.4 L1676.0,948.4 L1674.0,948.4 L1672.0,948.4 L1670.0,948.4 L1668.4,948.4 L1668.0,948.4 L1666.0,948.4 L1664.0,948.4 L1662.0,948.4 L1661.9,948.4 L1660.0,948.4 L1658.0,948.4 L1656.0,948.4 L1654.0,948.4 L1652.0,948.4 L1650.0,948.4 L1648.0,948.4 L1646.0,948.4 L1644.0,948.4 L1642.0,948.4 L1640.0,948.4 L1638.0,948.4 L1636.0,948.4 L1634.0,948.4 L1632.0,948.4 L1630.0,948.4 L1628.0,948.4 L1626.0,948.3 L1624.0,948.4 L1622.0,948.4 L1620.0,948.4 L1618.0,948.4 L1616.0,948.4 L1614.0,948.4 L1612.0,948.4 L1610.0,948.4 L1608.0,948.4 L1606.0,948.4 L1604.0,948.4 L1602.0,948.4 L1600.0,948.4 L1598.0,948.4 L1596.6,948.4 L1596.0,948.4 L1595.0,948.4 L1594.0,948.4 L1592.0,948.3 L1590.0,948.4 L1588.0,948.4 L1586.0,948.4 L1584.0,948.4 L1582.0,948.4 L1580.0,948.5 L1578.0,948.4 L1576.0,948.4 L1574.0,948.4 L1572.0,948.4 L1570.0,948.4 L1568.0,948.4 L1566.0,948.4 L1564.0,948.4 L1562.0,948.4 L1560.0,948.4 L1558.7,948.4 L1558.0,948.4 L1556.0,948.4 L1554.0,948.4 L1552.0,948.4 L1550.0,948.4 L1548.0,948.4 L1546.0,948.4 L1544.0,948.4 L1542.0,948.4 L1541.0,948.4 L1540.0,948.4 L1538.0,948.4 L1536.0,948.4 L1534.0,948.4 L1532.0,948.5 L1530.0,948.5 L1529.5,948.4 L1528.0,948.4 L1526.0,948.4 L1524.0,948.4 L1522.0,948.4 L1520.0,948.4 L1518.0,948.4 L1516.0,948.4 L1514.0,948.4 L1512.0,948.4 L1510.0,948.4 L1508.0,948.4 L1506.0,948.4 L1504.0,948.5 L1502.0,948.4 L1500.0,948.5 L1498.0,948.4 L1496.0,948.5 L1494.0,948.5 L1492.0,948.4 L1490.0,948.4 L1488.0,948.4 L1486.0,948.5 L1484.0,948.4 L1482.0,948.4 L1480.0,948.4 L1478.0,948.4 L1476.0,948.4 L1474.0,948.4 L1472.0,948.4 L1471.2,948.4 L1470.0,948.5 L1468.0,948.5 L1466.0,948.5 L1464.0,948.4 L1462.0,948.5 L1460.0,948.4 L1458.0,948.5 L1456.0,948.4 L1454.0,948.4 L1452.0,948.4 L1450.0,948.5 L1448.0,948.5 L1446.0,948.5 L1444.0,948.4 L1442.0,948.4 L1440.0,948.5 L1438.0,948.5 L1436.0,948.5 L1434.0,948.4 L1432.0,948.5 L1430.4,948.5 L1430.0,948.5 L1428.0,948.5 L1426.0,948.5 L1424.0,948.5 L1422.0,948.5 L1420.0,948.5 L1418.0,948.5 L1416.0,948.5 L1414.0,948.5 L1412.0,948.5 L1410.0,948.5 L1408.0,948.5 L1406.0,948.4 L1404.0,948.5 L1402.0,948.5 L1400.0,948.4 L1398.3,948.4 L1398.0,948.5 L1396.0,948.4 L1394.0,948.5 L1392.0,948.5 L1390.0,948.5 L1388.0,948.5 L1386.0,948.5 L1384.0,948.5 L1382.0,948.5 L1380.0,948.5 L1378.0,948.5 L1376.0,948.5 L1375.0,948.5 L1374.0,948.5 L1372.0,948.5 L1370.0,948.5 L1368.0,948.5 L1366.0,948.5 L1364.0,948.5 L1362.0,948.5 L1360.0,948.5 L1358.0,948.5 L1356.0,948.5 L1354.0,948.5 L1352.0,948.5 L1350.0,948.5 L1348.0,948.5 L1346.0,948.5 L1344.0,948.5 L1342.0,948.5 L1340.0,948.5 L1338.0,948.5 L1336.0,948.5 L1334.5,948.5 L1334.0,949.0 L1333.0,950.0 L1332.0,950.0 L1330.0,950.0 L1328.0,950.0 L1326.0,950.0 L1324.0,950.0 L1322.0,950.0 L1320.0,950.0 L1318.0,950.0 L1316.0,950.0 L1314.0,950.0 L1312.5,950.0 L1312.0,950.0 L1310.0,950.0 L1308.0,950.0 L1306.0,950.0 L1304.0,950.0 L1302.0,950.0 L1300.0,950.0 L1270.5,950.0 L1207.6,950.0 L1207.0,950.0 L1125.0,950.0 L1107.5,950.0 L1076.5,950.0 L1076.0,950.0 L1036.4,950.0 L1036.0,950.0 L1001.5,950.0 L1001.4,950.0 L943.3,950.0 L943.0,950.0 L875.7,950.0 L875.5,950.0 L208.5,950.0 L190.8,950.0 Z" fill="url(#g_cb)"/>
<path d="M190.8,950.0 L208.5,948.9 L875.5,948.7 L875.7,944.8 L943.0,944.8 L943.3,946.0 L1001.4,946.0 L1001.5,946.0 L1036.0,946.0 L1036.4,946.0 L1076.0,946.0 L1076.5,942.9 L1107.5,942.9 L1125.0,942.9 L1207.0,942.9 L1207.6,945.2 L1270.5,945.2 L1300.0,945.2 L1302.0,945.2 L1304.0,945.3 L1306.0,945.3 L1308.0,945.2 L1310.0,945.3 L1312.0,945.2 L1312.5,945.3 L1314.0,945.2 L1316.0,945.2 L1318.0,945.3 L1320.0,945.3 L1322.0,945.2 L1324.0,945.2 L1326.0,945.2 L1328.0,945.2 L1330.0,945.2 L1332.0,945.1 L1333.0,945.1 L1334.0,945.1 L1334.5,945.2 L1336.0,945.2 L1338.0,945.2 L1340.0,945.2 L1342.0,945.2 L1344.0,945.2 L1346.0,945.1 L1348.0,945.1 L1350.0,945.2 L1352.0,945.2 L1354.0,945.2 L1356.0,945.1 L1358.0,945.1 L1360.0,945.1 L1362.0,945.1 L1364.0,945.2 L1366.0,945.2 L1368.0,945.2 L1370.0,945.2 L1372.0,945.2 L1374.0,945.2 L1375.0,945.2 L1376.0,945.2 L1378.0,945.2 L1380.0,945.2 L1382.0,945.2 L1384.0,945.2 L1386.0,945.2 L1388.0,945.2 L1390.0,945.3 L1392.0,945.3 L1394.0,945.2 L1396.0,945.2 L1398.0,945.2 L1398.3,945.2 L1400.0,945.2 L1402.0,945.2 L1404.0,945.2 L1406.0,945.2 L1408.0,945.1 L1410.0,945.2 L1412.0,945.2 L1414.0,945.1 L1416.0,945.1 L1418.0,945.2 L1420.0,945.2 L1422.0,945.2 L1424.0,945.2 L1426.0,945.2 L1428.0,945.1 L1430.0,945.2 L1430.4,945.2 L1432.0,945.2 L1434.0,945.2 L1436.0,945.1 L1438.0,945.2 L1440.0,945.2 L1442.0,945.1 L1444.0,945.2 L1446.0,945.2 L1448.0,945.2 L1450.0,945.2 L1452.0,945.2 L1454.0,945.2 L1456.0,945.2 L1458.0,945.2 L1460.0,945.2 L1462.0,945.3 L1464.0,945.2 L1466.0,945.3 L1468.0,945.2 L1470.0,945.2 L1471.2,945.2 L1472.0,945.2 L1474.0,945.2 L1476.0,945.2 L1478.0,945.2 L1480.0,945.2 L1482.0,945.2 L1484.0,945.2 L1486.0,945.2 L1488.0,945.2 L1490.0,945.2 L1492.0,945.2 L1494.0,945.3 L1496.0,945.3 L1498.0,945.2 L1500.0,945.2 L1502.0,945.2 L1504.0,945.2 L1506.0,945.3 L1508.0,945.2 L1510.0,945.2 L1512.0,945.2 L1514.0,945.3 L1516.0,945.3 L1518.0,945.2 L1520.0,945.3 L1522.0,945.3 L1524.0,945.2 L1526.0,945.2 L1528.0,945.2 L1529.5,945.3 L1530.0,945.3 L1532.0,945.3 L1534.0,945.2 L1536.0,945.2 L1538.0,945.2 L1540.0,945.2 L1541.0,945.2 L1542.0,945.1 L1544.0,945.1 L1546.0,945.1 L1548.0,945.2 L1550.0,945.2 L1552.0,945.2 L1554.0,945.1 L1556.0,945.2 L1558.0,945.2 L1558.7,945.2 L1560.0,945.3 L1562.0,945.2 L1564.0,945.3 L1566.0,945.2 L1568.0,945.2 L1570.0,945.2 L1572.0,945.2 L1574.0,945.1 L1576.0,945.2 L1578.0,945.2 L1580.0,945.2 L1582.0,945.2 L1584.0,945.2 L1586.0,945.2 L1588.0,945.2 L1590.0,945.2 L1592.0,945.1 L1594.0,945.2 L1595.0,945.1 L1596.0,944.5 L1596.6,944.1 L1598.0,944.2 L1600.0,944.1 L1602.0,944.1 L1604.0,944.0 L1606.0,943.9 L1608.0,944.0 L1610.0,943.9 L1612.0,943.9 L1614.0,943.9 L1616.0,943.8 L1618.0,943.8 L1620.0,943.7 L1622.0,943.7 L1624.0,943.7 L1626.0,943.6 L1628.0,943.6 L1630.0,943.5 L1632.0,943.5 L1634.0,943.5 L1636.0,943.4 L1638.0,943.3 L1640.0,943.3 L1642.0,943.3 L1644.0,943.2 L1646.0,943.2 L1648.0,943.3 L1650.0,943.2 L1652.0,943.1 L1654.0,943.0 L1656.0,943.0 L1658.0,943.0 L1660.0,943.1 L1661.9,943.0 L1662.0,943.1 L1664.0,943.0 L1666.0,942.9 L1668.0,943.0 L1668.4,942.9 L1670.0,942.9 L1672.0,942.7 L1674.0,942.6 L1676.0,942.5 L1678.0,942.5 L1680.0,942.5 L1682.0,942.4 L1684.0,942.5 L1686.0,942.3 L1688.0,942.4 L1690.0,942.4 L1692.0,942.4 L1694.0,942.4 L1694.7,942.3 L1696.0,942.3 L1698.0,942.4 L1700.0,942.3 L1702.0,942.2 L1704.0,942.1 L1706.0,942.0 L1708.0,942.2 L1710.0,942.0 L1712.0,942.0 L1714.0,942.0 L1716.0,941.9 L1718.0,942.0 L1720.0,941.9 L1722.0,941.9 L1724.0,941.8 L1726.0,941.7 L1728.0,941.6 L1730.0,941.7 L1732.0,941.6 L1734.0,941.7 L1736.0,941.5 L1738.0,941.4 L1738.4,941.5 L1740.0,941.6 L1742.0,941.5 L1744.0,941.4 L1746.0,941.4 L1748.0,941.3 L1750.0,941.3 L1752.0,941.2 L1754.0,941.3 L1756.0,941.1 L1758.0,941.1 L1760.0,941.1 L1762.0,940.9 L1764.0,940.9 L1766.0,941.0 L1768.0,941.0 L1770.0,941.0 L1772.0,940.9 L1774.0,940.9 L1776.0,940.8 L1778.0,940.8 L1780.0,940.7 L1782.0,940.7 L1784.0,940.8 L1786.0,940.7 L1788.0,940.8 L1790.0,940.6 L1792.0,940.6 L1794.0,940.4 L1796.0,940.5 L1798.0,940.5 L1800.0,940.4 L1802.0,940.5 L1804.0,940.4 L1806.0,940.3 L1808.0,940.2 L1810.0,940.2 L1812.0,940.1 L1814.0,940.0 L1816.0,940.1 L1818.0,939.9 L1819.3,939.9 L1820.0,939.9 L1822.0,939.9 L1824.0,939.9 L1826.0,939.9 L1828.0,939.8 L1830.0,939.8 L1832.0,939.7 L1834.0,939.7 L1836.0,939.7 L1838.0,939.5 L1839.0,939.6 L1840.0,939.5 L1842.0,939.6 L1844.0,939.6 L1846.0,939.6 L1848.0,939.3 L1850.0,939.3 L1852.0,939.3 L1854.0,939.3 L1856.0,939.2 L1856.5,939.3 L1858.0,939.0 L1858.5,939.2 L1858.7,939.2 L1860.0,935.0 L1860.6,933.0 L1860.9,931.9 L1861.2,932.0 L1861.8,932.3 L1862.0,932.3 L1863.0,932.7 L1864.0,933.1 L1866.0,933.9 L1868.0,934.8 L1868.5,934.7 L1869.9,935.1 L1870.0,935.2 L1871.7,935.8 L1871.8,935.9 L1872.0,935.7 L1872.4,935.5 L1874.0,934.5 L1876.0,933.0 L1876.2,932.8 L1878.0,931.7 L1880.0,930.5 L1882.0,929.0 L1884.0,927.6 L1886.0,926.5 L1887.0,926.0 L1888.0,925.4 L1890.0,924.1 L1891.0,923.5 L1891.5,923.0 L1892.0,923.7 L1893.5,924.0 L1894.0,924.0 L1894.7,923.8 L1896.0,924.2 L1898.0,924.5 L1900.0,924.7 L1902.0,924.8 L1903.6,925.4 L1904.0,925.5 L1906.0,926.1 L1908.0,926.2 L1910.0,926.5 L1912.0,927.1 L1914.0,926.7 L1914.6,926.7 L1916.0,926.5 L1917.2,925.9 L1918.0,925.7 L1919.6,925.4 L1920.0,925.4 L1922.0,925.1 L1924.0,924.7 L1926.0,924.3 L1928.0,924.0 L1929.5,923.7 L1930.0,923.8 L1930.7,923.8 L1930.8,923.8 L1932.0,923.1 L1934.0,922.7 L1936.0,922.5 L1938.0,922.2 L1940.0,921.8 L1941.0,921.5 L1942.0,921.5 L1943.2,921.6 L1944.0,921.4 L1946.0,920.9 L1948.0,920.6 L1950.0,920.2 L1952.0,919.9 L1953.0,919.6 L1953.1,919.2 L1954.0,919.2 L1955.6,918.8 L1956.0,919.0 L1958.0,918.2 L1960.0,918.0 L1961.5,917.4 L1961.8,917.4 L1962.0,917.5 L1964.0,917.1 L1965.0,916.6 L1965.5,916.5 L1966.0,916.5 L1966.8,916.3 L1968.0,915.9 L1970.0,915.1 L1972.0,914.7 L1974.0,914.2 L1976.0,914.0 L1978.0,913.7 L1978.5,913.4 L1980.0,912.8 L1982.0,912.2 L1984.0,911.3 L1986.0,910.7 L1988.0,909.8 L1990.0,908.9 L1992.0,908.7 L1994.0,908.0 L1996.0,907.4 L1998.0,906.6 L2000.0,905.7 L2002.0,905.2 L2002.3,905.1 L2002.5,905.1 L2003.3,904.6 L2004.0,904.0 L2005.0,903.7 L2006.0,903.2 L2008.0,902.3 L2010.0,901.0 L2012.0,900.0 L2014.0,899.7 L2014.2,899.6 L2016.0,898.7 L2017.6,897.6 L2018.0,896.7 L2020.0,895.6 L2022.0,895.0 L2024.0,894.1 L2025.0,893.5 L2026.0,893.4 L2028.0,892.1 L2030.0,891.1 L2032.0,889.8 L2032.3,889.1 L2034.0,888.4 L2036.0,887.6 L2038.0,887.1 L2038.5,887.1 L2040.0,885.9 L2042.0,885.4 L2043.0,884.4 L2044.0,884.2 L2044.7,883.8 L2046.0,883.0 L2048.0,881.4 L2050.0,880.3 L2052.0,878.5 L2054.0,877.2 L2056.0,875.5 L2056.5,875.6 L2057.0,875.1 L2058.0,874.7 L2060.0,873.1 L2062.0,872.0 L2064.0,871.0 L2065.5,870.1 L2066.0,870.4 L2066.6,869.4 L2067.0,864.8 L2067.4,860.0 L2068.0,853.7 L2068.5,848.4 L2068.8,847.8 L2070.0,847.7 L2072.0,847.0 L2074.0,847.3 L2074.4,847.0 L2076.0,846.0 L2076.7,845.8 L2077.0,845.7 L2078.0,846.3 L2080.0,846.9 L2082.0,845.3 L2084.0,844.3 L2085.7,843.7 L2086.0,843.8 L2087.5,843.5 L2088.0,842.8 L2090.0,842.7 L2090.2,842.1 L2090.7,842.5 L2092.0,843.4 L2092.4,843.6 L2094.0,843.3 L2096.0,843.5 L2098.0,844.1 L2100.0,844.5 L2102.0,845.8 L2104.0,846.6 L2104.4,845.9 L2105.9,847.3 L2106.0,846.8 L2108.0,846.6 L2108.2,846.0 L2110.0,846.3 L2112.0,845.8 L2112.7,846.3 L2114.0,846.2 L2116.0,845.9 L2116.6,846.3 L2118.0,845.4 L2120.0,843.8 L2122.0,843.4 L2124.0,842.3 L2126.0,841.1 L2126.2,841.3 L2126.8,841.0 L2128.0,840.0 L2128.2,840.7 L2130.0,838.6 L2132.0,837.9 L2132.9,837.7 L2134.0,836.7 L2136.0,836.6 L2137.0,837.3 L2137.4,836.6 L2138.0,837.5 L2140.0,837.3 L2142.0,836.8 L2144.0,836.6 L2145.8,836.4 L2146.0,836.2 L2148.0,836.5 L2148.6,836.7 L2150.0,836.4 L2151.6,836.0 L2152.0,836.0 L2154.0,836.2 L2156.0,836.1 L2156.9,834.8 L2157.1,836.6 L2158.0,836.3 L2159.5,837.0 L2159.5,872.8 L2158.0,872.8 L2157.1,872.9 L2156.9,871.9 L2156.0,873.4 L2154.0,874.1 L2152.0,874.3 L2151.6,874.5 L2150.0,875.2 L2148.6,875.6 L2148.0,875.4 L2146.0,876.1 L2145.8,876.2 L2144.0,876.9 L2142.0,877.2 L2140.0,877.5 L2138.0,878.2 L2137.4,878.3 L2137.0,878.6 L2136.0,878.5 L2134.0,878.4 L2132.9,879.0 L2132.0,879.7 L2130.0,880.0 L2128.2,881.1 L2128.0,880.9 L2126.8,881.6 L2126.2,881.4 L2126.0,881.1 L2124.0,882.5 L2122.0,883.2 L2120.0,884.2 L2118.0,885.2 L2116.6,885.5 L2116.0,885.8 L2114.0,886.8 L2112.7,887.5 L2112.0,887.8 L2110.0,889.2 L2108.2,890.1 L2108.0,890.6 L2106.0,891.8 L2105.9,891.8 L2104.4,891.2 L2104.0,891.4 L2102.0,890.8 L2100.0,890.2 L2098.0,889.9 L2096.0,889.5 L2094.0,889.0 L2092.4,888.6 L2092.0,888.6 L2090.7,887.8 L2090.2,887.3 L2090.0,887.1 L2088.0,886.5 L2087.5,886.9 L2086.0,886.9 L2085.7,886.8 L2084.0,886.4 L2082.0,886.4 L2080.0,886.1 L2078.0,885.7 L2077.0,885.9 L2076.7,885.8 L2076.0,885.5 L2074.4,885.3 L2074.0,885.5 L2072.0,885.0 L2070.0,884.9 L2068.8,884.4 L2068.5,887.0 L2068.0,891.2 L2067.4,895.6 L2067.0,899.0 L2066.6,902.6 L2066.0,902.8 L2065.5,902.8 L2064.0,902.7 L2062.0,902.4 L2060.0,902.6 L2058.0,903.0 L2057.0,902.9 L2056.5,902.9 L2056.0,902.9 L2054.0,903.6 L2052.0,904.3 L2050.0,905.3 L2048.0,906.3 L2046.0,907.5 L2044.7,907.9 L2044.0,908.2 L2043.0,908.2 L2042.0,908.9 L2040.0,909.7 L2038.5,910.6 L2038.0,910.7 L2036.0,910.8 L2034.0,911.3 L2032.3,911.7 L2032.0,912.0 L2030.0,912.8 L2028.0,913.2 L2026.0,913.6 L2025.0,913.7 L2024.0,914.1 L2022.0,914.5 L2020.0,915.2 L2018.0,915.6 L2017.6,916.1 L2016.0,916.4 L2014.2,916.8 L2014.0,916.8 L2012.0,916.8 L2010.0,917.3 L2008.0,918.2 L2006.0,918.7 L2005.0,919.0 L2004.0,919.2 L2003.3,919.6 L2002.5,919.7 L2002.3,919.7 L2002.0,919.9 L2000.0,919.8 L1998.0,920.6 L1996.0,920.8 L1994.0,921.3 L1992.0,921.6 L1990.0,921.7 L1988.0,922.3 L1986.0,922.9 L1984.0,923.1 L1982.0,923.7 L1980.0,924.0 L1978.5,923.9 L1978.0,924.0 L1976.0,923.6 L1974.0,923.0 L1972.0,922.6 L1970.0,922.2 L1968.0,922.2 L1966.8,922.4 L1966.0,922.6 L1965.5,922.6 L1965.0,922.6 L1964.0,923.0 L1962.0,923.4 L1961.8,923.2 L1961.5,923.3 L1960.0,923.7 L1958.0,923.9 L1956.0,924.6 L1955.6,924.4 L1954.0,927.8 L1953.1,929.7 L1953.0,930.0 L1952.0,930.1 L1950.0,929.9 L1948.0,929.7 L1946.0,929.5 L1944.0,929.4 L1943.2,929.4 L1942.0,929.2 L1941.0,928.9 L1940.0,929.0 L1938.0,928.8 L1936.0,928.6 L1934.0,928.4 L1932.0,928.3 L1930.8,928.6 L1930.7,928.5 L1930.0,928.4 L1929.5,928.3 L1928.0,928.5 L1926.0,928.7 L1924.0,929.0 L1922.0,929.3 L1920.0,929.5 L1919.6,929.4 L1918.0,929.7 L1917.2,929.8 L1916.0,930.2 L1914.6,930.4 L1914.0,931.4 L1912.0,934.3 L1910.0,934.1 L1908.0,933.8 L1906.0,933.7 L1904.0,933.3 L1903.6,933.2 L1902.0,932.8 L1900.0,932.8 L1898.0,932.8 L1896.0,932.6 L1894.7,932.2 L1894.0,932.4 L1893.5,932.5 L1892.0,931.3 L1891.5,930.0 L1891.0,929.7 L1890.0,930.1 L1888.0,931.3 L1887.0,932.0 L1886.0,932.3 L1884.0,933.3 L1882.0,934.1 L1880.0,934.7 L1878.0,935.1 L1876.2,935.5 L1876.0,935.6 L1874.0,936.3 L1872.4,936.8 L1872.0,936.8 L1871.8,936.9 L1871.7,936.9 L1870.0,937.3 L1869.9,937.2 L1868.5,937.7 L1868.0,938.0 L1866.0,938.3 L1864.0,938.3 L1863.0,938.0 L1862.0,937.8 L1861.8,937.7 L1861.2,937.6 L1860.9,938.3 L1860.6,939.3 L1860.0,940.9 L1858.7,944.5 L1858.5,944.5 L1858.0,944.3 L1856.5,944.4 L1856.0,944.4 L1854.0,944.5 L1852.0,944.6 L1850.0,944.6 L1848.0,944.6 L1846.0,944.8 L1844.0,944.9 L1842.0,944.9 L1840.0,944.9 L1839.0,944.9 L1838.0,945.0 L1836.0,945.0 L1834.0,945.1 L1832.0,945.1 L1830.0,945.2 L1828.0,945.2 L1826.0,945.3 L1824.0,945.4 L1822.0,945.4 L1820.0,945.4 L1819.3,945.4 L1818.0,945.5 L1816.0,945.5 L1814.0,945.6 L1812.0,945.7 L1810.0,945.7 L1808.0,945.7 L1806.0,945.8 L1804.0,945.9 L1802.0,946.0 L1800.0,946.0 L1798.0,946.0 L1796.0,946.0 L1794.0,946.1 L1792.0,946.2 L1790.0,946.2 L1788.0,946.4 L1786.0,946.4 L1784.0,946.4 L1782.0,946.4 L1780.0,946.5 L1778.0,946.5 L1776.0,946.6 L1774.0,946.6 L1772.0,946.7 L1770.0,946.8 L1768.0,946.8 L1766.0,946.8 L1764.0,946.9 L1762.0,946.9 L1760.0,947.0 L1758.0,947.1 L1756.0,947.1 L1754.0,947.2 L1752.0,947.2 L1750.0,947.3 L1748.0,947.4 L1746.0,947.4 L1744.0,947.4 L1742.0,947.5 L1740.0,947.6 L1738.4,947.6 L1738.0,947.6 L1736.0,947.6 L1734.0,947.7 L1732.0,947.8 L1730.0,947.8 L1728.0,947.8 L1726.0,947.9 L1724.0,947.9 L1722.0,948.0 L1720.0,948.1 L1718.0,948.1 L1716.0,948.2 L1714.0,948.3 L1712.0,948.3 L1710.0,948.3 L1708.0,948.4 L1706.0,948.3 L1704.0,948.3 L1702.0,948.3 L1700.0,948.4 L1698.0,948.4 L1696.0,948.3 L1694.7,948.3 L1694.0,948.3 L1692.0,948.4 L1690.0,948.4 L1688.0,948.4 L1686.0,948.3 L1684.0,948.4 L1682.0,948.4 L1680.0,948.4 L1678.0,948.4 L1676.0,948.4 L1674.0,948.4 L1672.0,948.4 L1670.0,948.4 L1668.4,948.4 L1668.0,948.4 L1666.0,948.4 L1664.0,948.4 L1662.0,948.4 L1661.9,948.4 L1660.0,948.4 L1658.0,948.4 L1656.0,948.4 L1654.0,948.4 L1652.0,948.4 L1650.0,948.4 L1648.0,948.4 L1646.0,948.4 L1644.0,948.4 L1642.0,948.4 L1640.0,948.4 L1638.0,948.4 L1636.0,948.4 L1634.0,948.4 L1632.0,948.4 L1630.0,948.4 L1628.0,948.4 L1626.0,948.3 L1624.0,948.4 L1622.0,948.4 L1620.0,948.4 L1618.0,948.4 L1616.0,948.4 L1614.0,948.4 L1612.0,948.4 L1610.0,948.4 L1608.0,948.4 L1606.0,948.4 L1604.0,948.4 L1602.0,948.4 L1600.0,948.4 L1598.0,948.4 L1596.6,948.4 L1596.0,948.4 L1595.0,948.4 L1594.0,948.4 L1592.0,948.3 L1590.0,948.4 L1588.0,948.4 L1586.0,948.4 L1584.0,948.4 L1582.0,948.4 L1580.0,948.5 L1578.0,948.4 L1576.0,948.4 L1574.0,948.4 L1572.0,948.4 L1570.0,948.4 L1568.0,948.4 L1566.0,948.4 L1564.0,948.4 L1562.0,948.4 L1560.0,948.4 L1558.7,948.4 L1558.0,948.4 L1556.0,948.4 L1554.0,948.4 L1552.0,948.4 L1550.0,948.4 L1548.0,948.4 L1546.0,948.4 L1544.0,948.4 L1542.0,948.4 L1541.0,948.4 L1540.0,948.4 L1538.0,948.4 L1536.0,948.4 L1534.0,948.4 L1532.0,948.5 L1530.0,948.5 L1529.5,948.4 L1528.0,948.4 L1526.0,948.4 L1524.0,948.4 L1522.0,948.4 L1520.0,948.4 L1518.0,948.4 L1516.0,948.4 L1514.0,948.4 L1512.0,948.4 L1510.0,948.4 L1508.0,948.4 L1506.0,948.4 L1504.0,948.5 L1502.0,948.4 L1500.0,948.5 L1498.0,948.4 L1496.0,948.5 L1494.0,948.5 L1492.0,948.4 L1490.0,948.4 L1488.0,948.4 L1486.0,948.5 L1484.0,948.4 L1482.0,948.4 L1480.0,948.4 L1478.0,948.4 L1476.0,948.4 L1474.0,948.4 L1472.0,948.4 L1471.2,948.4 L1470.0,948.5 L1468.0,948.5 L1466.0,948.5 L1464.0,948.4 L1462.0,948.5 L1460.0,948.4 L1458.0,948.5 L1456.0,948.4 L1454.0,948.4 L1452.0,948.4 L1450.0,948.5 L1448.0,948.5 L1446.0,948.5 L1444.0,948.4 L1442.0,948.4 L1440.0,948.5 L1438.0,948.5 L1436.0,948.5 L1434.0,948.4 L1432.0,948.5 L1430.4,948.5 L1430.0,948.5 L1428.0,948.5 L1426.0,948.5 L1424.0,948.5 L1422.0,948.5 L1420.0,948.5 L1418.0,948.5 L1416.0,948.5 L1414.0,948.5 L1412.0,948.5 L1410.0,948.5 L1408.0,948.5 L1406.0,948.4 L1404.0,948.5 L1402.0,948.5 L1400.0,948.4 L1398.3,948.4 L1398.0,948.5 L1396.0,948.4 L1394.0,948.5 L1392.0,948.5 L1390.0,948.5 L1388.0,948.5 L1386.0,948.5 L1384.0,948.5 L1382.0,948.5 L1380.0,948.5 L1378.0,948.5 L1376.0,948.5 L1375.0,948.5 L1374.0,948.5 L1372.0,948.5 L1370.0,948.5 L1368.0,948.5 L1366.0,948.5 L1364.0,948.5 L1362.0,948.5 L1360.0,948.5 L1358.0,948.5 L1356.0,948.5 L1354.0,948.5 L1352.0,948.5 L1350.0,948.5 L1348.0,948.5 L1346.0,948.5 L1344.0,948.5 L1342.0,948.5 L1340.0,948.5 L1338.0,948.5 L1336.0,948.5 L1334.5,948.5 L1334.0,949.0 L1333.0,950.0 L1332.0,950.0 L1330.0,950.0 L1328.0,950.0 L1326.0,950.0 L1324.0,950.0 L1322.0,950.0 L1320.0,950.0 L1318.0,950.0 L1316.0,950.0 L1314.0,950.0 L1312.5,950.0 L1312.0,950.0 L1310.0,950.0 L1308.0,950.0 L1306.0,950.0 L1304.0,950.0 L1302.0,950.0 L1300.0,950.0 L1270.5,950.0 L1207.6,950.0 L1207.0,950.0 L1125.0,950.0 L1107.5,950.0 L1076.5,950.0 L1076.0,950.0 L1036.4,950.0 L1036.0,950.0 L1001.5,950.0 L1001.4,950.0 L943.3,950.0 L943.0,950.0 L875.7,950.0 L875.5,950.0 L208.5,950.0 L190.8,950.0 Z" fill="url(#g_iaf)"/>
<path d="M190.8,950.0 L208.5,948.9 L875.5,948.7 L875.7,944.8 L943.0,944.8 L943.3,946.0 L1001.4,946.0 L1001.5,946.0 L1036.0,946.0 L1036.4,946.0 L1076.0,946.0 L1076.5,942.9 L1107.5,942.9 L1125.0,942.9 L1207.0,942.9 L1207.6,945.2 L1270.5,945.2 L1300.0,945.2 L1302.0,945.2 L1304.0,945.3 L1306.0,945.3 L1308.0,945.2 L1310.0,945.3 L1312.0,945.2 L1312.5,945.3 L1314.0,945.2 L1316.0,945.2 L1318.0,945.3 L1320.0,945.3 L1322.0,945.2 L1324.0,945.2 L1326.0,945.2 L1328.0,945.2 L1330.0,945.2 L1332.0,945.1 L1333.0,945.1 L1334.0,945.1 L1334.5,945.2 L1336.0,945.2 L1338.0,945.2 L1340.0,945.2 L1342.0,945.2 L1344.0,945.2 L1346.0,945.1 L1348.0,945.1 L1350.0,945.2 L1352.0,945.2 L1354.0,945.2 L1356.0,945.1 L1358.0,945.1 L1360.0,945.1 L1362.0,945.1 L1364.0,945.2 L1366.0,945.2 L1368.0,945.2 L1370.0,945.2 L1372.0,945.2 L1374.0,945.2 L1375.0,945.2 L1376.0,945.2 L1378.0,945.2 L1380.0,945.2 L1382.0,945.2 L1384.0,945.2 L1386.0,945.2 L1388.0,945.2 L1390.0,945.3 L1392.0,945.3 L1394.0,945.2 L1396.0,945.2 L1398.0,945.2 L1398.3,945.2 L1400.0,945.2 L1402.0,945.2 L1404.0,945.2 L1406.0,945.2 L1408.0,945.1 L1410.0,945.2 L1412.0,945.2 L1414.0,945.1 L1416.0,945.1 L1418.0,945.2 L1420.0,945.2 L1422.0,945.2 L1424.0,945.2 L1426.0,945.2 L1428.0,945.1 L1430.0,945.2 L1430.4,945.2 L1432.0,945.2 L1434.0,945.2 L1436.0,945.1 L1438.0,945.2 L1440.0,945.2 L1442.0,945.1 L1444.0,945.2 L1446.0,945.2 L1448.0,945.2 L1450.0,945.2 L1452.0,945.2 L1454.0,945.2 L1456.0,945.2 L1458.0,945.2 L1460.0,945.2 L1462.0,945.3 L1464.0,945.2 L1466.0,945.3 L1468.0,945.2 L1470.0,945.2 L1471.2,945.2 L1472.0,945.2 L1474.0,945.2 L1476.0,945.2 L1478.0,945.2 L1480.0,945.2 L1482.0,945.2 L1484.0,945.2 L1486.0,945.2 L1488.0,945.2 L1490.0,945.2 L1492.0,945.2 L1494.0,945.3 L1496.0,945.3 L1498.0,945.2 L1500.0,945.2 L1502.0,945.2 L1504.0,945.2 L1506.0,945.3 L1508.0,945.2 L1510.0,945.2 L1512.0,945.2 L1514.0,945.3 L1516.0,945.3 L1518.0,945.2 L1520.0,945.3 L1522.0,945.3 L1524.0,945.2 L1526.0,945.2 L1528.0,945.2 L1529.5,945.3 L1530.0,945.3 L1532.0,945.3 L1534.0,945.2 L1536.0,945.2 L1538.0,945.2 L1540.0,945.2 L1541.0,945.2 L1542.0,945.1 L1544.0,945.1 L1546.0,945.1 L1548.0,945.2 L1550.0,945.2 L1552.0,945.2 L1554.0,945.1 L1556.0,945.2 L1558.0,945.2 L1558.7,945.2 L1560.0,945.3 L1562.0,945.2 L1564.0,945.3 L1566.0,945.2 L1568.0,945.2 L1570.0,945.2 L1572.0,945.2 L1574.0,945.1 L1576.0,945.2 L1578.0,945.2 L1580.0,945.2 L1582.0,945.2 L1584.0,945.2 L1586.0,945.2 L1588.0,945.2 L1590.0,945.2 L1592.0,945.1 L1594.0,945.2 L1595.0,945.1 L1596.0,944.5 L1596.6,944.1 L1598.0,944.2 L1600.0,944.1 L1602.0,944.1 L1604.0,944.0 L1606.0,943.9 L1608.0,944.0 L1610.0,943.9 L1612.0,943.9 L1614.0,943.9 L1616.0,943.8 L1618.0,943.8 L1620.0,943.7 L1622.0,943.7 L1624.0,943.7 L1626.0,943.6 L1628.0,943.6 L1630.0,943.5 L1632.0,943.5 L1634.0,943.5 L1636.0,943.4 L1638.0,943.3 L1640.0,943.3 L1642.0,943.3 L1644.0,943.2 L1646.0,943.2 L1648.0,943.3 L1650.0,943.2 L1652.0,943.1 L1654.0,943.0 L1656.0,943.0 L1658.0,943.0 L1660.0,943.1 L1661.9,943.0 L1662.0,943.1 L1664.0,943.0 L1666.0,942.9 L1668.0,943.0 L1668.4,942.9 L1670.0,942.9 L1672.0,942.7 L1674.0,942.6 L1676.0,942.5 L1678.0,942.5 L1680.0,942.5 L1682.0,942.4 L1684.0,942.5 L1686.0,942.3 L1688.0,942.4 L1690.0,942.4 L1692.0,942.4 L1694.0,942.4 L1694.7,942.3 L1696.0,942.3 L1698.0,942.4 L1700.0,942.3 L1702.0,942.2 L1704.0,942.1 L1706.0,942.0 L1708.0,942.2 L1710.0,942.0 L1712.0,942.0 L1714.0,942.0 L1716.0,941.9 L1718.0,942.0 L1720.0,941.9 L1722.0,941.9 L1724.0,941.8 L1726.0,941.7 L1728.0,941.6 L1730.0,941.7 L1732.0,941.6 L1734.0,941.7 L1736.0,941.5 L1738.0,941.4 L1738.4,941.5 L1740.0,941.6 L1742.0,941.5 L1744.0,941.4 L1746.0,941.4 L1748.0,941.3 L1750.0,941.3 L1752.0,941.2 L1754.0,941.3 L1756.0,941.1 L1758.0,941.1 L1760.0,941.1 L1762.0,940.9 L1764.0,940.9 L1766.0,941.0 L1768.0,941.0 L1770.0,941.0 L1772.0,940.9 L1774.0,940.9 L1776.0,940.8 L1778.0,940.8 L1780.0,940.7 L1782.0,940.7 L1784.0,940.8 L1786.0,940.7 L1788.0,940.8 L1790.0,940.6 L1792.0,940.6 L1794.0,940.4 L1796.0,940.5 L1798.0,940.5 L1800.0,940.4 L1802.0,940.5 L1804.0,940.4 L1806.0,940.3 L1808.0,940.2 L1810.0,940.2 L1812.0,940.1 L1814.0,940.0 L1816.0,940.1 L1818.0,939.9 L1819.3,939.9 L1820.0,939.9 L1822.0,939.9 L1824.0,939.9 L1826.0,939.9 L1828.0,939.8 L1830.0,939.8 L1832.0,939.7 L1834.0,939.7 L1836.0,939.7 L1838.0,939.5 L1839.0,939.6 L1840.0,939.5 L1842.0,939.6 L1844.0,939.6 L1846.0,939.6 L1848.0,939.3 L1850.0,939.3 L1852.0,939.3 L1854.0,939.3 L1856.0,939.2 L1856.5,939.3 L1858.0,939.0 L1858.5,939.2 L1858.7,939.2 L1860.0,935.0 L1860.6,930.1 L1860.9,930.1 L1861.2,930.1 L1861.8,930.3 L1862.0,930.3 L1863.0,930.7 L1864.0,931.1 L1866.0,931.8 L1868.0,932.6 L1868.5,932.6 L1869.9,932.9 L1870.0,933.0 L1871.7,933.6 L1871.8,933.6 L1872.0,933.7 L1872.4,933.4 L1874.0,932.4 L1876.0,930.8 L1876.2,930.6 L1878.0,929.4 L1880.0,928.2 L1882.0,926.6 L1884.0,925.3 L1886.0,924.1 L1887.0,923.6 L1888.0,922.9 L1890.0,921.6 L1891.0,921.0 L1891.5,920.4 L1892.0,921.1 L1893.5,921.3 L1894.0,921.1 L1894.7,921.0 L1896.0,921.2 L1898.0,921.4 L1900.0,921.4 L1902.0,921.4 L1903.6,921.9 L1904.0,921.9 L1906.0,922.3 L1908.0,922.2 L1910.0,922.3 L1912.0,922.8 L1914.0,922.5 L1914.6,922.5 L1916.0,922.3 L1917.2,921.7 L1918.0,921.5 L1919.6,921.2 L1920.0,921.2 L1922.0,920.9 L1924.0,920.5 L1926.0,920.2 L1928.0,920.0 L1929.5,919.8 L1930.0,919.8 L1930.7,919.8 L1930.8,919.8 L1932.0,919.3 L1934.0,918.9 L1936.0,918.9 L1938.0,918.7 L1940.0,918.5 L1941.0,918.2 L1942.0,918.3 L1943.2,918.4 L1944.0,918.3 L1946.0,917.9 L1948.0,917.8 L1950.0,917.5 L1952.0,917.4 L1953.0,917.1 L1953.1,916.7 L1954.0,916.2 L1955.6,915.0 L1956.0,915.0 L1958.0,913.3 L1960.0,912.2 L1961.5,910.7 L1961.8,910.6 L1962.0,910.6 L1964.0,909.3 L1965.0,908.4 L1965.5,907.9 L1966.0,908.1 L1966.8,907.9 L1968.0,907.6 L1970.0,906.9 L1972.0,906.5 L1974.0,906.1 L1976.0,906.0 L1978.0,905.7 L1978.5,905.5 L1980.0,905.0 L1982.0,904.0 L1984.0,902.6 L1986.0,901.5 L1988.0,900.2 L1990.0,898.7 L1992.0,898.1 L1994.0,897.0 L1996.0,895.7 L1998.0,894.7 L2000.0,893.4 L2002.0,892.5 L2002.3,892.1 L2002.5,892.1 L2003.3,891.5 L2004.0,890.7 L2005.0,889.9 L2006.0,889.3 L2008.0,887.6 L2010.0,885.9 L2012.0,884.1 L2014.0,882.9 L2014.2,882.6 L2016.0,881.1 L2017.6,879.9 L2018.0,878.8 L2020.0,877.0 L2022.0,875.3 L2024.0,873.7 L2025.0,872.9 L2026.0,872.7 L2028.0,871.1 L2030.0,870.4 L2032.0,868.9 L2032.3,868.5 L2034.0,867.3 L2036.0,866.4 L2038.0,866.0 L2038.5,865.6 L2040.0,864.5 L2042.0,863.8 L2043.0,862.4 L2044.0,862.9 L2044.7,862.7 L2046.0,861.8 L2048.0,860.0 L2050.0,858.5 L2052.0,856.8 L2054.0,855.4 L2056.0,853.3 L2056.5,853.9 L2057.0,853.6 L2058.0,853.2 L2060.0,851.4 L2062.0,850.4 L2064.0,849.2 L2065.5,848.3 L2066.0,844.8 L2066.6,839.6 L2067.0,836.3 L2067.4,832.8 L2068.0,828.4 L2068.5,825.1 L2068.8,822.2 L2070.0,821.8 L2072.0,819.4 L2074.0,818.8 L2074.4,818.4 L2076.0,816.5 L2076.7,815.1 L2077.0,815.4 L2078.0,814.9 L2080.0,814.6 L2082.0,811.2 L2084.0,809.6 L2085.7,808.5 L2086.0,808.4 L2087.5,807.6 L2088.0,806.8 L2090.0,805.2 L2090.2,804.7 L2090.7,805.0 L2092.0,806.8 L2092.4,807.1 L2094.0,807.0 L2096.0,807.8 L2098.0,809.5 L2100.0,810.1 L2102.0,813.0 L2104.0,813.7 L2104.4,812.9 L2105.9,815.2 L2106.0,814.2 L2108.0,815.3 L2108.2,814.3 L2110.0,812.6 L2112.0,809.7 L2112.7,809.4 L2114.0,808.8 L2116.0,807.1 L2116.6,807.3 L2118.0,805.7 L2120.0,803.0 L2122.0,801.8 L2124.0,800.1 L2126.0,797.4 L2126.2,797.1 L2126.8,797.7 L2128.0,796.5 L2128.2,796.8 L2130.0,795.5 L2132.0,794.9 L2132.9,796.3 L2134.0,794.4 L2136.0,794.3 L2137.0,794.8 L2137.4,794.3 L2138.0,794.0 L2140.0,794.0 L2142.0,793.1 L2144.0,793.4 L2145.8,792.9 L2146.0,792.3 L2148.0,792.3 L2148.6,792.7 L2150.0,791.4 L2151.6,791.6 L2152.0,791.3 L2154.0,791.2 L2156.0,790.8 L2156.9,789.0 L2157.1,790.8 L2158.0,790.5 L2159.5,790.7 L2159.5,837.0 L2158.0,836.3 L2157.1,836.6 L2156.9,834.8 L2156.0,836.1 L2154.0,836.2 L2152.0,836.0 L2151.6,836.0 L2150.0,836.4 L2148.6,836.7 L2148.0,836.5 L2146.0,836.2 L2145.8,836.4 L2144.0,836.6 L2142.0,836.8 L2140.0,837.3 L2138.0,837.5 L2137.4,836.6 L2137.0,837.3 L2136.0,836.6 L2134.0,836.7 L2132.9,837.7 L2132.0,837.9 L2130.0,838.6 L2128.2,840.7 L2128.0,840.0 L2126.8,841.0 L2126.2,841.3 L2126.0,841.1 L2124.0,842.3 L2122.0,843.4 L2120.0,843.8 L2118.0,845.4 L2116.6,846.3 L2116.0,845.9 L2114.0,846.2 L2112.7,846.3 L2112.0,845.8 L2110.0,846.3 L2108.2,846.0 L2108.0,846.6 L2106.0,846.8 L2105.9,847.3 L2104.4,845.9 L2104.0,846.6 L2102.0,845.8 L2100.0,844.5 L2098.0,844.1 L2096.0,843.5 L2094.0,843.3 L2092.4,843.6 L2092.0,843.4 L2090.7,842.5 L2090.2,842.1 L2090.0,842.7 L2088.0,842.8 L2087.5,843.5 L2086.0,843.8 L2085.7,843.7 L2084.0,844.3 L2082.0,845.3 L2080.0,846.9 L2078.0,846.3 L2077.0,845.7 L2076.7,845.8 L2076.0,846.0 L2074.4,847.0 L2074.0,847.3 L2072.0,847.0 L2070.0,847.7 L2068.8,847.8 L2068.5,848.4 L2068.0,853.7 L2067.4,860.0 L2067.0,864.8 L2066.6,869.4 L2066.0,870.4 L2065.5,870.1 L2064.0,871.0 L2062.0,872.0 L2060.0,873.1 L2058.0,874.7 L2057.0,875.1 L2056.5,875.6 L2056.0,875.5 L2054.0,877.2 L2052.0,878.5 L2050.0,880.3 L2048.0,881.4 L2046.0,883.0 L2044.7,883.8 L2044.0,884.2 L2043.0,884.4 L2042.0,885.4 L2040.0,885.9 L2038.5,887.1 L2038.0,887.1 L2036.0,887.6 L2034.0,888.4 L2032.3,889.1 L2032.0,889.8 L2030.0,891.1 L2028.0,892.1 L2026.0,893.4 L2025.0,893.5 L2024.0,894.1 L2022.0,895.0 L2020.0,895.6 L2018.0,896.7 L2017.6,897.6 L2016.0,898.7 L2014.2,899.6 L2014.0,899.7 L2012.0,900.0 L2010.0,901.0 L2008.0,902.3 L2006.0,903.2 L2005.0,903.7 L2004.0,904.0 L2003.3,904.6 L2002.5,905.1 L2002.3,905.1 L2002.0,905.2 L2000.0,905.7 L1998.0,906.6 L1996.0,907.4 L1994.0,908.0 L1992.0,908.7 L1990.0,908.9 L1988.0,909.8 L1986.0,910.7 L1984.0,911.3 L1982.0,912.2 L1980.0,912.8 L1978.5,913.4 L1978.0,913.7 L1976.0,914.0 L1974.0,914.2 L1972.0,914.7 L1970.0,915.1 L1968.0,915.9 L1966.8,916.3 L1966.0,916.5 L1965.5,916.5 L1965.0,916.6 L1964.0,917.1 L1962.0,917.5 L1961.8,917.4 L1961.5,917.4 L1960.0,918.0 L1958.0,918.2 L1956.0,919.0 L1955.6,918.8 L1954.0,919.2 L1953.1,919.2 L1953.0,919.6 L1952.0,919.9 L1950.0,920.2 L1948.0,920.6 L1946.0,920.9 L1944.0,921.4 L1943.2,921.6 L1942.0,921.5 L1941.0,921.5 L1940.0,921.8 L1938.0,922.2 L1936.0,922.5 L1934.0,922.7 L1932.0,923.1 L1930.8,923.8 L1930.7,923.8 L1930.0,923.8 L1929.5,923.7 L1928.0,924.0 L1926.0,924.3 L1924.0,924.7 L1922.0,925.1 L1920.0,925.4 L1919.6,925.4 L1918.0,925.7 L1917.2,925.9 L1916.0,926.5 L1914.6,926.7 L1914.0,926.7 L1912.0,927.1 L1910.0,926.5 L1908.0,926.2 L1906.0,926.1 L1904.0,925.5 L1903.6,925.4 L1902.0,924.8 L1900.0,924.7 L1898.0,924.5 L1896.0,924.2 L1894.7,923.8 L1894.0,924.0 L1893.5,924.0 L1892.0,923.7 L1891.5,923.0 L1891.0,923.5 L1890.0,924.1 L1888.0,925.4 L1887.0,926.0 L1886.0,926.5 L1884.0,927.6 L1882.0,929.0 L1880.0,930.5 L1878.0,931.7 L1876.2,932.8 L1876.0,933.0 L1874.0,934.5 L1872.4,935.5 L1872.0,935.7 L1871.8,935.9 L1871.7,935.8 L1870.0,935.2 L1869.9,935.1 L1868.5,934.7 L1868.0,934.8 L1866.0,933.9 L1864.0,933.1 L1863.0,932.7 L1862.0,932.3 L1861.8,932.3 L1861.2,932.0 L1860.9,931.9 L1860.6,933.0 L1860.0,935.0 L1858.7,939.2 L1858.5,939.2 L1858.0,939.0 L1856.5,939.3 L1856.0,939.2 L1854.0,939.3 L1852.0,939.3 L1850.0,939.3 L1848.0,939.3 L1846.0,939.6 L1844.0,939.6 L1842.0,939.6 L1840.0,939.5 L1839.0,939.6 L1838.0,939.5 L1836.0,939.7 L1834.0,939.7 L1832.0,939.7 L1830.0,939.8 L1828.0,939.8 L1826.0,939.9 L1824.0,939.9 L1822.0,939.9 L1820.0,939.9 L1819.3,939.9 L1818.0,939.9 L1816.0,940.1 L1814.0,940.0 L1812.0,940.1 L1810.0,940.2 L1808.0,940.2 L1806.0,940.3 L1804.0,940.4 L1802.0,940.5 L1800.0,940.4 L1798.0,940.5 L1796.0,940.5 L1794.0,940.4 L1792.0,940.6 L1790.0,940.6 L1788.0,940.8 L1786.0,940.7 L1784.0,940.8 L1782.0,940.7 L1780.0,940.7 L1778.0,940.8 L1776.0,940.8 L1774.0,940.9 L1772.0,940.9 L1770.0,941.0 L1768.0,941.0 L1766.0,941.0 L1764.0,940.9 L1762.0,940.9 L1760.0,941.1 L1758.0,941.1 L1756.0,941.1 L1754.0,941.3 L1752.0,941.2 L1750.0,941.3 L1748.0,941.3 L1746.0,941.4 L1744.0,941.4 L1742.0,941.5 L1740.0,941.6 L1738.4,941.5 L1738.0,941.4 L1736.0,941.5 L1734.0,941.7 L1732.0,941.6 L1730.0,941.7 L1728.0,941.6 L1726.0,941.7 L1724.0,941.8 L1722.0,941.9 L1720.0,941.9 L1718.0,942.0 L1716.0,941.9 L1714.0,942.0 L1712.0,942.0 L1710.0,942.0 L1708.0,942.2 L1706.0,942.0 L1704.0,942.1 L1702.0,942.2 L1700.0,942.3 L1698.0,942.4 L1696.0,942.3 L1694.7,942.3 L1694.0,942.4 L1692.0,942.4 L1690.0,942.4 L1688.0,942.4 L1686.0,942.3 L1684.0,942.5 L1682.0,942.4 L1680.0,942.5 L1678.0,942.5 L1676.0,942.5 L1674.0,942.6 L1672.0,942.7 L1670.0,942.9 L1668.4,942.9 L1668.0,943.0 L1666.0,942.9 L1664.0,943.0 L1662.0,943.1 L1661.9,943.0 L1660.0,943.1 L1658.0,943.0 L1656.0,943.0 L1654.0,943.0 L1652.0,943.1 L1650.0,943.2 L1648.0,943.3 L1646.0,943.2 L1644.0,943.2 L1642.0,943.3 L1640.0,943.3 L1638.0,943.3 L1636.0,943.4 L1634.0,943.5 L1632.0,943.5 L1630.0,943.5 L1628.0,943.6 L1626.0,943.6 L1624.0,943.7 L1622.0,943.7 L1620.0,943.7 L1618.0,943.8 L1616.0,943.8 L1614.0,943.9 L1612.0,943.9 L1610.0,943.9 L1608.0,944.0 L1606.0,943.9 L1604.0,944.0 L1602.0,944.1 L1600.0,944.1 L1598.0,944.2 L1596.6,944.1 L1596.0,944.5 L1595.0,945.1 L1594.0,945.2 L1592.0,945.1 L1590.0,945.2 L1588.0,945.2 L1586.0,945.2 L1584.0,945.2 L1582.0,945.2 L1580.0,945.2 L1578.0,945.2 L1576.0,945.2 L1574.0,945.1 L1572.0,945.2 L1570.0,945.2 L1568.0,945.2 L1566.0,945.2 L1564.0,945.3 L1562.0,945.2 L1560.0,945.3 L1558.7,945.2 L1558.0,945.2 L1556.0,945.2 L1554.0,945.1 L1552.0,945.2 L1550.0,945.2 L1548.0,945.2 L1546.0,945.1 L1544.0,945.1 L1542.0,945.1 L1541.0,945.2 L1540.0,945.2 L1538.0,945.2 L1536.0,945.2 L1534.0,945.2 L1532.0,945.3 L1530.0,945.3 L1529.5,945.3 L1528.0,945.2 L1526.0,945.2 L1524.0,945.2 L1522.0,945.3 L1520.0,945.3 L1518.0,945.2 L1516.0,945.3 L1514.0,945.3 L1512.0,945.2 L1510.0,945.2 L1508.0,945.2 L1506.0,945.3 L1504.0,945.2 L1502.0,945.2 L1500.0,945.2 L1498.0,945.2 L1496.0,945.3 L1494.0,945.3 L1492.0,945.2 L1490.0,945.2 L1488.0,945.2 L1486.0,945.2 L1484.0,945.2 L1482.0,945.2 L1480.0,945.2 L1478.0,945.2 L1476.0,945.2 L1474.0,945.2 L1472.0,945.2 L1471.2,945.2 L1470.0,945.2 L1468.0,945.2 L1466.0,945.3 L1464.0,945.2 L1462.0,945.3 L1460.0,945.2 L1458.0,945.2 L1456.0,945.2 L1454.0,945.2 L1452.0,945.2 L1450.0,945.2 L1448.0,945.2 L1446.0,945.2 L1444.0,945.2 L1442.0,945.1 L1440.0,945.2 L1438.0,945.2 L1436.0,945.1 L1434.0,945.2 L1432.0,945.2 L1430.4,945.2 L1430.0,945.2 L1428.0,945.1 L1426.0,945.2 L1424.0,945.2 L1422.0,945.2 L1420.0,945.2 L1418.0,945.2 L1416.0,945.1 L1414.0,945.1 L1412.0,945.2 L1410.0,945.2 L1408.0,945.1 L1406.0,945.2 L1404.0,945.2 L1402.0,945.2 L1400.0,945.2 L1398.3,945.2 L1398.0,945.2 L1396.0,945.2 L1394.0,945.2 L1392.0,945.3 L1390.0,945.3 L1388.0,945.2 L1386.0,945.2 L1384.0,945.2 L1382.0,945.2 L1380.0,945.2 L1378.0,945.2 L1376.0,945.2 L1375.0,945.2 L1374.0,945.2 L1372.0,945.2 L1370.0,945.2 L1368.0,945.2 L1366.0,945.2 L1364.0,945.2 L1362.0,945.1 L1360.0,945.1 L1358.0,945.1 L1356.0,945.1 L1354.0,945.2 L1352.0,945.2 L1350.0,945.2 L1348.0,945.1 L1346.0,945.1 L1344.0,945.2 L1342.0,945.2 L1340.0,945.2 L1338.0,945.2 L1336.0,945.2 L1334.5,945.2 L1334.0,945.1 L1333.0,945.1 L1332.0,945.1 L1330.0,945.2 L1328.0,945.2 L1326.0,945.2 L1324.0,945.2 L1322.0,945.2 L1320.0,945.3 L1318.0,945.3 L1316.0,945.2 L1314.0,945.2 L1312.5,945.3 L1312.0,945.2 L1310.0,945.3 L1308.0,945.2 L1306.0,945.3 L1304.0,945.3 L1302.0,945.2 L1300.0,945.2 L1270.5,945.2 L1207.6,945.2 L1207.0,942.9 L1125.0,942.9 L1107.5,942.9 L1076.5,942.9 L1076.0,946.0 L1036.4,946.0 L1036.0,946.0 L1001.5,946.0 L1001.4,946.0 L943.3,946.0 L943.0,944.8 L875.7,944.8 L875.5,948.7 L208.5,948.9 L190.8,950.0 Z" fill="url(#g_pc)"/>
<path d="M190.8,950.0 L208.5,948.9 L875.5,948.7 L875.7,944.8 L943.0,944.8 L943.3,946.0 L1001.4,946.0 L1001.5,939.9 L1036.0,939.9 L1036.4,936.4 L1076.0,934.8 L1076.5,934.0 L1107.5,933.0 L1125.0,927.8 L1207.0,929.0 L1207.6,929.0 L1270.5,931.7 L1300.0,931.1 L1302.0,931.1 L1304.0,930.9 L1306.0,930.8 L1308.0,930.7 L1310.0,930.9 L1312.0,930.8 L1312.5,930.6 L1314.0,930.5 L1316.0,929.9 L1318.0,930.5 L1320.0,930.7 L1322.0,930.7 L1324.0,930.6 L1326.0,930.5 L1328.0,930.3 L1330.0,930.0 L1332.0,930.2 L1333.0,930.1 L1334.0,929.9 L1334.5,929.9 L1336.0,929.7 L1338.0,929.6 L1340.0,929.9 L1342.0,929.9 L1344.0,929.9 L1346.0,930.2 L1348.0,930.2 L1350.0,930.1 L1352.0,930.2 L1354.0,930.3 L1356.0,929.9 L1358.0,930.1 L1360.0,930.2 L1362.0,930.5 L1364.0,930.5 L1366.0,930.7 L1368.0,930.8 L1370.0,930.9 L1372.0,931.1 L1374.0,931.1 L1375.0,931.2 L1376.0,930.9 L1378.0,931.0 L1380.0,930.7 L1382.0,930.7 L1384.0,930.6 L1386.0,930.7 L1388.0,930.7 L1390.0,930.6 L1392.0,930.6 L1394.0,930.5 L1396.0,930.5 L1398.0,930.9 L1398.3,930.6 L1400.0,930.7 L1402.0,930.8 L1404.0,930.6 L1406.0,930.9 L1408.0,930.8 L1410.0,930.6 L1412.0,930.6 L1414.0,930.5 L1416.0,930.7 L1418.0,930.7 L1420.0,930.9 L1422.0,930.9 L1424.0,930.7 L1426.0,930.8 L1428.0,930.7 L1430.0,930.8 L1430.4,930.9 L1432.0,931.1 L1434.0,931.1 L1436.0,931.0 L1438.0,931.1 L1440.0,931.0 L1442.0,930.8 L1444.0,930.8 L1446.0,930.8 L1448.0,931.0 L1450.0,930.8 L1452.0,930.8 L1454.0,930.8 L1456.0,931.0 L1458.0,930.9 L1460.0,930.7 L1462.0,930.8 L1464.0,930.8 L1466.0,931.0 L1468.0,931.0 L1470.0,931.1 L1471.2,931.0 L1472.0,931.0 L1474.0,931.0 L1476.0,931.2 L1478.0,931.4 L1480.0,931.3 L1482.0,930.9 L1484.0,931.3 L1486.0,931.2 L1488.0,931.0 L1490.0,931.3 L1492.0,931.5 L1494.0,931.5 L1496.0,931.5 L1498.0,931.6 L1500.0,931.3 L1502.0,931.3 L1504.0,931.4 L1506.0,931.7 L1508.0,931.4 L1510.0,931.3 L1512.0,931.3 L1514.0,931.3 L1516.0,931.6 L1518.0,931.7 L1520.0,931.6 L1522.0,931.6 L1524.0,931.6 L1526.0,931.7 L1528.0,931.6 L1529.5,931.7 L1530.0,931.6 L1532.0,931.9 L1534.0,931.8 L1536.0,931.7 L1538.0,931.6 L1540.0,931.9 L1541.0,931.9 L1542.0,931.8 L1544.0,931.7 L1546.0,931.7 L1548.0,931.6 L1550.0,931.5 L1552.0,931.4 L1554.0,931.4 L1556.0,931.2 L1558.0,931.1 L1558.7,931.2 L1560.0,931.4 L1562.0,931.1 L1564.0,931.0 L1566.0,930.7 L1568.0,930.9 L1570.0,931.0 L1572.0,931.0 L1574.0,930.9 L1576.0,931.1 L1578.0,930.8 L1580.0,931.0 L1582.0,931.3 L1584.0,931.0 L1586.0,930.9 L1588.0,930.7 L1590.0,930.7 L1592.0,930.7 L1594.0,930.9 L1595.0,930.8 L1596.0,930.2 L1596.6,929.5 L1598.0,929.0 L1600.0,929.2 L1602.0,929.1 L1604.0,929.2 L1606.0,929.5 L1608.0,929.8 L1610.0,929.9 L1612.0,929.9 L1614.0,929.8 L1616.0,929.9 L1618.0,930.0 L1620.0,930.0 L1622.0,930.0 L1624.0,929.9 L1626.0,930.1 L1628.0,929.9 L1630.0,930.1 L1632.0,930.2 L1634.0,930.0 L1636.0,930.0 L1638.0,930.2 L1640.0,930.5 L1642.0,930.4 L1644.0,930.4 L1646.0,930.3 L1648.0,930.2 L1650.0,930.3 L1652.0,930.0 L1654.0,929.9 L1656.0,930.0 L1658.0,930.1 L1660.0,930.1 L1661.9,929.9 L1662.0,930.0 L1664.0,930.1 L1666.0,930.1 L1668.0,930.0 L1668.4,929.9 L1670.0,930.0 L1672.0,929.9 L1674.0,929.7 L1676.0,929.5 L1678.0,929.7 L1680.0,929.6 L1682.0,929.7 L1684.0,929.8 L1686.0,929.6 L1688.0,929.5 L1690.0,929.4 L1692.0,929.3 L1694.0,929.3 L1694.7,929.2 L1696.0,929.3 L1698.0,929.7 L1700.0,929.8 L1702.0,929.6 L1704.0,929.1 L1706.0,929.1 L1708.0,929.4 L1710.0,929.1 L1712.0,929.1 L1714.0,929.2 L1716.0,929.1 L1718.0,929.1 L1720.0,929.1 L1722.0,929.2 L1724.0,928.8 L1726.0,929.0 L1728.0,928.9 L1730.0,928.9 L1732.0,928.9 L1734.0,928.9 L1736.0,928.5 L1738.0,928.4 L1738.4,928.6 L1740.0,928.6 L1742.0,928.4 L1744.0,928.3 L1746.0,928.2 L1748.0,928.2 L1750.0,928.0 L1752.0,927.8 L1754.0,928.0 L1756.0,927.6 L1758.0,927.1 L1760.0,927.1 L1762.0,927.0 L1764.0,926.8 L1766.0,926.8 L1768.0,926.8 L1770.0,926.5 L1772.0,926.3 L1774.0,926.0 L1776.0,926.1 L1778.0,926.2 L1780.0,926.0 L1782.0,925.9 L1784.0,926.1 L1786.0,925.8 L1788.0,926.0 L1790.0,925.6 L1792.0,925.6 L1794.0,925.2 L1796.0,925.1 L1798.0,925.1 L1800.0,924.8 L1802.0,924.7 L1804.0,924.6 L1806.0,924.4 L1808.0,924.4 L1810.0,923.9 L1812.0,923.6 L1814.0,923.6 L1816.0,923.4 L1818.0,923.5 L1819.3,923.5 L1820.0,923.5 L1822.0,923.3 L1824.0,923.2 L1826.0,923.3 L1828.0,923.2 L1830.0,923.2 L1832.0,922.7 L1834.0,922.5 L1836.0,922.7 L1838.0,922.0 L1839.0,922.2 L1840.0,922.2 L1842.0,922.1 L1844.0,922.1 L1846.0,922.0 L1848.0,921.6 L1850.0,921.3 L1852.0,921.1 L1854.0,921.3 L1856.0,921.1 L1856.5,921.3 L1858.0,921.0 L1858.5,921.1 L1858.7,921.1 L1860.0,918.0 L1860.6,916.9 L1860.9,916.0 L1861.2,915.2 L1861.8,913.9 L1862.0,914.0 L1863.0,914.1 L1864.0,914.5 L1866.0,914.9 L1868.0,915.4 L1868.5,915.7 L1869.9,915.4 L1870.0,915.6 L1871.7,919.1 L1871.8,919.3 L1872.0,919.1 L1872.4,918.6 L1874.0,917.2 L1876.0,915.4 L1876.2,915.2 L1878.0,913.5 L1880.0,912.0 L1882.0,909.9 L1884.0,908.5 L1886.0,906.9 L1887.0,906.3 L1888.0,905.6 L1890.0,903.6 L1891.0,903.1 L1891.5,903.1 L1892.0,904.2 L1893.5,905.7 L1894.0,906.0 L1894.7,906.3 L1896.0,906.3 L1898.0,906.2 L1900.0,905.8 L1902.0,905.5 L1903.6,905.9 L1904.0,906.0 L1906.0,906.1 L1908.0,905.8 L1910.0,905.6 L1912.0,906.0 L1914.0,902.8 L1914.6,901.7 L1916.0,901.4 L1917.2,900.8 L1918.0,900.4 L1919.6,900.1 L1920.0,900.4 L1922.0,899.9 L1924.0,899.1 L1926.0,899.1 L1928.0,899.1 L1929.5,898.7 L1930.0,898.9 L1930.7,898.5 L1930.8,898.5 L1932.0,898.2 L1934.0,897.8 L1936.0,898.1 L1938.0,897.7 L1940.0,897.3 L1941.0,896.9 L1942.0,897.0 L1943.2,897.3 L1944.0,896.5 L1946.0,894.9 L1948.0,893.9 L1950.0,892.0 L1952.0,890.9 L1953.0,890.1 L1953.1,890.0 L1954.0,889.7 L1955.6,889.2 L1956.0,889.2 L1958.0,887.7 L1960.0,887.0 L1961.5,885.7 L1961.8,885.2 L1962.0,885.3 L1964.0,884.2 L1965.0,883.3 L1965.5,883.2 L1966.0,882.9 L1966.8,882.5 L1968.0,882.4 L1970.0,881.8 L1972.0,881.1 L1974.0,881.2 L1976.0,881.0 L1978.0,880.9 L1978.5,880.8 L1980.0,880.6 L1982.0,879.8 L1984.0,877.7 L1986.0,876.2 L1988.0,875.1 L1990.0,873.6 L1992.0,872.9 L1994.0,871.5 L1996.0,869.4 L1998.0,868.5 L2000.0,867.4 L2002.0,866.1 L2002.3,865.9 L2002.5,866.2 L2003.3,865.1 L2004.0,864.3 L2005.0,863.5 L2006.0,862.7 L2008.0,861.1 L2010.0,860.3 L2012.0,858.5 L2014.0,857.1 L2014.2,856.7 L2016.0,855.8 L2017.6,855.2 L2018.0,854.2 L2020.0,852.2 L2022.0,850.7 L2024.0,849.0 L2025.0,848.2 L2026.0,847.8 L2028.0,845.5 L2030.0,843.7 L2032.0,841.0 L2032.3,840.1 L2034.0,838.4 L2036.0,836.4 L2038.0,835.0 L2038.5,834.8 L2040.0,833.1 L2042.0,830.7 L2043.0,829.0 L2044.0,828.9 L2044.7,828.2 L2046.0,826.7 L2048.0,824.0 L2050.0,822.2 L2052.0,819.8 L2054.0,817.5 L2056.0,814.6 L2056.5,815.3 L2057.0,815.7 L2058.0,815.0 L2060.0,813.6 L2062.0,813.0 L2064.0,812.8 L2065.5,813.2 L2066.0,813.2 L2066.6,811.5 L2067.0,809.5 L2067.4,807.4 L2068.0,805.4 L2068.5,803.8 L2068.8,801.5 L2070.0,796.8 L2072.0,787.9 L2074.0,780.3 L2074.4,778.6 L2076.0,775.7 L2076.7,774.2 L2077.0,774.3 L2078.0,772.9 L2080.0,771.5 L2082.0,767.6 L2084.0,764.8 L2085.7,762.7 L2086.0,762.2 L2087.5,759.9 L2088.0,759.1 L2090.0,756.6 L2090.2,755.6 L2090.7,754.9 L2092.0,757.3 L2092.4,757.3 L2094.0,757.2 L2096.0,757.8 L2098.0,760.5 L2100.0,761.7 L2102.0,764.8 L2104.0,765.7 L2104.4,763.6 L2105.9,762.8 L2106.0,762.5 L2108.0,759.4 L2108.2,758.9 L2110.0,757.2 L2112.0,752.7 L2112.7,753.4 L2114.0,752.2 L2116.0,750.0 L2116.6,749.7 L2118.0,748.1 L2120.0,745.6 L2122.0,743.7 L2124.0,742.5 L2126.0,739.9 L2126.2,739.6 L2126.8,740.1 L2128.0,737.9 L2128.2,737.3 L2130.0,735.3 L2132.0,734.9 L2132.9,736.8 L2134.0,735.4 L2136.0,735.5 L2137.0,736.0 L2137.4,735.5 L2138.0,734.8 L2140.0,733.8 L2142.0,731.0 L2144.0,731.4 L2145.8,730.0 L2146.0,728.6 L2148.0,728.0 L2148.6,728.2 L2150.0,723.6 L2151.6,720.8 L2152.0,719.9 L2154.0,712.9 L2156.0,705.4 L2156.9,702.3 L2157.1,702.1 L2158.0,707.3 L2159.5,712.9 L2159.5,790.7 L2158.0,790.5 L2157.1,790.8 L2156.9,789.0 L2156.0,790.8 L2154.0,791.2 L2152.0,791.3 L2151.6,791.6 L2150.0,791.4 L2148.6,792.7 L2148.0,792.3 L2146.0,792.3 L2145.8,792.9 L2144.0,793.4 L2142.0,793.1 L2140.0,794.0 L2138.0,794.0 L2137.4,794.3 L2137.0,794.8 L2136.0,794.3 L2134.0,794.4 L2132.9,796.3 L2132.0,794.9 L2130.0,795.5 L2128.2,796.8 L2128.0,796.5 L2126.8,797.7 L2126.2,797.1 L2126.0,797.4 L2124.0,800.1 L2122.0,801.8 L2120.0,803.0 L2118.0,805.7 L2116.6,807.3 L2116.0,807.1 L2114.0,808.8 L2112.7,809.4 L2112.0,809.7 L2110.0,812.6 L2108.2,814.3 L2108.0,815.3 L2106.0,814.2 L2105.9,815.2 L2104.4,812.9 L2104.0,813.7 L2102.0,813.0 L2100.0,810.1 L2098.0,809.5 L2096.0,807.8 L2094.0,807.0 L2092.4,807.1 L2092.0,806.8 L2090.7,805.0 L2090.2,804.7 L2090.0,805.2 L2088.0,806.8 L2087.5,807.6 L2086.0,808.4 L2085.7,808.5 L2084.0,809.6 L2082.0,811.2 L2080.0,814.6 L2078.0,814.9 L2077.0,815.4 L2076.7,815.1 L2076.0,816.5 L2074.4,818.4 L2074.0,818.8 L2072.0,819.4 L2070.0,821.8 L2068.8,822.2 L2068.5,825.1 L2068.0,828.4 L2067.4,832.8 L2067.0,836.3 L2066.6,839.6 L2066.0,844.8 L2065.5,848.3 L2064.0,849.2 L2062.0,850.4 L2060.0,851.4 L2058.0,853.2 L2057.0,853.6 L2056.5,853.9 L2056.0,853.3 L2054.0,855.4 L2052.0,856.8 L2050.0,858.5 L2048.0,860.0 L2046.0,861.8 L2044.7,862.7 L2044.0,862.9 L2043.0,862.4 L2042.0,863.8 L2040.0,864.5 L2038.5,865.6 L2038.0,866.0 L2036.0,866.4 L2034.0,867.3 L2032.3,868.5 L2032.0,868.9 L2030.0,870.4 L2028.0,871.1 L2026.0,872.7 L2025.0,872.9 L2024.0,873.7 L2022.0,875.3 L2020.0,877.0 L2018.0,878.8 L2017.6,879.9 L2016.0,881.1 L2014.2,882.6 L2014.0,882.9 L2012.0,884.1 L2010.0,885.9 L2008.0,887.6 L2006.0,889.3 L2005.0,889.9 L2004.0,890.7 L2003.3,891.5 L2002.5,892.1 L2002.3,892.1 L2002.0,892.5 L2000.0,893.4 L1998.0,894.7 L1996.0,895.7 L1994.0,897.0 L1992.0,898.1 L1990.0,898.7 L1988.0,900.2 L1986.0,901.5 L1984.0,902.6 L1982.0,904.0 L1980.0,905.0 L1978.5,905.5 L1978.0,905.7 L1976.0,906.0 L1974.0,906.1 L1972.0,906.5 L1970.0,906.9 L1968.0,907.6 L1966.8,907.9 L1966.0,908.1 L1965.5,907.9 L1965.0,908.4 L1964.0,909.3 L1962.0,910.6 L1961.8,910.6 L1961.5,910.7 L1960.0,912.2 L1958.0,913.3 L1956.0,915.0 L1955.6,915.0 L1954.0,916.2 L1953.1,916.7 L1953.0,917.1 L1952.0,917.4 L1950.0,917.5 L1948.0,917.8 L1946.0,917.9 L1944.0,918.3 L1943.2,918.4 L1942.0,918.3 L1941.0,918.2 L1940.0,918.5 L1938.0,918.7 L1936.0,918.9 L1934.0,918.9 L1932.0,919.3 L1930.8,919.8 L1930.7,919.8 L1930.0,919.8 L1929.5,919.8 L1928.0,920.0 L1926.0,920.2 L1924.0,920.5 L1922.0,920.9 L1920.0,921.2 L1919.6,921.2 L1918.0,921.5 L1917.2,921.7 L1916.0,922.3 L1914.6,922.5 L1914.0,922.5 L1912.0,922.8 L1910.0,922.3 L1908.0,922.2 L1906.0,922.3 L1904.0,921.9 L1903.6,921.9 L1902.0,921.4 L1900.0,921.4 L1898.0,921.4 L1896.0,921.2 L1894.7,921.0 L1894.0,921.1 L1893.5,921.3 L1892.0,921.1 L1891.5,920.4 L1891.0,921.0 L1890.0,921.6 L1888.0,922.9 L1887.0,923.6 L1886.0,924.1 L1884.0,925.3 L1882.0,926.6 L1880.0,928.2 L1878.0,929.4 L1876.2,930.6 L1876.0,930.8 L1874.0,932.4 L1872.4,933.4 L1872.0,933.7 L1871.8,933.6 L1871.7,933.6 L1870.0,933.0 L1869.9,932.9 L1868.5,932.6 L1868.0,932.6 L1866.0,931.8 L1864.0,931.1 L1863.0,930.7 L1862.0,930.3 L1861.8,930.3 L1861.2,930.1 L1860.9,930.1 L1860.6,930.1 L1860.0,935.0 L1858.7,939.2 L1858.5,939.2 L1858.0,939.0 L1856.5,939.3 L1856.0,939.2 L1854.0,939.3 L1852.0,939.3 L1850.0,939.3 L1848.0,939.3 L1846.0,939.6 L1844.0,939.6 L1842.0,939.6 L1840.0,939.5 L1839.0,939.6 L1838.0,939.5 L1836.0,939.7 L1834.0,939.7 L1832.0,939.7 L1830.0,939.8 L1828.0,939.8 L1826.0,939.9 L1824.0,939.9 L1822.0,939.9 L1820.0,939.9 L1819.3,939.9 L1818.0,939.9 L1816.0,940.1 L1814.0,940.0 L1812.0,940.1 L1810.0,940.2 L1808.0,940.2 L1806.0,940.3 L1804.0,940.4 L1802.0,940.5 L1800.0,940.4 L1798.0,940.5 L1796.0,940.5 L1794.0,940.4 L1792.0,940.6 L1790.0,940.6 L1788.0,940.8 L1786.0,940.7 L1784.0,940.8 L1782.0,940.7 L1780.0,940.7 L1778.0,940.8 L1776.0,940.8 L1774.0,940.9 L1772.0,940.9 L1770.0,941.0 L1768.0,941.0 L1766.0,941.0 L1764.0,940.9 L1762.0,940.9 L1760.0,941.1 L1758.0,941.1 L1756.0,941.1 L1754.0,941.3 L1752.0,941.2 L1750.0,941.3 L1748.0,941.3 L1746.0,941.4 L1744.0,941.4 L1742.0,941.5 L1740.0,941.6 L1738.4,941.5 L1738.0,941.4 L1736.0,941.5 L1734.0,941.7 L1732.0,941.6 L1730.0,941.7 L1728.0,941.6 L1726.0,941.7 L1724.0,941.8 L1722.0,941.9 L1720.0,941.9 L1718.0,942.0 L1716.0,941.9 L1714.0,942.0 L1712.0,942.0 L1710.0,942.0 L1708.0,942.2 L1706.0,942.0 L1704.0,942.1 L1702.0,942.2 L1700.0,942.3 L1698.0,942.4 L1696.0,942.3 L1694.7,942.3 L1694.0,942.4 L1692.0,942.4 L1690.0,942.4 L1688.0,942.4 L1686.0,942.3 L1684.0,942.5 L1682.0,942.4 L1680.0,942.5 L1678.0,942.5 L1676.0,942.5 L1674.0,942.6 L1672.0,942.7 L1670.0,942.9 L1668.4,942.9 L1668.0,943.0 L1666.0,942.9 L1664.0,943.0 L1662.0,943.1 L1661.9,943.0 L1660.0,943.1 L1658.0,943.0 L1656.0,943.0 L1654.0,943.0 L1652.0,943.1 L1650.0,943.2 L1648.0,943.3 L1646.0,943.2 L1644.0,943.2 L1642.0,943.3 L1640.0,943.3 L1638.0,943.3 L1636.0,943.4 L1634.0,943.5 L1632.0,943.5 L1630.0,943.5 L1628.0,943.6 L1626.0,943.6 L1624.0,943.7 L1622.0,943.7 L1620.0,943.7 L1618.0,943.8 L1616.0,943.8 L1614.0,943.9 L1612.0,943.9 L1610.0,943.9 L1608.0,944.0 L1606.0,943.9 L1604.0,944.0 L1602.0,944.1 L1600.0,944.1 L1598.0,944.2 L1596.6,944.1 L1596.0,944.5 L1595.0,945.1 L1594.0,945.2 L1592.0,945.1 L1590.0,945.2 L1588.0,945.2 L1586.0,945.2 L1584.0,945.2 L1582.0,945.2 L1580.0,945.2 L1578.0,945.2 L1576.0,945.2 L1574.0,945.1 L1572.0,945.2 L1570.0,945.2 L1568.0,945.2 L1566.0,945.2 L1564.0,945.3 L1562.0,945.2 L1560.0,945.3 L1558.7,945.2 L1558.0,945.2 L1556.0,945.2 L1554.0,945.1 L1552.0,945.2 L1550.0,945.2 L1548.0,945.2 L1546.0,945.1 L1544.0,945.1 L1542.0,945.1 L1541.0,945.2 L1540.0,945.2 L1538.0,945.2 L1536.0,945.2 L1534.0,945.2 L1532.0,945.3 L1530.0,945.3 L1529.5,945.3 L1528.0,945.2 L1526.0,945.2 L1524.0,945.2 L1522.0,945.3 L1520.0,945.3 L1518.0,945.2 L1516.0,945.3 L1514.0,945.3 L1512.0,945.2 L1510.0,945.2 L1508.0,945.2 L1506.0,945.3 L1504.0,945.2 L1502.0,945.2 L1500.0,945.2 L1498.0,945.2 L1496.0,945.3 L1494.0,945.3 L1492.0,945.2 L1490.0,945.2 L1488.0,945.2 L1486.0,945.2 L1484.0,945.2 L1482.0,945.2 L1480.0,945.2 L1478.0,945.2 L1476.0,945.2 L1474.0,945.2 L1472.0,945.2 L1471.2,945.2 L1470.0,945.2 L1468.0,945.2 L1466.0,945.3 L1464.0,945.2 L1462.0,945.3 L1460.0,945.2 L1458.0,945.2 L1456.0,945.2 L1454.0,945.2 L1452.0,945.2 L1450.0,945.2 L1448.0,945.2 L1446.0,945.2 L1444.0,945.2 L1442.0,945.1 L1440.0,945.2 L1438.0,945.2 L1436.0,945.1 L1434.0,945.2 L1432.0,945.2 L1430.4,945.2 L1430.0,945.2 L1428.0,945.1 L1426.0,945.2 L1424.0,945.2 L1422.0,945.2 L1420.0,945.2 L1418.0,945.2 L1416.0,945.1 L1414.0,945.1 L1412.0,945.2 L1410.0,945.2 L1408.0,945.1 L1406.0,945.2 L1404.0,945.2 L1402.0,945.2 L1400.0,945.2 L1398.3,945.2 L1398.0,945.2 L1396.0,945.2 L1394.0,945.2 L1392.0,945.3 L1390.0,945.3 L1388.0,945.2 L1386.0,945.2 L1384.0,945.2 L1382.0,945.2 L1380.0,945.2 L1378.0,945.2 L1376.0,945.2 L1375.0,945.2 L1374.0,945.2 L1372.0,945.2 L1370.0,945.2 L1368.0,945.2 L1366.0,945.2 L1364.0,945.2 L1362.0,945.1 L1360.0,945.1 L1358.0,945.1 L1356.0,945.1 L1354.0,945.2 L1352.0,945.2 L1350.0,945.2 L1348.0,945.1 L1346.0,945.1 L1344.0,945.2 L1342.0,945.2 L1340.0,945.2 L1338.0,945.2 L1336.0,945.2 L1334.5,945.2 L1334.0,945.1 L1333.0,945.1 L1332.0,945.1 L1330.0,945.2 L1328.0,945.2 L1326.0,945.2 L1324.0,945.2 L1322.0,945.2 L1320.0,945.3 L1318.0,945.3 L1316.0,945.2 L1314.0,945.2 L1312.5,945.3 L1312.0,945.2 L1310.0,945.3 L1308.0,945.2 L1306.0,945.3 L1304.0,945.3 L1302.0,945.2 L1300.0,945.2 L1270.5,945.2 L1207.6,945.2 L1207.0,942.9 L1125.0,942.9 L1107.5,942.9 L1076.5,942.9 L1076.0,946.0 L1036.4,946.0 L1036.0,946.0 L1001.5,946.0 L1001.4,946.0 L943.3,946.0 L943.0,944.8 L875.7,944.8 L875.5,948.7 L208.5,948.9 L190.8,950.0 Z" fill="url(#g_com)"/>
<path d="M190.8,950.0 L208.5,948.9 L875.5,948.7 L875.7,944.8 L943.0,944.8 L943.3,946.0 L1001.4,946.0 L1001.5,939.9 L1036.0,939.9 L1036.4,936.4 L1076.0,934.8 L1076.5,934.0 L1107.5,933.0 L1125.0,927.8 L1207.0,929.0 L1207.6,929.0 L1270.5,931.7 L1300.0,931.1 L1302.0,931.1 L1304.0,930.9 L1306.0,930.8 L1308.0,930.7 L1310.0,930.9 L1312.0,930.8 L1312.5,930.6 L1314.0,930.5 L1316.0,929.9 L1318.0,930.5 L1320.0,930.7 L1322.0,930.7 L1324.0,930.6 L1326.0,930.5 L1328.0,930.2 L1330.0,929.9 L1332.0,930.1 L1333.0,929.9 L1334.0,929.7 L1334.5,929.7 L1336.0,929.5 L1338.0,929.4 L1340.0,929.5 L1342.0,929.5 L1344.0,929.5 L1346.0,929.6 L1348.0,929.5 L1350.0,929.4 L1352.0,929.3 L1354.0,929.4 L1356.0,929.0 L1358.0,929.0 L1360.0,929.0 L1362.0,929.2 L1364.0,929.1 L1366.0,929.3 L1368.0,929.3 L1370.0,929.3 L1372.0,929.4 L1374.0,929.2 L1375.0,929.4 L1376.0,928.9 L1378.0,928.6 L1380.0,927.9 L1382.0,927.5 L1384.0,927.1 L1386.0,926.9 L1388.0,926.5 L1390.0,926.0 L1392.0,925.7 L1394.0,925.2 L1396.0,924.9 L1398.0,925.0 L1398.3,924.5 L1400.0,924.4 L1402.0,924.4 L1404.0,924.2 L1406.0,924.2 L1408.0,924.0 L1410.0,923.6 L1412.0,923.5 L1414.0,923.3 L1416.0,923.3 L1418.0,923.2 L1420.0,923.1 L1422.0,923.1 L1424.0,922.8 L1426.0,922.8 L1428.0,922.6 L1430.0,922.4 L1430.4,922.6 L1432.0,922.7 L1434.0,922.7 L1436.0,922.5 L1438.0,922.5 L1440.0,922.3 L1442.0,922.3 L1444.0,922.1 L1446.0,922.3 L1448.0,922.2 L1450.0,921.9 L1452.0,921.7 L1454.0,921.5 L1456.0,921.7 L1458.0,921.7 L1460.0,921.4 L1462.0,921.5 L1464.0,921.6 L1466.0,921.6 L1468.0,921.4 L1470.0,921.4 L1471.2,921.4 L1472.0,921.4 L1474.0,921.6 L1476.0,921.8 L1478.0,921.8 L1480.0,921.7 L1482.0,921.1 L1484.0,921.4 L1486.0,921.5 L1488.0,921.1 L1490.0,921.3 L1492.0,921.5 L1494.0,921.5 L1496.0,921.2 L1498.0,921.3 L1500.0,921.1 L1502.0,921.2 L1504.0,921.3 L1506.0,921.4 L1508.0,921.0 L1510.0,921.0 L1512.0,921.0 L1514.0,921.0 L1516.0,921.4 L1518.0,921.3 L1520.0,921.3 L1522.0,921.2 L1524.0,921.1 L1526.0,921.0 L1528.0,920.8 L1529.5,920.8 L1530.0,920.7 L1532.0,921.2 L1534.0,920.6 L1536.0,920.4 L1538.0,920.0 L1540.0,920.2 L1541.0,920.1 L1542.0,920.1 L1544.0,920.0 L1546.0,919.7 L1548.0,919.3 L1550.0,919.0 L1552.0,919.0 L1554.0,918.8 L1556.0,918.5 L1558.0,918.3 L1558.7,918.6 L1560.0,918.5 L1562.0,918.4 L1564.0,918.5 L1566.0,918.1 L1568.0,918.3 L1570.0,918.4 L1572.0,918.6 L1574.0,918.6 L1576.0,918.7 L1578.0,918.6 L1580.0,918.6 L1582.0,918.7 L1584.0,918.4 L1586.0,918.4 L1588.0,918.3 L1590.0,918.4 L1592.0,918.2 L1594.0,918.5 L1595.0,918.2 L1596.0,917.5 L1596.6,916.7 L1598.0,916.2 L1600.0,916.6 L1602.0,916.5 L1604.0,916.7 L1606.0,917.0 L1608.0,917.3 L1610.0,917.3 L1612.0,917.1 L1614.0,917.2 L1616.0,917.3 L1618.0,917.2 L1620.0,917.3 L1622.0,917.2 L1624.0,917.3 L1626.0,917.4 L1628.0,917.1 L1630.0,917.4 L1632.0,917.5 L1634.0,917.2 L1636.0,917.2 L1638.0,917.3 L1640.0,917.9 L1642.0,918.1 L1644.0,918.1 L1646.0,917.9 L1648.0,917.9 L1650.0,918.2 L1652.0,917.5 L1654.0,917.3 L1656.0,917.6 L1658.0,917.8 L1660.0,918.0 L1661.9,917.6 L1662.0,917.6 L1664.0,915.8 L1666.0,913.5 L1668.0,911.6 L1668.4,911.4 L1670.0,911.1 L1672.0,910.5 L1674.0,909.9 L1676.0,909.3 L1678.0,909.4 L1680.0,908.5 L1682.0,908.6 L1684.0,908.1 L1686.0,907.4 L1688.0,906.8 L1690.0,906.4 L1692.0,906.2 L1694.0,905.8 L1694.7,905.8 L1696.0,905.6 L1698.0,905.6 L1700.0,905.7 L1702.0,904.5 L1704.0,903.9 L1706.0,903.5 L1708.0,903.1 L1710.0,902.7 L1712.0,902.6 L1714.0,902.6 L1716.0,902.3 L1718.0,902.0 L1720.0,901.6 L1722.0,901.0 L1724.0,900.3 L1726.0,899.7 L1728.0,899.5 L1730.0,899.3 L1732.0,899.9 L1734.0,899.3 L1736.0,898.4 L1738.0,898.3 L1738.4,898.2 L1740.0,898.1 L1742.0,897.6 L1744.0,897.3 L1746.0,897.0 L1748.0,896.8 L1750.0,896.2 L1752.0,895.8 L1754.0,896.1 L1756.0,895.2 L1758.0,894.6 L1760.0,894.4 L1762.0,893.7 L1764.0,893.0 L1766.0,892.5 L1768.0,892.9 L1770.0,892.6 L1772.0,892.3 L1774.0,892.0 L1776.0,892.1 L1778.0,891.8 L1780.0,891.2 L1782.0,890.5 L1784.0,890.8 L1786.0,890.2 L1788.0,890.3 L1790.0,889.6 L1792.0,889.9 L1794.0,887.9 L1796.0,888.1 L1798.0,887.4 L1800.0,887.3 L1802.0,886.6 L1804.0,886.1 L1806.0,886.0 L1808.0,885.4 L1810.0,884.1 L1812.0,883.2 L1814.0,883.3 L1816.0,881.9 L1818.0,881.6 L1819.3,881.7 L1820.0,880.7 L1822.0,881.2 L1824.0,881.2 L1826.0,880.8 L1828.0,881.2 L1830.0,881.6 L1832.0,881.0 L1834.0,881.4 L1836.0,881.8 L1838.0,881.4 L1839.0,881.8 L1840.0,881.0 L1842.0,879.8 L1844.0,878.3 L1846.0,877.3 L1848.0,876.9 L1850.0,875.3 L1852.0,874.2 L1854.0,873.4 L1856.0,871.7 L1856.5,871.5 L1858.0,870.5 L1858.5,868.7 L1858.7,868.8 L1860.0,868.1 L1860.6,867.4 L1860.9,866.4 L1861.2,865.1 L1861.8,862.0 L1862.0,861.5 L1863.0,855.0 L1864.0,853.8 L1866.0,849.9 L1868.0,847.2 L1868.5,846.8 L1869.9,848.8 L1870.0,848.2 L1871.7,851.6 L1871.8,851.5 L1872.0,850.8 L1872.4,850.8 L1874.0,849.4 L1876.0,845.6 L1876.2,844.1 L1878.0,845.4 L1880.0,846.1 L1882.0,847.4 L1884.0,849.6 L1886.0,851.3 L1887.0,852.9 L1888.0,850.7 L1890.0,847.9 L1891.0,847.0 L1891.5,845.3 L1892.0,845.7 L1893.5,846.6 L1894.0,846.2 L1894.7,846.1 L1896.0,846.2 L1898.0,846.8 L1900.0,847.1 L1902.0,846.9 L1903.6,845.8 L1904.0,844.4 L1906.0,843.5 L1908.0,841.9 L1910.0,840.2 L1912.0,840.2 L1914.0,838.9 L1914.6,838.5 L1916.0,837.2 L1917.2,835.8 L1918.0,834.4 L1919.6,832.1 L1920.0,831.2 L1922.0,828.1 L1924.0,825.7 L1926.0,821.5 L1928.0,818.6 L1929.5,816.8 L1930.0,816.2 L1930.7,815.5 L1930.8,814.8 L1932.0,815.8 L1934.0,814.1 L1936.0,814.1 L1938.0,814.9 L1940.0,814.0 L1941.0,815.0 L1942.0,812.9 L1943.2,811.2 L1944.0,807.9 L1946.0,802.8 L1948.0,800.5 L1950.0,795.2 L1952.0,790.6 L1953.0,788.9 L1953.1,786.1 L1954.0,787.0 L1955.6,782.4 L1956.0,780.7 L1958.0,777.4 L1960.0,775.1 L1961.5,769.6 L1961.8,772.3 L1962.0,771.4 L1964.0,770.9 L1965.0,768.6 L1965.5,768.5 L1966.0,768.9 L1966.8,766.7 L1968.0,764.2 L1970.0,764.3 L1972.0,761.1 L1974.0,760.0 L1976.0,759.4 L1978.0,758.4 L1978.5,756.8 L1980.0,754.7 L1982.0,755.3 L1984.0,756.7 L1986.0,753.3 L1988.0,751.7 L1990.0,753.0 L1992.0,752.2 L1994.0,750.2 L1996.0,748.3 L1998.0,746.9 L2000.0,747.1 L2002.0,744.8 L2002.3,748.0 L2002.5,746.4 L2003.3,745.1 L2004.0,743.7 L2005.0,741.4 L2006.0,738.9 L2008.0,738.8 L2010.0,737.5 L2012.0,736.3 L2014.0,733.8 L2014.2,733.7 L2016.0,739.5 L2017.6,741.9 L2018.0,740.6 L2020.0,739.2 L2022.0,736.6 L2024.0,737.8 L2025.0,736.2 L2026.0,734.4 L2028.0,730.6 L2030.0,727.3 L2032.0,722.5 L2032.3,719.1 L2034.0,714.1 L2036.0,709.6 L2038.0,704.9 L2038.5,706.6 L2040.0,706.0 L2042.0,703.0 L2043.0,703.3 L2044.0,702.9 L2044.7,702.5 L2046.0,702.4 L2048.0,699.7 L2050.0,700.0 L2052.0,698.2 L2054.0,698.3 L2056.0,693.5 L2056.5,693.3 L2057.0,691.1 L2058.0,690.0 L2060.0,690.3 L2062.0,689.6 L2064.0,686.3 L2065.5,687.9 L2066.0,688.0 L2066.6,689.6 L2067.0,689.0 L2067.4,681.0 L2068.0,675.5 L2068.5,669.7 L2068.8,664.8 L2070.0,648.2 L2072.0,643.0 L2074.0,643.1 L2074.4,640.4 L2076.0,640.9 L2076.7,638.8 L2077.0,636.8 L2078.0,635.9 L2080.0,633.5 L2082.0,628.1 L2084.0,620.9 L2085.7,619.7 L2086.0,617.2 L2087.5,611.6 L2088.0,613.1 L2090.0,613.3 L2090.2,612.2 L2090.7,613.0 L2092.0,613.4 L2092.4,614.5 L2094.0,616.0 L2096.0,618.1 L2098.0,618.2 L2100.0,620.7 L2102.0,625.4 L2104.0,624.3 L2104.4,622.6 L2105.9,625.2 L2106.0,625.8 L2108.0,622.4 L2108.2,622.0 L2110.0,620.9 L2112.0,616.4 L2112.7,615.7 L2114.0,615.2 L2116.0,611.5 L2116.6,610.8 L2118.0,611.5 L2120.0,610.1 L2122.0,609.2 L2124.0,607.7 L2126.0,602.8 L2126.2,602.8 L2126.8,603.6 L2128.0,601.1 L2128.2,603.4 L2130.0,598.4 L2132.0,596.4 L2132.9,596.4 L2134.0,594.9 L2136.0,592.3 L2137.0,591.3 L2137.4,592.1 L2138.0,590.8 L2140.0,591.4 L2142.0,589.2 L2144.0,590.2 L2145.8,587.8 L2146.0,586.9 L2148.0,580.6 L2148.6,577.9 L2150.0,572.5 L2151.6,564.7 L2152.0,564.4 L2154.0,554.8 L2156.0,545.0 L2156.9,538.6 L2157.1,539.4 L2158.0,545.5 L2159.5,552.2 L2159.5,712.9 L2158.0,707.3 L2157.1,702.1 L2156.9,702.3 L2156.0,705.4 L2154.0,712.9 L2152.0,719.9 L2151.6,720.8 L2150.0,723.6 L2148.6,728.2 L2148.0,728.0 L2146.0,728.6 L2145.8,730.0 L2144.0,731.4 L2142.0,731.0 L2140.0,733.8 L2138.0,734.8 L2137.4,735.5 L2137.0,736.0 L2136.0,735.5 L2134.0,735.4 L2132.9,736.8 L2132.0,734.9 L2130.0,735.3 L2128.2,737.3 L2128.0,737.9 L2126.8,740.1 L2126.2,739.6 L2126.0,739.9 L2124.0,742.5 L2122.0,743.7 L2120.0,745.6 L2118.0,748.1 L2116.6,749.7 L2116.0,750.0 L2114.0,752.2 L2112.7,753.4 L2112.0,752.7 L2110.0,757.2 L2108.2,758.9 L2108.0,759.4 L2106.0,762.5 L2105.9,762.8 L2104.4,763.6 L2104.0,765.7 L2102.0,764.8 L2100.0,761.7 L2098.0,760.5 L2096.0,757.8 L2094.0,757.2 L2092.4,757.3 L2092.0,757.3 L2090.7,754.9 L2090.2,755.6 L2090.0,756.6 L2088.0,759.1 L2087.5,759.9 L2086.0,762.2 L2085.7,762.7 L2084.0,764.8 L2082.0,767.6 L2080.0,771.5 L2078.0,772.9 L2077.0,774.3 L2076.7,774.2 L2076.0,775.7 L2074.4,778.6 L2074.0,780.3 L2072.0,787.9 L2070.0,796.8 L2068.8,801.5 L2068.5,803.8 L2068.0,805.4 L2067.4,807.4 L2067.0,809.5 L2066.6,811.5 L2066.0,813.2 L2065.5,813.2 L2064.0,812.8 L2062.0,813.0 L2060.0,813.6 L2058.0,815.0 L2057.0,815.7 L2056.5,815.3 L2056.0,814.6 L2054.0,817.5 L2052.0,819.8 L2050.0,822.2 L2048.0,824.0 L2046.0,826.7 L2044.7,828.2 L2044.0,828.9 L2043.0,829.0 L2042.0,830.7 L2040.0,833.1 L2038.5,834.8 L2038.0,835.0 L2036.0,836.4 L2034.0,838.4 L2032.3,840.1 L2032.0,841.0 L2030.0,843.7 L2028.0,845.5 L2026.0,847.8 L2025.0,848.2 L2024.0,849.0 L2022.0,850.7 L2020.0,852.2 L2018.0,854.2 L2017.6,855.2 L2016.0,855.8 L2014.2,856.7 L2014.0,857.1 L2012.0,858.5 L2010.0,860.3 L2008.0,861.1 L2006.0,862.7 L2005.0,863.5 L2004.0,864.3 L2003.3,865.1 L2002.5,866.2 L2002.3,865.9 L2002.0,866.1 L2000.0,867.4 L1998.0,868.5 L1996.0,869.4 L1994.0,871.5 L1992.0,872.9 L1990.0,873.6 L1988.0,875.1 L1986.0,876.2 L1984.0,877.7 L1982.0,879.8 L1980.0,880.6 L1978.5,880.8 L1978.0,880.9 L1976.0,881.0 L1974.0,881.2 L1972.0,881.1 L1970.0,881.8 L1968.0,882.4 L1966.8,882.5 L1966.0,882.9 L1965.5,883.2 L1965.0,883.3 L1964.0,884.2 L1962.0,885.3 L1961.8,885.2 L1961.5,885.7 L1960.0,887.0 L1958.0,887.7 L1956.0,889.2 L1955.6,889.2 L1954.0,889.7 L1953.1,890.0 L1953.0,890.1 L1952.0,890.9 L1950.0,892.0 L1948.0,893.9 L1946.0,894.9 L1944.0,896.5 L1943.2,897.3 L1942.0,897.0 L1941.0,896.9 L1940.0,897.3 L1938.0,897.7 L1936.0,898.1 L1934.0,897.8 L1932.0,898.2 L1930.8,898.5 L1930.7,898.5 L1930.0,898.9 L1929.5,898.7 L1928.0,899.1 L1926.0,899.1 L1924.0,899.1 L1922.0,899.9 L1920.0,900.4 L1919.6,900.1 L1918.0,900.4 L1917.2,900.8 L1916.0,901.4 L1914.6,901.7 L1914.0,902.8 L1912.0,906.0 L1910.0,905.6 L1908.0,905.8 L1906.0,906.1 L1904.0,906.0 L1903.6,905.9 L1902.0,905.5 L1900.0,905.8 L1898.0,906.2 L1896.0,906.3 L1894.7,906.3 L1894.0,906.0 L1893.5,905.7 L1892.0,904.2 L1891.5,903.1 L1891.0,903.1 L1890.0,903.6 L1888.0,905.6 L1887.0,906.3 L1886.0,906.9 L1884.0,908.5 L1882.0,909.9 L1880.0,912.0 L1878.0,913.5 L1876.2,915.2 L1876.0,915.4 L1874.0,917.2 L1872.4,918.6 L1872.0,919.1 L1871.8,919.3 L1871.7,919.1 L1870.0,915.6 L1869.9,915.4 L1868.5,915.7 L1868.0,915.4 L1866.0,914.9 L1864.0,914.5 L1863.0,914.1 L1862.0,914.0 L1861.8,913.9 L1861.2,915.2 L1860.9,916.0 L1860.6,916.9 L1860.0,918.0 L1858.7,921.1 L1858.5,921.1 L1858.0,921.0 L1856.5,921.3 L1856.0,921.1 L1854.0,921.3 L1852.0,921.1 L1850.0,921.3 L1848.0,921.6 L1846.0,922.0 L1844.0,922.1 L1842.0,922.1 L1840.0,922.2 L1839.0,922.2 L1838.0,922.0 L1836.0,922.7 L1834.0,922.5 L1832.0,922.7 L1830.0,923.2 L1828.0,923.2 L1826.0,923.3 L1824.0,923.2 L1822.0,923.3 L1820.0,923.5 L1819.3,923.5 L1818.0,923.5 L1816.0,923.4 L1814.0,923.6 L1812.0,923.6 L1810.0,923.9 L1808.0,924.4 L1806.0,924.4 L1804.0,924.6 L1802.0,924.7 L1800.0,924.8 L1798.0,925.1 L1796.0,925.1 L1794.0,925.2 L1792.0,925.6 L1790.0,925.6 L1788.0,926.0 L1786.0,925.8 L1784.0,926.1 L1782.0,925.9 L1780.0,926.0 L1778.0,926.2 L1776.0,926.1 L1774.0,926.0 L1772.0,926.3 L1770.0,926.5 L1768.0,926.8 L1766.0,926.8 L1764.0,926.8 L1762.0,927.0 L1760.0,927.1 L1758.0,927.1 L1756.0,927.6 L1754.0,928.0 L1752.0,927.8 L1750.0,928.0 L1748.0,928.2 L1746.0,928.2 L1744.0,928.3 L1742.0,928.4 L1740.0,928.6 L1738.4,928.6 L1738.0,928.4 L1736.0,928.5 L1734.0,928.9 L1732.0,928.9 L1730.0,928.9 L1728.0,928.9 L1726.0,929.0 L1724.0,928.8 L1722.0,929.2 L1720.0,929.1 L1718.0,929.1 L1716.0,929.1 L1714.0,929.2 L1712.0,929.1 L1710.0,929.1 L1708.0,929.4 L1706.0,929.1 L1704.0,929.1 L1702.0,929.6 L1700.0,929.8 L1698.0,929.7 L1696.0,929.3 L1694.7,929.2 L1694.0,929.3 L1692.0,929.3 L1690.0,929.4 L1688.0,929.5 L1686.0,929.6 L1684.0,929.8 L1682.0,929.7 L1680.0,929.6 L1678.0,929.7 L1676.0,929.5 L1674.0,929.7 L1672.0,929.9 L1670.0,930.0 L1668.4,929.9 L1668.0,930.0 L1666.0,930.1 L1664.0,930.1 L1662.0,930.0 L1661.9,929.9 L1660.0,930.1 L1658.0,930.1 L1656.0,930.0 L1654.0,929.9 L1652.0,930.0 L1650.0,930.3 L1648.0,930.2 L1646.0,930.3 L1644.0,930.4 L1642.0,930.4 L1640.0,930.5 L1638.0,930.2 L1636.0,930.0 L1634.0,930.0 L1632.0,930.2 L1630.0,930.1 L1628.0,929.9 L1626.0,930.1 L1624.0,929.9 L1622.0,930.0 L1620.0,930.0 L1618.0,930.0 L1616.0,929.9 L1614.0,929.8 L1612.0,929.9 L1610.0,929.9 L1608.0,929.8 L1606.0,929.5 L1604.0,929.2 L1602.0,929.1 L1600.0,929.2 L1598.0,929.0 L1596.6,929.5 L1596.0,930.2 L1595.0,930.8 L1594.0,930.9 L1592.0,930.7 L1590.0,930.7 L1588.0,930.7 L1586.0,930.9 L1584.0,931.0 L1582.0,931.3 L1580.0,931.0 L1578.0,930.8 L1576.0,931.1 L1574.0,930.9 L1572.0,931.0 L1570.0,931.0 L1568.0,930.9 L1566.0,930.7 L1564.0,931.0 L1562.0,931.1 L1560.0,931.4 L1558.7,931.2 L1558.0,931.1 L1556.0,931.2 L1554.0,931.4 L1552.0,931.4 L1550.0,931.5 L1548.0,931.6 L1546.0,931.7 L1544.0,931.7 L1542.0,931.8 L1541.0,931.9 L1540.0,931.9 L1538.0,931.6 L1536.0,931.7 L1534.0,931.8 L1532.0,931.9 L1530.0,931.6 L1529.5,931.7 L1528.0,931.6 L1526.0,931.7 L1524.0,931.6 L1522.0,931.6 L1520.0,931.6 L1518.0,931.7 L1516.0,931.6 L1514.0,931.3 L1512.0,931.3 L1510.0,931.3 L1508.0,931.4 L1506.0,931.7 L1504.0,931.4 L1502.0,931.3 L1500.0,931.3 L1498.0,931.6 L1496.0,931.5 L1494.0,931.5 L1492.0,931.5 L1490.0,931.3 L1488.0,931.0 L1486.0,931.2 L1484.0,931.3 L1482.0,930.9 L1480.0,931.3 L1478.0,931.4 L1476.0,931.2 L1474.0,931.0 L1472.0,931.0 L1471.2,931.0 L1470.0,931.1 L1468.0,931.0 L1466.0,931.0 L1464.0,930.8 L1462.0,930.8 L1460.0,930.7 L1458.0,930.9 L1456.0,931.0 L1454.0,930.8 L1452.0,930.8 L1450.0,930.8 L1448.0,931.0 L1446.0,930.8 L1444.0,930.8 L1442.0,930.8 L1440.0,931.0 L1438.0,931.1 L1436.0,931.0 L1434.0,931.1 L1432.0,931.1 L1430.4,930.9 L1430.0,930.8 L1428.0,930.7 L1426.0,930.8 L1424.0,930.7 L1422.0,930.9 L1420.0,930.9 L1418.0,930.7 L1416.0,930.7 L1414.0,930.5 L1412.0,930.6 L1410.0,930.6 L1408.0,930.8 L1406.0,930.9 L1404.0,930.6 L1402.0,930.8 L1400.0,930.7 L1398.3,930.6 L1398.0,930.9 L1396.0,930.5 L1394.0,930.5 L1392.0,930.6 L1390.0,930.6 L1388.0,930.7 L1386.0,930.7 L1384.0,930.6 L1382.0,930.7 L1380.0,930.7 L1378.0,931.0 L1376.0,930.9 L1375.0,931.2 L1374.0,931.1 L1372.0,931.1 L1370.0,930.9 L1368.0,930.8 L1366.0,930.7 L1364.0,930.5 L1362.0,930.5 L1360.0,930.2 L1358.0,930.1 L1356.0,929.9 L1354.0,930.3 L1352.0,930.2 L1350.0,930.1 L1348.0,930.2 L1346.0,930.2 L1344.0,929.9 L1342.0,929.9 L1340.0,929.9 L1338.0,929.6 L1336.0,929.7 L1334.5,929.9 L1334.0,929.9 L1333.0,930.1 L1332.0,930.2 L1330.0,930.0 L1328.0,930.3 L1326.0,930.5 L1324.0,930.6 L1322.0,930.7 L1320.0,930.7 L1318.0,930.5 L1316.0,929.9 L1314.0,930.5 L1312.5,930.6 L1312.0,930.8 L1310.0,930.9 L1308.0,930.7 L1306.0,930.8 L1304.0,930.9 L1302.0,931.1 L1300.0,931.1 L1270.5,931.7 L1207.6,929.0 L1207.0,929.0 L1125.0,927.8 L1107.5,933.0 L1076.5,934.0 L1076.0,934.8 L1036.4,936.4 L1036.0,939.9 L1001.5,939.9 L1001.4,946.0 L943.3,946.0 L943.0,944.8 L875.7,944.8 L875.5,948.7 L208.5,948.9 L190.8,950.0 Z" fill="url(#g_ust)"/>
<path d="M1961.5,949.5 L1961.8,949.4 L1962.0,949.3 L1964.0,948.6 L1965.0,948.2 L1965.5,948.2 L1966.0,948.2 L1966.8,948.2 L1968.0,948.2 L1970.0,948.2 L1972.0,948.2 L1974.0,948.2 L1976.0,948.2 L1978.0,948.2 L1978.5,948.1 L1980.0,948.1 L1982.0,948.1 L1984.0,948.1 L1986.0,948.1 L1988.0,948.1 L1990.0,948.1 L1992.0,948.1 L1994.0,948.1 L1996.0,948.1 L1998.0,948.1 L2000.0,948.1 L2002.0,948.1 L2002.3,948.2 L2002.5,948.1 L2003.3,948.1 L2004.0,948.1 L2005.0,948.1 L2006.0,948.2 L2008.0,948.1 L2010.0,948.1 L2012.0,948.1 L2014.0,948.1 L2014.2,948.1 L2016.0,948.1 L2017.6,948.1 L2018.0,948.1 L2020.0,948.1 L2022.0,948.1 L2024.0,948.1 L2025.0,948.1 L2026.0,948.1 L2028.0,948.1 L2030.0,948.1 L2032.0,948.1 L2032.3,948.0 L2034.0,948.1 L2036.0,948.1 L2038.0,948.1 L2038.5,948.0 L2040.0,948.0 L2042.0,948.1 L2043.0,948.0 L2044.0,948.0 L2044.7,948.0 L2046.0,948.0 L2048.0,948.0 L2050.0,948.0 L2052.0,948.0 L2054.0,948.0 L2056.0,948.1 L2056.5,948.0 L2057.0,948.0 L2058.0,948.0 L2060.0,948.0 L2062.0,948.0 L2064.0,948.0 L2065.5,948.0 L2066.0,948.0 L2066.6,948.0 L2067.0,948.0 L2067.4,948.0 L2068.0,948.0 L2068.5,948.0 L2068.8,948.0 L2070.0,948.0 L2072.0,948.0 L2074.0,948.0 L2074.4,948.0 L2076.0,948.0 L2076.7,947.9 L2077.0,947.9 L2078.0,948.0 L2080.0,948.0 L2082.0,948.0 L2084.0,947.9 L2085.7,948.0 L2086.0,948.0 L2087.5,948.0 L2088.0,948.0 L2090.0,948.0 L2090.2,948.0 L2090.7,948.0 L2092.0,948.0 L2092.4,947.9 L2094.0,947.9 L2096.0,947.9 L2098.0,947.9 L2100.0,948.0 L2102.0,947.9 L2104.0,947.9 L2104.4,947.9 L2105.9,947.9 L2106.0,947.9 L2108.0,947.9 L2108.2,947.9 L2110.0,947.9 L2112.0,947.9 L2112.7,947.9 L2114.0,947.9 L2116.0,947.9 L2116.6,947.9 L2118.0,947.9 L2120.0,947.9 L2122.0,947.9 L2124.0,947.9 L2126.0,947.9 L2126.2,947.9 L2126.8,947.9 L2128.0,947.9 L2128.2,947.9 L2130.0,947.9 L2132.0,947.8 L2132.9,947.9 L2134.0,947.9 L2136.0,947.8 L2137.0,947.8 L2137.4,947.8 L2138.0,947.8 L2140.0,947.8 L2142.0,947.8 L2144.0,947.9 L2145.8,947.9 L2146.0,947.8 L2148.0,947.8 L2148.6,947.8 L2150.0,947.8 L2151.6,947.8 L2152.0,947.8 L2154.0,947.8 L2156.0,947.8 L2156.9,947.8 L2157.1,947.8 L2158.0,947.8 L2159.5,947.8" fill="none" stroke="#2a1ae8" stroke-width="2.0" stroke-linejoin="round"/>
<path d="M1914.6,949.6 L1916.0,949.6 L1917.2,949.5 L1918.0,949.5 L1919.6,949.5 L1920.0,949.5 L1922.0,949.4 L1924.0,949.3 L1926.0,949.3 L1928.0,949.2 L1929.5,949.2 L1930.0,949.2 L1930.7,949.2 L1930.8,949.1 L1932.0,949.1 L1934.0,949.0 L1936.0,949.0 L1938.0,949.0 L1940.0,948.9 L1941.0,948.9 L1942.0,948.8 L1943.2,948.8 L1944.0,948.8 L1946.0,948.7 L1948.0,948.7 L1950.0,948.6 L1952.0,948.5 L1953.0,948.5 L1953.1,948.5 L1954.0,948.5 L1955.6,948.5 L1956.0,948.5 L1958.0,948.4 L1960.0,948.4 L1961.5,948.3 L1961.8,948.3 L1962.0,948.3 M1972.0,947.8 L1974.0,947.6 L1976.0,947.5 L1978.0,947.4 L1978.5,947.3 L1980.0,947.2 L1982.0,947.1 L1984.0,947.0 L1986.0,946.9 L1988.0,946.8 L1990.0,946.6 L1992.0,946.6 L1994.0,946.5 L1996.0,946.4 L1998.0,946.3 L2000.0,946.1 L2002.0,946.0 L2002.3,946.0 L2002.5,946.0 L2003.3,945.9 L2004.0,945.9 L2005.0,945.9 L2006.0,945.9 L2008.0,945.8 L2010.0,945.6 L2012.0,945.5 L2014.0,945.4 L2014.2,945.4 L2016.0,945.2 L2017.6,945.1 L2018.0,945.1 L2020.0,945.0 L2022.0,944.9 L2024.0,944.8 L2025.0,944.9 L2026.0,944.9 L2028.0,945.0 L2030.0,945.0 L2032.0,945.1 L2032.3,945.1 L2034.0,945.2 L2036.0,945.2 L2038.0,945.3 L2038.5,945.3 L2040.0,945.3 L2042.0,945.4 L2043.0,945.5 L2044.0,945.5 L2044.7,945.5 L2046.0,945.6 L2048.0,945.6 L2050.0,945.7 L2052.0,945.8 L2054.0,945.8 L2056.0,945.9 L2056.5,945.9 L2057.0,945.9 L2058.0,946.0 L2060.0,946.0 L2062.0,946.1 L2064.0,946.1 L2065.5,946.2 L2066.0,946.2 L2066.6,946.2 L2067.0,946.2 L2067.4,946.2 L2068.0,946.3 L2068.5,946.3 L2068.8,946.3 L2070.0,946.2 L2072.0,946.2 L2074.0,946.1 L2074.4,946.1 L2076.0,946.2 L2076.7,946.1 L2077.0,946.1 L2078.0,946.2 L2080.0,946.1 L2082.0,946.2 L2084.0,946.1 L2085.7,946.1 L2086.0,946.1 L2087.5,946.1 L2088.0,946.1 L2090.0,946.1 L2090.2,946.1 L2090.7,946.2 L2092.0,946.2 L2092.4,946.1 L2094.0,946.1 L2096.0,946.0 L2098.0,946.1 L2100.0,946.1 L2102.0,946.0 L2104.0,946.0 L2104.4,946.0 L2105.9,946.0 L2106.0,946.0 L2108.0,946.0 L2108.2,946.1 L2110.0,946.0 L2112.0,946.0 L2112.7,946.0 L2114.0,946.0 L2116.0,946.0 L2116.6,946.0 L2118.0,946.0 L2120.0,946.0 L2122.0,946.0 L2124.0,945.9 L2126.0,945.9 L2126.2,945.9 L2126.8,945.9 L2128.0,945.9 L2128.2,945.9 L2130.0,945.9 L2132.0,945.9 L2132.9,945.9 L2134.0,945.9 L2136.0,945.8 L2137.0,945.9 L2137.4,945.8 L2138.0,945.9 L2140.0,945.9 L2142.0,945.9 L2144.0,945.9 L2145.8,945.9 L2146.0,945.8 L2148.0,945.8 L2148.6,945.8 L2150.0,945.8 L2151.6,945.8 L2152.0,945.8 L2154.0,945.8 L2156.0,945.8 L2156.9,945.8 L2157.1,945.8 L2158.0,945.8 L2159.5,945.8" fill="none" stroke="#3d8a7a" stroke-width="2.0" stroke-linejoin="round"/>
<path d="M2068.0,941.2 L2068.5,936.8 L2068.8,934.3 L2070.0,934.4 L2072.0,934.8 L2074.0,935.1 L2074.4,935.2 L2076.0,935.5 L2076.7,935.6 L2077.0,935.7 L2078.0,935.9 L2080.0,936.3 L2082.0,936.5 L2084.0,936.9 L2085.7,937.3 L2086.0,937.4 L2087.5,937.5 L2088.0,937.6 L2090.0,937.9 L2090.2,937.9 L2090.7,938.1 L2092.0,938.3 L2092.4,938.3 L2094.0,938.6 L2096.0,939.0 L2098.0,939.4 L2100.0,939.8 L2102.0,940.1 L2104.0,940.4 L2104.4,940.4 L2105.9,940.7 L2106.0,940.7 L2108.0,940.7 L2108.2,940.6 L2110.0,940.6 L2112.0,940.6 L2112.7,940.5 L2114.0,940.7 L2116.0,940.7 L2116.6,940.6 L2118.0,940.4 L2120.0,940.5 L2122.0,940.4 L2124.0,940.2 L2126.0,940.1 L2126.2,940.4 L2126.8,940.3 L2128.0,940.2 L2128.2,940.2 L2130.0,940.3 L2132.0,940.2 L2132.9,940.3 L2134.0,940.1 L2136.0,940.1 L2137.0,940.1 L2137.4,940.1 L2138.0,940.1 L2140.0,940.1 L2142.0,940.1 L2144.0,940.1 L2145.8,940.1 L2146.0,940.1 L2148.0,940.0 L2148.6,940.1 L2150.0,940.0 L2151.6,939.9 L2152.0,939.9 L2154.0,940.0 L2156.0,939.9 L2156.9,939.7 L2157.1,939.7 L2158.0,939.8 L2159.5,939.9" fill="none" stroke="#ffd400" stroke-width="2.0" stroke-linejoin="round"/>
<path d="M1334.0,949.0 L1334.5,948.5 L1336.0,948.5 L1338.0,948.5 L1340.0,948.5 L1342.0,948.5 L1344.0,948.5 L1346.0,948.5 L1348.0,948.5 L1350.0,948.5 L1352.0,948.5 L1354.0,948.5 L1356.0,948.5 L1358.0,948.5 L1360.0,948.5 L1362.0,948.5 L1364.0,948.5 L1366.0,948.5 L1368.0,948.5 L1370.0,948.5 L1372.0,948.5 L1374.0,948.5 L1375.0,948.5 L1376.0,948.5 L1378.0,948.5 L1380.0,948.5 L1382.0,948.5 L1384.0,948.5 L1386.0,948.5 L1388.0,948.5 L1390.0,948.5 L1392.0,948.5 L1394.0,948.5 L1396.0,948.4 L1398.0,948.5 L1398.3,948.4 L1400.0,948.4 L1402.0,948.5 L1404.0,948.5 L1406.0,948.4 L1408.0,948.5 L1410.0,948.5 L1412.0,948.5 L1414.0,948.5 L1416.0,948.5 L1418.0,948.5 L1420.0,948.5 L1422.0,948.5 L1424.0,948.5 L1426.0,948.5 L1428.0,948.5 L1430.0,948.5 L1430.4,948.5 L1432.0,948.5 L1434.0,948.4 L1436.0,948.5 L1438.0,948.5 L1440.0,948.5 L1442.0,948.4 L1444.0,948.4 L1446.0,948.5 L1448.0,948.5 L1450.0,948.5 L1452.0,948.4 L1454.0,948.4 L1456.0,948.4 L1458.0,948.5 L1460.0,948.4 L1462.0,948.5 L1464.0,948.4 L1466.0,948.5 L1468.0,948.5 L1470.0,948.5 L1471.2,948.4 L1472.0,948.4 L1474.0,948.4 L1476.0,948.4 L1478.0,948.4 L1480.0,948.4 L1482.0,948.4 L1484.0,948.4 L1486.0,948.5 L1488.0,948.4 L1490.0,948.4 L1492.0,948.4 L1494.0,948.5 L1496.0,948.5 L1498.0,948.4 L1500.0,948.5 L1502.0,948.4 L1504.0,948.5 L1506.0,948.4 L1508.0,948.4 L1510.0,948.4 L1512.0,948.4 L1514.0,948.4 L1516.0,948.4 L1518.0,948.4 L1520.0,948.4 L1522.0,948.4 L1524.0,948.4 L1526.0,948.4 L1528.0,948.4 L1529.5,948.4 L1530.0,948.5 L1532.0,948.5 L1534.0,948.4 L1536.0,948.4 L1538.0,948.4 L1540.0,948.4 L1541.0,948.4 L1542.0,948.4 L1544.0,948.4 L1546.0,948.4 L1548.0,948.4 L1550.0,948.4 L1552.0,948.4 L1554.0,948.4 L1556.0,948.4 L1558.0,948.4 L1558.7,948.4 L1560.0,948.4 L1562.0,948.4 L1564.0,948.4 L1566.0,948.4 L1568.0,948.4 L1570.0,948.4 L1572.0,948.4 L1574.0,948.4 L1576.0,948.4 L1578.0,948.4 L1580.0,948.5 L1582.0,948.4 L1584.0,948.4 L1586.0,948.4 L1588.0,948.4 L1590.0,948.4 L1592.0,948.3 L1594.0,948.4 L1595.0,948.4 L1596.0,948.4 L1596.6,948.4 L1598.0,948.4 L1600.0,948.4 L1602.0,948.4 L1604.0,948.4 L1606.0,948.4 L1608.0,948.4 L1610.0,948.4 L1612.0,948.4 L1614.0,948.4 L1616.0,948.4 L1618.0,948.4 L1620.0,948.4 L1622.0,948.4 L1624.0,948.4 L1626.0,948.3 L1628.0,948.4 L1630.0,948.4 L1632.0,948.4 L1634.0,948.4 L1636.0,948.4 L1638.0,948.4 L1640.0,948.4 L1642.0,948.4 L1644.0,948.4 L1646.0,948.4 L1648.0,948.4 L1650.0,948.4 L1652.0,948.4 L1654.0,948.4 L1656.0,948.4 L1658.0,948.4 L1660.0,948.4 L1661.9,948.4 L1662.0,948.4 L1664.0,948.4 L1666.0,948.4 L1668.0,948.4 L1668.4,948.4 L1670.0,948.4 L1672.0,948.4 L1674.0,948.4 L1676.0,948.4 L1678.0,948.4 L1680.0,948.4 L1682.0,948.4 L1684.0,948.4 L1686.0,948.3 L1688.0,948.4 L1690.0,948.4 L1692.0,948.4 L1694.0,948.3 L1694.7,948.3 L1696.0,948.3 L1698.0,948.4 L1700.0,948.4 L1702.0,948.3 L1704.0,948.3 L1706.0,948.3 L1708.0,948.4 L1710.0,948.3 L1712.0,948.4 L1714.0,948.4 L1716.0,948.4 L1718.0,948.3 L1720.0,948.3 L1722.0,948.3 L1724.0,948.3 L1726.0,948.3 L1728.0,948.3 L1730.0,948.3 L1732.0,948.4 L1734.0,948.4 L1736.0,948.3 L1738.0,948.4 L1738.4,948.4 L1740.0,948.4 L1742.0,948.4 L1744.0,948.3 L1746.0,948.3 L1748.0,948.4 L1750.0,948.4 L1752.0,948.3 L1754.0,948.4 L1756.0,948.3 L1758.0,948.4 L1760.0,948.3 L1762.0,948.3 L1764.0,948.3 L1766.0,948.3 L1768.0,948.3 L1770.0,948.3 L1772.0,948.3 L1774.0,948.3 L1776.0,948.3 L1778.0,948.3 L1780.0,948.3 L1782.0,948.3 L1784.0,948.3 L1786.0,948.3 L1788.0,948.3 L1790.0,948.3 L1792.0,948.3 L1794.0,948.3 L1796.0,948.3 L1798.0,948.4 L1800.0,948.4 L1802.0,948.4 L1804.0,948.3 L1806.0,948.3 L1808.0,948.3 L1810.0,948.3 L1812.0,948.3 L1814.0,948.3 L1816.0,948.3 L1818.0,948.3 L1819.3,948.3 L1820.0,948.3 L1822.0,948.3 L1824.0,948.3 L1826.0,948.3 L1828.0,948.3 L1830.0,948.3 L1832.0,948.3 L1834.0,948.3 L1836.0,948.3 L1838.0,948.3 L1839.0,948.3 L1840.0,948.3 L1842.0,948.3 L1844.0,948.3 L1846.0,948.3 L1848.0,948.3 L1850.0,948.3 L1852.0,948.3 L1854.0,948.3 L1856.0,948.3 L1856.5,948.3 L1858.0,948.3 L1858.5,946.8 L1858.7,946.1 L1860.0,942.1 L1860.6,940.2 L1860.9,940.1 L1861.2,940.3 L1861.8,940.4 L1862.0,940.5 L1863.0,940.7 L1864.0,941.1 L1866.0,941.7 L1868.0,942.3 L1868.5,942.3 L1869.9,942.6 L1870.0,942.6 L1871.7,943.1 L1871.8,943.1 L1872.0,943.2 L1872.4,943.3 L1874.0,942.4 L1876.0,941.3 L1876.2,941.1 L1878.0,940.2 L1880.0,939.2 L1882.0,937.9 L1884.0,936.8 L1886.0,935.9 L1887.0,935.6 L1888.0,934.9 L1890.0,933.8 L1891.0,933.4 L1891.5,933.6 L1892.0,934.6 L1893.5,936.4 L1894.0,936.9 L1894.7,937.5 L1896.0,938.0 L1898.0,938.3 L1900.0,938.4 L1902.0,938.7 L1903.6,939.1 L1904.0,939.2 L1906.0,939.7 L1908.0,939.9 L1910.0,940.4 L1912.0,940.9 L1914.0,941.3 L1914.6,941.2 L1916.0,941.5 L1917.2,941.6 L1918.0,941.6 L1919.6,941.9 L1920.0,941.7 L1922.0,941.0 L1924.0,940.4 L1926.0,939.7 L1928.0,939.1 L1929.5,938.5 L1930.0,938.5 L1930.7,938.4 L1930.8,938.5 L1932.0,938.5 L1934.0,938.7 L1936.0,939.1 L1938.0,939.4 L1940.0,939.7 L1941.0,939.7 L1942.0,939.8 L1943.2,940.0 L1944.0,940.2 L1946.0,940.5 L1948.0,940.6 L1950.0,941.0 L1952.0,941.3 L1953.0,941.3 L1953.1,941.3 L1954.0,941.2 L1955.6,940.8 L1956.0,940.9 L1958.0,940.5 L1960.0,940.4 L1961.5,940.0 L1961.8,939.8 L1962.0,939.8 L1964.0,939.5 L1965.0,939.3 L1965.5,939.2 L1966.0,939.1 L1966.8,939.0 L1968.0,939.0 L1970.0,939.2 L1972.0,939.6 L1974.0,940.0 L1976.0,940.4 L1978.0,940.7 L1978.5,940.6 L1980.0,940.8 L1982.0,940.6 L1984.0,940.5 L1986.0,940.4 L1988.0,940.3 L1990.0,940.1 L1992.0,939.9 L1994.0,939.7 L1996.0,939.7 L1998.0,939.6 L2000.0,939.4 L2002.0,939.3 L2002.3,939.1 L2002.5,939.2 L2003.3,939.2 L2004.0,939.2 L2005.0,939.0 L2006.0,939.0 L2008.0,938.9 L2010.0,938.5 L2012.0,938.5 L2014.0,938.4 L2014.2,938.4 L2016.0,938.2 L2017.6,938.1 L2018.0,938.0 L2020.0,937.9 L2022.0,937.7 L2024.0,937.5 L2025.0,937.4 L2026.0,937.4 L2028.0,937.1 L2030.0,936.8 L2032.0,936.4 L2032.3,936.4 L2034.0,936.3 L2036.0,935.9 L2038.0,935.8 L2038.5,935.8 L2040.0,935.6 L2042.0,935.4 L2043.0,935.3 L2044.0,935.2 L2044.7,935.2 L2046.0,935.0 L2048.0,934.6 L2050.0,934.0 L2052.0,933.7 L2054.0,933.7 L2056.0,933.2 L2056.5,933.2 L2057.0,933.0 L2058.0,933.1 L2060.0,932.7 L2062.0,932.4 L2064.0,932.2 L2065.5,932.1 L2066.0,932.1 L2066.6,931.9 L2067.0,929.7 L2067.4,927.7 L2068.0,925.1 L2068.5,923.0 L2068.8,921.8 L2070.0,921.8 L2072.0,922.3 L2074.0,922.6 L2074.4,922.7 L2076.0,922.8 L2076.7,922.9 L2077.0,923.0 L2078.0,923.3 L2080.0,923.8 L2082.0,924.2 L2084.0,924.6 L2085.7,925.1 L2086.0,925.0 L2087.5,925.3 L2088.0,925.4 L2090.0,926.1 L2090.2,926.1 L2090.7,926.3 L2092.0,926.6 L2092.4,926.6 L2094.0,927.0 L2096.0,927.5 L2098.0,928.0 L2100.0,928.5 L2102.0,928.9 L2104.0,929.4 L2104.4,929.4 L2105.9,929.7 L2106.0,929.9 L2108.0,929.5 L2108.2,929.2 L2110.0,929.0 L2112.0,928.7 L2112.7,928.6 L2114.0,928.7 L2116.0,928.2 L2116.6,927.8 L2118.0,927.8 L2120.0,927.4 L2122.0,927.3 L2124.0,926.7 L2126.0,926.7 L2126.2,926.7 L2126.8,926.5 L2128.0,926.6 L2128.2,926.6 L2130.0,926.5 L2132.0,926.2 L2132.9,926.0 L2134.0,925.7 L2136.0,925.7 L2137.0,925.5 L2137.4,925.2 L2138.0,925.1 L2140.0,924.7 L2142.0,925.1 L2144.0,924.9 L2145.8,924.9 L2146.0,924.7 L2148.0,924.8 L2148.6,924.9 L2150.0,924.8 L2151.6,924.5 L2152.0,924.8 L2154.0,924.5 L2156.0,924.3 L2156.9,924.0 L2157.1,924.4 L2158.0,924.2 L2159.5,924.3" fill="none" stroke="#f04a12" stroke-width="2.0" stroke-linejoin="round"/>
<path d="M1860.6,939.6 L1860.9,939.3 L1861.2,939.4 L1861.8,939.2 L1862.0,939.2 L1863.0,938.9 L1864.0,938.7 L1866.0,938.3 L1868.0,938.0 L1868.5,937.7 L1869.9,937.2 L1870.0,937.3 L1871.7,936.9 L1871.8,936.9 L1872.0,936.8 L1872.4,936.8 L1874.0,936.3 L1876.0,935.6 L1876.2,935.5 L1878.0,935.1 L1880.0,934.7 L1882.0,934.1 L1884.0,933.5 L1886.0,933.1 L1887.0,933.1 L1888.0,932.8 L1890.0,932.2 L1891.0,932.1 L1891.5,931.7 L1892.0,932.3 L1893.5,932.5 L1894.0,932.4 L1894.7,932.2 L1896.0,932.6 L1898.0,932.8 L1900.0,932.8 L1902.0,932.8 L1903.6,933.2 L1904.0,933.3 L1906.0,933.7 L1908.0,933.8 L1910.0,934.1 L1912.0,934.3 L1914.0,934.6 L1914.6,934.6 L1916.0,934.9 L1917.2,934.7 L1918.0,934.8 L1919.6,934.9 L1920.0,935.0 L1922.0,935.1 L1924.0,935.4 L1926.0,935.5 L1928.0,935.8 L1929.5,935.9 L1930.0,936.1 L1930.7,936.3 L1930.8,936.4 L1932.0,936.3 L1934.0,936.4 L1936.0,936.7 L1938.0,937.1 L1940.0,937.2 L1941.0,937.2 L1942.0,937.3 L1943.2,937.5 L1944.0,937.7 L1946.0,937.9 L1948.0,938.0 L1950.0,938.3 L1952.0,938.4 L1953.0,938.4 L1953.1,938.3 L1954.0,938.3 L1955.6,937.8 L1956.0,937.9 L1958.0,937.3 L1960.0,937.0 L1961.5,936.6 L1961.8,936.4 L1962.0,936.4 L1964.0,936.0 L1965.0,935.7 L1965.5,935.6 L1966.0,935.4 L1966.8,935.2 L1968.0,934.7 L1970.0,934.1 L1972.0,933.7 L1974.0,933.3 L1976.0,933.1 L1978.0,932.7 L1978.5,932.3 L1980.0,931.9 L1982.0,932.1 L1984.0,932.1 L1986.0,932.2 L1988.0,932.2 L1990.0,932.1 L1992.0,932.2 L1994.0,932.2 L1996.0,932.3 L1998.0,932.4 L2000.0,932.4 L2002.0,932.6 L2002.3,932.4 L2002.5,932.7 L2003.3,932.6 L2004.0,932.6 L2005.0,932.5 L2006.0,932.5 L2008.0,932.2 L2010.0,931.7 L2012.0,931.6 L2014.0,931.5 L2014.2,931.5 L2016.0,931.1 L2017.6,931.1 L2018.0,931.0 L2020.0,930.9 L2022.0,930.6 L2024.0,930.6 L2025.0,930.3 L2026.0,930.4 L2028.0,930.0 L2030.0,929.8 L2032.0,929.3 L2032.3,929.2 L2034.0,929.2 L2036.0,928.8 L2038.0,928.9 L2038.5,928.8 L2040.0,928.7 L2042.0,927.8 L2043.0,927.3 L2044.0,926.9 L2044.7,926.7 L2046.0,926.1 L2048.0,925.0 L2050.0,923.7 L2052.0,922.7 L2054.0,921.9 L2056.0,921.1 L2056.5,920.9 L2057.0,920.4 L2058.0,920.2 L2060.0,919.1 L2062.0,918.1 L2064.0,917.5 L2065.5,916.9 L2066.0,916.5 L2066.6,916.1 L2067.0,913.8 L2067.4,911.4 L2068.0,908.9 L2068.5,906.4 L2068.8,904.7 L2070.0,904.8 L2072.0,905.2 L2074.0,905.2 L2074.4,905.4 L2076.0,905.5 L2076.7,905.4 L2077.0,905.7 L2078.0,905.6 L2080.0,906.0 L2082.0,906.1 L2084.0,905.8 L2085.7,906.1 L2086.0,905.9 L2087.5,905.7 L2088.0,905.5 L2090.0,905.6 L2090.2,906.0 L2090.7,906.0 L2092.0,906.6 L2092.4,906.3 L2094.0,906.2 L2096.0,906.7 L2098.0,906.8 L2100.0,906.8 L2102.0,907.0 L2104.0,907.3 L2104.4,906.9 L2105.9,907.4 L2106.0,907.4 L2108.0,906.7 L2108.2,906.5 L2110.0,906.0 L2112.0,905.5 L2112.7,905.5 L2114.0,905.3 L2116.0,905.0 L2116.6,905.1 L2118.0,905.1 L2120.0,904.5 L2122.0,904.3 L2124.0,904.1 L2126.0,903.4 L2126.2,903.9 L2126.8,903.9 L2128.0,903.6 L2128.2,903.6 L2130.0,903.0 L2132.0,902.8 L2132.9,902.6 L2134.0,902.2 L2136.0,902.4 L2137.0,902.5 L2137.4,902.2 L2138.0,901.7 L2140.0,901.2 L2142.0,901.0 L2144.0,900.8 L2145.8,900.4 L2146.0,900.3 L2148.0,900.0 L2148.6,900.2 L2150.0,899.9 L2151.6,899.6 L2152.0,899.5 L2154.0,899.2 L2156.0,898.7 L2156.9,898.2 L2157.1,899.0 L2158.0,898.8 L2159.5,898.7" fill="none" stroke="#b8c8e0" stroke-width="2.0" stroke-linejoin="round"/>
<path d="M1726.0,947.9 L1728.0,947.8 L1730.0,947.8 L1732.0,947.8 L1734.0,947.7 L1736.0,947.6 L1738.0,947.6 L1738.4,947.6 L1740.0,947.6 L1742.0,947.5 L1744.0,947.4 L1746.0,947.4 L1748.0,947.4 L1750.0,947.3 L1752.0,947.2 L1754.0,947.2 L1756.0,947.1 L1758.0,947.1 L1760.0,947.0 L1762.0,946.9 L1764.0,946.9 L1766.0,946.8 L1768.0,946.8 L1770.0,946.8 L1772.0,946.7 L1774.0,946.6 L1776.0,946.6 L1778.0,946.5 L1780.0,946.5 L1782.0,946.4 L1784.0,946.4 L1786.0,946.4 L1788.0,946.4 L1790.0,946.2 L1792.0,946.2 L1794.0,946.1 L1796.0,946.0 L1798.0,946.0 L1800.0,946.0 L1802.0,946.0 L1804.0,945.9 L1806.0,945.8 L1808.0,945.7 L1810.0,945.7 L1812.0,945.7 L1814.0,945.6 L1816.0,945.5 L1818.0,945.5 L1819.3,945.4 L1820.0,945.4 L1822.0,945.4 L1824.0,945.4 L1826.0,945.3 L1828.0,945.2 L1830.0,945.2 L1832.0,945.1 L1834.0,945.1 L1836.0,945.0 L1838.0,945.0 L1839.0,944.9 L1840.0,944.9 L1842.0,944.9 L1844.0,944.9 L1846.0,944.8 L1848.0,944.6 L1850.0,944.6 L1852.0,944.6 L1854.0,944.5 L1856.0,944.4 L1856.5,944.4 L1858.0,944.3 L1858.5,944.5 L1858.7,944.5 L1860.0,940.9 M1860.9,938.3 L1861.2,937.6 L1861.8,937.7 L1862.0,937.8 L1863.0,938.0 L1864.0,938.3 M1886.0,932.3 L1887.0,932.0 L1888.0,931.3 L1890.0,930.1 L1891.0,929.7 L1891.5,930.0 L1892.0,931.3 M1914.0,931.4 L1914.6,930.4 L1916.0,930.2 L1917.2,929.8 L1918.0,929.7 L1919.6,929.4 L1920.0,929.5 L1922.0,929.3 L1924.0,929.0 L1926.0,928.7 L1928.0,928.5 L1929.5,928.3 L1930.0,928.4 L1930.7,928.5 L1930.8,928.6 L1932.0,928.3 L1934.0,928.4 L1936.0,928.6 L1938.0,928.8 L1940.0,929.0 L1941.0,928.9 L1942.0,929.2 L1943.2,929.4 L1944.0,929.4 L1946.0,929.5 L1948.0,929.7 L1950.0,929.9 L1952.0,930.1 L1953.0,930.0 L1953.1,929.7 L1954.0,927.8 L1955.6,924.4 L1956.0,924.6 L1958.0,923.9 L1960.0,923.7 L1961.5,923.3 L1961.8,923.2 L1962.0,923.4 L1964.0,923.0 L1965.0,922.6 L1965.5,922.6 L1966.0,922.6 L1966.8,922.4 L1968.0,922.2 L1970.0,922.2 L1972.0,922.6 L1974.0,923.0 L1976.0,923.6 L1978.0,924.0 L1978.5,923.9 L1980.0,924.0 L1982.0,923.7 L1984.0,923.1 L1986.0,922.9 L1988.0,922.3 L1990.0,921.7 L1992.0,921.6 L1994.0,921.3 L1996.0,920.8 L1998.0,920.6 L2000.0,919.8 L2002.0,919.9 L2002.3,919.7 L2002.5,919.7 L2003.3,919.6 L2004.0,919.2 L2005.0,919.0 L2006.0,918.7 L2008.0,918.2 L2010.0,917.3 L2012.0,916.8 L2014.0,916.8 L2014.2,916.8 L2016.0,916.4 L2017.6,916.1 L2018.0,915.6 L2020.0,915.2 L2022.0,914.5 L2024.0,914.1 L2025.0,913.7 L2026.0,913.6 L2028.0,913.2 L2030.0,912.8 L2032.0,912.0 L2032.3,911.7 L2034.0,911.3 L2036.0,910.8 L2038.0,910.7 L2038.5,910.6 L2040.0,909.7 L2042.0,908.9 L2043.0,908.2 L2044.0,908.2 L2044.7,907.9 L2046.0,907.5 L2048.0,906.3 L2050.0,905.3 L2052.0,904.3 L2054.0,903.6 L2056.0,902.9 L2056.5,902.9 L2057.0,902.9 L2058.0,903.0 L2060.0,902.6 L2062.0,902.4 L2064.0,902.7 L2065.5,902.8 L2066.0,902.8 L2066.6,902.6 L2067.0,899.0 L2067.4,895.6 L2068.0,891.2 L2068.5,887.0 L2068.8,884.4 L2070.0,884.9 L2072.0,885.0 L2074.0,885.5 L2074.4,885.3 L2076.0,885.5 L2076.7,885.8 L2077.0,885.9 L2078.0,885.7 L2080.0,886.1 L2082.0,886.4 L2084.0,886.4 L2085.7,886.8 L2086.0,886.9 L2087.5,886.9 L2088.0,886.5 L2090.0,887.1 L2090.2,887.3 L2090.7,887.8 L2092.0,888.6 L2092.4,888.6 L2094.0,889.0 L2096.0,889.5 L2098.0,889.9 L2100.0,890.2 L2102.0,890.8 L2104.0,891.4 L2104.4,891.2 L2105.9,891.8 L2106.0,891.8 L2108.0,890.6 L2108.2,890.1 L2110.0,889.2 L2112.0,887.8 L2112.7,887.5 L2114.0,886.8 L2116.0,885.8 L2116.6,885.5 L2118.0,885.2 L2120.0,884.2 L2122.0,883.2 L2124.0,882.5 L2126.0,881.1 L2126.2,881.4 L2126.8,881.6 L2128.0,880.9 L2128.2,881.1 L2130.0,880.0 L2132.0,879.7 L2132.9,879.0 L2134.0,878.4 L2136.0,878.5 L2137.0,878.6 L2137.4,878.3 L2138.0,878.2 L2140.0,877.5 L2142.0,877.2 L2144.0,876.9 L2145.8,876.2 L2146.0,876.1 L2148.0,875.4 L2148.6,875.6 L2150.0,875.2 L2151.6,874.5 L2152.0,874.3 L2154.0,874.1 L2156.0,873.4 L2156.9,871.9 L2157.1,872.9 L2158.0,872.8 L2159.5,872.8" fill="none" stroke="#8b2fd9" stroke-width="2.0" stroke-linejoin="round"/>
<path d="M208.5,948.9 L875.5,948.7 L875.7,944.8 L943.0,944.8 L943.3,946.0 L1001.4,946.0 L1001.5,946.0 L1036.0,946.0 L1036.4,946.0 L1076.0,946.0 L1076.5,942.9 L1107.5,942.9 L1125.0,942.9 L1207.0,942.9 L1207.6,945.2 L1270.5,945.2 L1300.0,945.2 L1302.0,945.2 L1304.0,945.3 L1306.0,945.3 L1308.0,945.2 L1310.0,945.3 L1312.0,945.2 L1312.5,945.3 L1314.0,945.2 L1316.0,945.2 L1318.0,945.3 L1320.0,945.3 L1322.0,945.2 L1324.0,945.2 L1326.0,945.2 L1328.0,945.2 L1330.0,945.2 L1332.0,945.1 L1333.0,945.1 L1334.0,945.1 L1334.5,945.2 L1336.0,945.2 L1338.0,945.2 L1340.0,945.2 L1342.0,945.2 L1344.0,945.2 L1346.0,945.1 L1348.0,945.1 L1350.0,945.2 L1352.0,945.2 L1354.0,945.2 L1356.0,945.1 L1358.0,945.1 L1360.0,945.1 L1362.0,945.1 L1364.0,945.2 L1366.0,945.2 L1368.0,945.2 L1370.0,945.2 L1372.0,945.2 L1374.0,945.2 L1375.0,945.2 L1376.0,945.2 L1378.0,945.2 L1380.0,945.2 L1382.0,945.2 L1384.0,945.2 L1386.0,945.2 L1388.0,945.2 L1390.0,945.3 L1392.0,945.3 L1394.0,945.2 L1396.0,945.2 L1398.0,945.2 L1398.3,945.2 L1400.0,945.2 L1402.0,945.2 L1404.0,945.2 L1406.0,945.2 L1408.0,945.1 L1410.0,945.2 L1412.0,945.2 L1414.0,945.1 L1416.0,945.1 L1418.0,945.2 L1420.0,945.2 L1422.0,945.2 L1424.0,945.2 L1426.0,945.2 L1428.0,945.1 L1430.0,945.2 L1430.4,945.2 L1432.0,945.2 L1434.0,945.2 L1436.0,945.1 L1438.0,945.2 L1440.0,945.2 L1442.0,945.1 L1444.0,945.2 L1446.0,945.2 L1448.0,945.2 L1450.0,945.2 L1452.0,945.2 L1454.0,945.2 L1456.0,945.2 L1458.0,945.2 L1460.0,945.2 L1462.0,945.3 L1464.0,945.2 L1466.0,945.3 L1468.0,945.2 L1470.0,945.2 L1471.2,945.2 L1472.0,945.2 L1474.0,945.2 L1476.0,945.2 L1478.0,945.2 L1480.0,945.2 L1482.0,945.2 L1484.0,945.2 L1486.0,945.2 L1488.0,945.2 L1490.0,945.2 L1492.0,945.2 L1494.0,945.3 L1496.0,945.3 L1498.0,945.2 L1500.0,945.2 L1502.0,945.2 L1504.0,945.2 L1506.0,945.3 L1508.0,945.2 L1510.0,945.2 L1512.0,945.2 L1514.0,945.3 L1516.0,945.3 L1518.0,945.2 L1520.0,945.3 L1522.0,945.3 L1524.0,945.2 L1526.0,945.2 L1528.0,945.2 L1529.5,945.3 L1530.0,945.3 L1532.0,945.3 L1534.0,945.2 L1536.0,945.2 L1538.0,945.2 L1540.0,945.2 L1541.0,945.2 L1542.0,945.1 L1544.0,945.1 L1546.0,945.1 L1548.0,945.2 L1550.0,945.2 L1552.0,945.2 L1554.0,945.1 L1556.0,945.2 L1558.0,945.2 L1558.7,945.2 L1560.0,945.3 L1562.0,945.2 L1564.0,945.3 L1566.0,945.2 L1568.0,945.2 L1570.0,945.2 L1572.0,945.2 L1574.0,945.1 L1576.0,945.2 L1578.0,945.2 L1580.0,945.2 L1582.0,945.2 L1584.0,945.2 L1586.0,945.2 L1588.0,945.2 L1590.0,945.2 L1592.0,945.1 L1594.0,945.2 L1595.0,945.1 L1596.0,944.5 L1596.6,944.1 L1598.0,944.2 L1600.0,944.1 L1602.0,944.1 L1604.0,944.0 L1606.0,943.9 L1608.0,944.0 L1610.0,943.9 L1612.0,943.9 L1614.0,943.9 L1616.0,943.8 L1618.0,943.8 L1620.0,943.7 L1622.0,943.7 L1624.0,943.7 L1626.0,943.6 L1628.0,943.6 L1630.0,943.5 L1632.0,943.5 L1634.0,943.5 L1636.0,943.4 L1638.0,943.3 L1640.0,943.3 L1642.0,943.3 L1644.0,943.2 L1646.0,943.2 L1648.0,943.3 L1650.0,943.2 L1652.0,943.1 L1654.0,943.0 L1656.0,943.0 L1658.0,943.0 L1660.0,943.1 L1661.9,943.0 L1662.0,943.1 L1664.0,943.0 L1666.0,942.9 L1668.0,943.0 L1668.4,942.9 L1670.0,942.9 L1672.0,942.7 L1674.0,942.6 L1676.0,942.5 L1678.0,942.5 L1680.0,942.5 L1682.0,942.4 L1684.0,942.5 L1686.0,942.3 L1688.0,942.4 L1690.0,942.4 L1692.0,942.4 L1694.0,942.4 L1694.7,942.3 L1696.0,942.3 L1698.0,942.4 L1700.0,942.3 L1702.0,942.2 L1704.0,942.1 L1706.0,942.0 L1708.0,942.2 L1710.0,942.0 L1712.0,942.0 L1714.0,942.0 L1716.0,941.9 L1718.0,942.0 L1720.0,941.9 L1722.0,941.9 L1724.0,941.8 L1726.0,941.7 L1728.0,941.6 L1730.0,941.7 L1732.0,941.6 L1734.0,941.7 L1736.0,941.5 L1738.0,941.4 L1738.4,941.5 L1740.0,941.6 L1742.0,941.5 L1744.0,941.4 L1746.0,941.4 L1748.0,941.3 L1750.0,941.3 L1752.0,941.2 L1754.0,941.3 L1756.0,941.1 L1758.0,941.1 L1760.0,941.1 L1762.0,940.9 L1764.0,940.9 L1766.0,941.0 L1768.0,941.0 L1770.0,941.0 L1772.0,940.9 L1774.0,940.9 L1776.0,940.8 L1778.0,940.8 L1780.0,940.7 L1782.0,940.7 L1784.0,940.8 L1786.0,940.7 L1788.0,940.8 L1790.0,940.6 L1792.0,940.6 L1794.0,940.4 L1796.0,940.5 L1798.0,940.5 L1800.0,940.4 L1802.0,940.5 L1804.0,940.4 L1806.0,940.3 L1808.0,940.2 L1810.0,940.2 L1812.0,940.1 L1814.0,940.0 L1816.0,940.1 L1818.0,939.9 L1819.3,939.9 L1820.0,939.9 L1822.0,939.9 L1824.0,939.9 L1826.0,939.9 L1828.0,939.8 L1830.0,939.8 L1832.0,939.7 L1834.0,939.7 L1836.0,939.7 L1838.0,939.5 L1839.0,939.6 L1840.0,939.5 L1842.0,939.6 L1844.0,939.6 L1846.0,939.6 L1848.0,939.3 L1850.0,939.3 L1852.0,939.3 L1854.0,939.3 L1856.0,939.2 L1856.5,939.3 L1858.0,939.0 L1858.5,939.2 L1858.7,939.2 L1860.0,935.0 L1860.6,933.0 L1860.9,931.9 L1861.2,932.0 L1861.8,932.3 L1862.0,932.3 L1863.0,932.7 L1864.0,933.1 L1866.0,933.9 L1868.0,934.8 L1868.5,934.7 L1869.9,935.1 L1870.0,935.2 L1871.7,935.8 L1871.8,935.9 L1872.0,935.7 L1872.4,935.5 L1874.0,934.5 L1876.0,933.0 L1876.2,932.8 L1878.0,931.7 L1880.0,930.5 L1882.0,929.0 L1884.0,927.6 L1886.0,926.5 L1887.0,926.0 L1888.0,925.4 L1890.0,924.1 L1891.0,923.5 L1891.5,923.0 L1892.0,923.7 L1893.5,924.0 L1894.0,924.0 L1894.7,923.8 L1896.0,924.2 L1898.0,924.5 L1900.0,924.7 L1902.0,924.8 L1903.6,925.4 L1904.0,925.5 L1906.0,926.1 L1908.0,926.2 L1910.0,926.5 L1912.0,927.1 L1914.0,926.7 L1914.6,926.7 L1916.0,926.5 L1917.2,925.9 L1918.0,925.7 L1919.6,925.4 L1920.0,925.4 L1922.0,925.1 L1924.0,924.7 L1926.0,924.3 L1928.0,924.0 L1929.5,923.7 L1930.0,923.8 L1930.7,923.8 L1930.8,923.8 L1932.0,923.1 L1934.0,922.7 L1936.0,922.5 L1938.0,922.2 L1940.0,921.8 L1941.0,921.5 L1942.0,921.5 L1943.2,921.6 L1944.0,921.4 L1946.0,920.9 L1948.0,920.6 L1950.0,920.2 L1952.0,919.9 L1953.0,919.6 L1953.1,919.2 L1954.0,919.2 L1955.6,918.8 L1956.0,919.0 L1958.0,918.2 L1960.0,918.0 L1961.5,917.4 L1961.8,917.4 L1962.0,917.5 L1964.0,917.1 L1965.0,916.6 L1965.5,916.5 L1966.0,916.5 L1966.8,916.3 L1968.0,915.9 L1970.0,915.1 L1972.0,914.7 L1974.0,914.2 L1976.0,914.0 L1978.0,913.7 L1978.5,913.4 L1980.0,912.8 L1982.0,912.2 L1984.0,911.3 L1986.0,910.7 L1988.0,909.8 L1990.0,908.9 L1992.0,908.7 L1994.0,908.0 L1996.0,907.4 L1998.0,906.6 L2000.0,905.7 L2002.0,905.2 L2002.3,905.1 L2002.5,905.1 L2003.3,904.6 L2004.0,904.0 L2005.0,903.7 L2006.0,903.2 L2008.0,902.3 L2010.0,901.0 L2012.0,900.0 L2014.0,899.7 L2014.2,899.6 L2016.0,898.7 L2017.6,897.6 L2018.0,896.7 L2020.0,895.6 L2022.0,895.0 L2024.0,894.1 L2025.0,893.5 L2026.0,893.4 L2028.0,892.1 L2030.0,891.1 L2032.0,889.8 L2032.3,889.1 L2034.0,888.4 L2036.0,887.6 L2038.0,887.1 L2038.5,887.1 L2040.0,885.9 L2042.0,885.4 L2043.0,884.4 L2044.0,884.2 L2044.7,883.8 L2046.0,883.0 L2048.0,881.4 L2050.0,880.3 L2052.0,878.5 L2054.0,877.2 L2056.0,875.5 L2056.5,875.6 L2057.0,875.1 L2058.0,874.7 L2060.0,873.1 L2062.0,872.0 L2064.0,871.0 L2065.5,870.1 L2066.0,870.4 L2066.6,869.4 L2067.0,864.8 L2067.4,860.0 L2068.0,853.7 L2068.5,848.4 L2068.8,847.8 L2070.0,847.7 L2072.0,847.0 L2074.0,847.3 L2074.4,847.0 L2076.0,846.0 L2076.7,845.8 L2077.0,845.7 L2078.0,846.3 L2080.0,846.9 L2082.0,845.3 L2084.0,844.3 L2085.7,843.7 L2086.0,843.8 L2087.5,843.5 L2088.0,842.8 L2090.0,842.7 L2090.2,842.1 L2090.7,842.5 L2092.0,843.4 L2092.4,843.6 L2094.0,843.3 L2096.0,843.5 L2098.0,844.1 L2100.0,844.5 L2102.0,845.8 L2104.0,846.6 L2104.4,845.9 L2105.9,847.3 L2106.0,846.8 L2108.0,846.6 L2108.2,846.0 L2110.0,846.3 L2112.0,845.8 L2112.7,846.3 L2114.0,846.2 L2116.0,845.9 L2116.6,846.3 L2118.0,845.4 L2120.0,843.8 L2122.0,843.4 L2124.0,842.3 L2126.0,841.1 L2126.2,841.3 L2126.8,841.0 L2128.0,840.0 L2128.2,840.7 L2130.0,838.6 L2132.0,837.9 L2132.9,837.7 L2134.0,836.7 L2136.0,836.6 L2137.0,837.3 L2137.4,836.6 L2138.0,837.5 L2140.0,837.3 L2142.0,836.8 L2144.0,836.6 L2145.8,836.4 L2146.0,836.2 L2148.0,836.5 L2148.6,836.7 L2150.0,836.4 L2151.6,836.0 L2152.0,836.0 L2154.0,836.2 L2156.0,836.1 L2156.9,834.8 L2157.1,836.6 L2158.0,836.3 L2159.5,837.0" fill="none" stroke="#52c6e8" stroke-width="2.0" stroke-linejoin="round"/>
<path d="M1860.6,930.1 L1860.9,930.1 L1861.2,930.1 L1861.8,930.3 L1862.0,930.3 L1863.0,930.7 L1864.0,931.1 L1866.0,931.8 L1868.0,932.6 L1868.5,932.6 L1869.9,932.9 L1870.0,933.0 L1871.7,933.6 L1871.8,933.6 L1872.0,933.7 L1872.4,933.4 L1874.0,932.4 L1876.0,930.8 L1876.2,930.6 L1878.0,929.4 L1880.0,928.2 L1882.0,926.6 L1884.0,925.3 L1886.0,924.1 L1887.0,923.6 L1888.0,922.9 L1890.0,921.6 L1891.0,921.0 L1891.5,920.4 L1892.0,921.1 L1893.5,921.3 L1894.0,921.1 L1894.7,921.0 L1896.0,921.2 L1898.0,921.4 L1900.0,921.4 L1902.0,921.4 L1903.6,921.9 L1904.0,921.9 L1906.0,922.3 L1908.0,922.2 L1910.0,922.3 L1912.0,922.8 L1914.0,922.5 L1914.6,922.5 L1916.0,922.3 L1917.2,921.7 L1918.0,921.5 L1919.6,921.2 L1920.0,921.2 L1922.0,920.9 L1924.0,920.5 L1926.0,920.2 L1928.0,920.0 L1929.5,919.8 L1930.0,919.8 L1930.7,919.8 L1930.8,919.8 L1932.0,919.3 L1934.0,918.9 L1936.0,918.9 L1938.0,918.7 L1940.0,918.5 L1941.0,918.2 L1942.0,918.3 L1943.2,918.4 L1944.0,918.3 L1946.0,917.9 L1948.0,917.8 L1950.0,917.5 L1952.0,917.4 L1953.0,917.1 L1953.1,916.7 L1954.0,916.2 L1955.6,915.0 L1956.0,915.0 L1958.0,913.3 L1960.0,912.2 L1961.5,910.7 L1961.8,910.6 L1962.0,910.6 L1964.0,909.3 L1965.0,908.4 L1965.5,907.9 L1966.0,908.1 L1966.8,907.9 L1968.0,907.6 L1970.0,906.9 L1972.0,906.5 L1974.0,906.1 L1976.0,906.0 L1978.0,905.7 L1978.5,905.5 L1980.0,905.0 L1982.0,904.0 L1984.0,902.6 L1986.0,901.5 L1988.0,900.2 L1990.0,898.7 L1992.0,898.1 L1994.0,897.0 L1996.0,895.7 L1998.0,894.7 L2000.0,893.4 L2002.0,892.5 L2002.3,892.1 L2002.5,892.1 L2003.3,891.5 L2004.0,890.7 L2005.0,889.9 L2006.0,889.3 L2008.0,887.6 L2010.0,885.9 L2012.0,884.1 L2014.0,882.9 L2014.2,882.6 L2016.0,881.1 L2017.6,879.9 L2018.0,878.8 L2020.0,877.0 L2022.0,875.3 L2024.0,873.7 L2025.0,872.9 L2026.0,872.7 L2028.0,871.1 L2030.0,870.4 L2032.0,868.9 L2032.3,868.5 L2034.0,867.3 L2036.0,866.4 L2038.0,866.0 L2038.5,865.6 L2040.0,864.5 L2042.0,863.8 L2043.0,862.4 L2044.0,862.9 L2044.7,862.7 L2046.0,861.8 L2048.0,860.0 L2050.0,858.5 L2052.0,856.8 L2054.0,855.4 L2056.0,853.3 L2056.5,853.9 L2057.0,853.6 L2058.0,853.2 L2060.0,851.4 L2062.0,850.4 L2064.0,849.2 L2065.5,848.3 L2066.0,844.8 L2066.6,839.6 L2067.0,836.3 L2067.4,832.8 L2068.0,828.4 L2068.5,825.1 L2068.8,822.2 L2070.0,821.8 L2072.0,819.4 L2074.0,818.8 L2074.4,818.4 L2076.0,816.5 L2076.7,815.1 L2077.0,815.4 L2078.0,814.9 L2080.0,814.6 L2082.0,811.2 L2084.0,809.6 L2085.7,808.5 L2086.0,808.4 L2087.5,807.6 L2088.0,806.8 L2090.0,805.2 L2090.2,804.7 L2090.7,805.0 L2092.0,806.8 L2092.4,807.1 L2094.0,807.0 L2096.0,807.8 L2098.0,809.5 L2100.0,810.1 L2102.0,813.0 L2104.0,813.7 L2104.4,812.9 L2105.9,815.2 L2106.0,814.2 L2108.0,815.3 L2108.2,814.3 L2110.0,812.6 L2112.0,809.7 L2112.7,809.4 L2114.0,808.8 L2116.0,807.1 L2116.6,807.3 L2118.0,805.7 L2120.0,803.0 L2122.0,801.8 L2124.0,800.1 L2126.0,797.4 L2126.2,797.1 L2126.8,797.7 L2128.0,796.5 L2128.2,796.8 L2130.0,795.5 L2132.0,794.9 L2132.9,796.3 L2134.0,794.4 L2136.0,794.3 L2137.0,794.8 L2137.4,794.3 L2138.0,794.0 L2140.0,794.0 L2142.0,793.1 L2144.0,793.4 L2145.8,792.9 L2146.0,792.3 L2148.0,792.3 L2148.6,792.7 L2150.0,791.4 L2151.6,791.6 L2152.0,791.3 L2154.0,791.2 L2156.0,790.8 L2156.9,789.0 L2157.1,790.8 L2158.0,790.5 L2159.5,790.7" fill="none" stroke="#2c5fe0" stroke-width="2.0" stroke-linejoin="round"/>
<path d="M1001.5,939.9 L1036.0,939.9 L1036.4,936.4 L1076.0,934.8 L1076.5,934.0 L1107.5,933.0 L1125.0,927.8 L1207.0,929.0 L1207.6,929.0 L1270.5,931.7 L1300.0,931.1 L1302.0,931.1 L1304.0,930.9 L1306.0,930.8 L1308.0,930.7 L1310.0,930.9 L1312.0,930.8 L1312.5,930.6 L1314.0,930.5 L1316.0,929.9 L1318.0,930.5 L1320.0,930.7 L1322.0,930.7 L1324.0,930.6 L1326.0,930.5 L1328.0,930.3 L1330.0,930.0 L1332.0,930.2 L1333.0,930.1 L1334.0,929.9 L1334.5,929.9 L1336.0,929.7 L1338.0,929.6 L1340.0,929.9 L1342.0,929.9 L1344.0,929.9 L1346.0,930.2 L1348.0,930.2 L1350.0,930.1 L1352.0,930.2 L1354.0,930.3 L1356.0,929.9 L1358.0,930.1 L1360.0,930.2 L1362.0,930.5 L1364.0,930.5 L1366.0,930.7 L1368.0,930.8 L1370.0,930.9 L1372.0,931.1 L1374.0,931.1 L1375.0,931.2 L1376.0,930.9 L1378.0,931.0 L1380.0,930.7 L1382.0,930.7 L1384.0,930.6 L1386.0,930.7 L1388.0,930.7 L1390.0,930.6 L1392.0,930.6 L1394.0,930.5 L1396.0,930.5 L1398.0,930.9 L1398.3,930.6 L1400.0,930.7 L1402.0,930.8 L1404.0,930.6 L1406.0,930.9 L1408.0,930.8 L1410.0,930.6 L1412.0,930.6 L1414.0,930.5 L1416.0,930.7 L1418.0,930.7 L1420.0,930.9 L1422.0,930.9 L1424.0,930.7 L1426.0,930.8 L1428.0,930.7 L1430.0,930.8 L1430.4,930.9 L1432.0,931.1 L1434.0,931.1 L1436.0,931.0 L1438.0,931.1 L1440.0,931.0 L1442.0,930.8 L1444.0,930.8 L1446.0,930.8 L1448.0,931.0 L1450.0,930.8 L1452.0,930.8 L1454.0,930.8 L1456.0,931.0 L1458.0,930.9 L1460.0,930.7 L1462.0,930.8 L1464.0,930.8 L1466.0,931.0 L1468.0,931.0 L1470.0,931.1 L1471.2,931.0 L1472.0,931.0 L1474.0,931.0 L1476.0,931.2 L1478.0,931.4 L1480.0,931.3 L1482.0,930.9 L1484.0,931.3 L1486.0,931.2 L1488.0,931.0 L1490.0,931.3 L1492.0,931.5 L1494.0,931.5 L1496.0,931.5 L1498.0,931.6 L1500.0,931.3 L1502.0,931.3 L1504.0,931.4 L1506.0,931.7 L1508.0,931.4 L1510.0,931.3 L1512.0,931.3 L1514.0,931.3 L1516.0,931.6 L1518.0,931.7 L1520.0,931.6 L1522.0,931.6 L1524.0,931.6 L1526.0,931.7 L1528.0,931.6 L1529.5,931.7 L1530.0,931.6 L1532.0,931.9 L1534.0,931.8 L1536.0,931.7 L1538.0,931.6 L1540.0,931.9 L1541.0,931.9 L1542.0,931.8 L1544.0,931.7 L1546.0,931.7 L1548.0,931.6 L1550.0,931.5 L1552.0,931.4 L1554.0,931.4 L1556.0,931.2 L1558.0,931.1 L1558.7,931.2 L1560.0,931.4 L1562.0,931.1 L1564.0,931.0 L1566.0,930.7 L1568.0,930.9 L1570.0,931.0 L1572.0,931.0 L1574.0,930.9 L1576.0,931.1 L1578.0,930.8 L1580.0,931.0 L1582.0,931.3 L1584.0,931.0 L1586.0,930.9 L1588.0,930.7 L1590.0,930.7 L1592.0,930.7 L1594.0,930.9 L1595.0,930.8 L1596.0,930.2 L1596.6,929.5 L1598.0,929.0 L1600.0,929.2 L1602.0,929.1 L1604.0,929.2 L1606.0,929.5 L1608.0,929.8 L1610.0,929.9 L1612.0,929.9 L1614.0,929.8 L1616.0,929.9 L1618.0,930.0 L1620.0,930.0 L1622.0,930.0 L1624.0,929.9 L1626.0,930.1 L1628.0,929.9 L1630.0,930.1 L1632.0,930.2 L1634.0,930.0 L1636.0,930.0 L1638.0,930.2 L1640.0,930.5 L1642.0,930.4 L1644.0,930.4 L1646.0,930.3 L1648.0,930.2 L1650.0,930.3 L1652.0,930.0 L1654.0,929.9 L1656.0,930.0 L1658.0,930.1 L1660.0,930.1 L1661.9,929.9 L1662.0,930.0 L1664.0,930.1 L1666.0,930.1 L1668.0,930.0 L1668.4,929.9 L1670.0,930.0 L1672.0,929.9 L1674.0,929.7 L1676.0,929.5 L1678.0,929.7 L1680.0,929.6 L1682.0,929.7 L1684.0,929.8 L1686.0,929.6 L1688.0,929.5 L1690.0,929.4 L1692.0,929.3 L1694.0,929.3 L1694.7,929.2 L1696.0,929.3 L1698.0,929.7 L1700.0,929.8 L1702.0,929.6 L1704.0,929.1 L1706.0,929.1 L1708.0,929.4 L1710.0,929.1 L1712.0,929.1 L1714.0,929.2 L1716.0,929.1 L1718.0,929.1 L1720.0,929.1 L1722.0,929.2 L1724.0,928.8 L1726.0,929.0 L1728.0,928.9 L1730.0,928.9 L1732.0,928.9 L1734.0,928.9 L1736.0,928.5 L1738.0,928.4 L1738.4,928.6 L1740.0,928.6 L1742.0,928.4 L1744.0,928.3 L1746.0,928.2 L1748.0,928.2 L1750.0,928.0 L1752.0,927.8 L1754.0,928.0 L1756.0,927.6 L1758.0,927.1 L1760.0,927.1 L1762.0,927.0 L1764.0,926.8 L1766.0,926.8 L1768.0,926.8 L1770.0,926.5 L1772.0,926.3 L1774.0,926.0 L1776.0,926.1 L1778.0,926.2 L1780.0,926.0 L1782.0,925.9 L1784.0,926.1 L1786.0,925.8 L1788.0,926.0 L1790.0,925.6 L1792.0,925.6 L1794.0,925.2 L1796.0,925.1 L1798.0,925.1 L1800.0,924.8 L1802.0,924.7 L1804.0,924.6 L1806.0,924.4 L1808.0,924.4 L1810.0,923.9 L1812.0,923.6 L1814.0,923.6 L1816.0,923.4 L1818.0,923.5 L1819.3,923.5 L1820.0,923.5 L1822.0,923.3 L1824.0,923.2 L1826.0,923.3 L1828.0,923.2 L1830.0,923.2 L1832.0,922.7 L1834.0,922.5 L1836.0,922.7 L1838.0,922.0 L1839.0,922.2 L1840.0,922.2 L1842.0,922.1 L1844.0,922.1 L1846.0,922.0 L1848.0,921.6 L1850.0,921.3 L1852.0,921.1 L1854.0,921.3 L1856.0,921.1 L1856.5,921.3 L1858.0,921.0 L1858.5,921.1 L1858.7,921.1 L1860.0,918.0 L1860.6,916.9 L1860.9,916.0 L1861.2,915.2 L1861.8,913.9 L1862.0,914.0 L1863.0,914.1 L1864.0,914.5 L1866.0,914.9 L1868.0,915.4 L1868.5,915.7 L1869.9,915.4 L1870.0,915.6 L1871.7,919.1 L1871.8,919.3 L1872.0,919.1 L1872.4,918.6 L1874.0,917.2 L1876.0,915.4 L1876.2,915.2 L1878.0,913.5 L1880.0,912.0 L1882.0,909.9 L1884.0,908.5 L1886.0,906.9 L1887.0,906.3 L1888.0,905.6 L1890.0,903.6 L1891.0,903.1 L1891.5,903.1 L1892.0,904.2 L1893.5,905.7 L1894.0,906.0 L1894.7,906.3 L1896.0,906.3 L1898.0,906.2 L1900.0,905.8 L1902.0,905.5 L1903.6,905.9 L1904.0,906.0 L1906.0,906.1 L1908.0,905.8 L1910.0,905.6 L1912.0,906.0 L1914.0,902.8 L1914.6,901.7 L1916.0,901.4 L1917.2,900.8 L1918.0,900.4 L1919.6,900.1 L1920.0,900.4 L1922.0,899.9 L1924.0,899.1 L1926.0,899.1 L1928.0,899.1 L1929.5,898.7 L1930.0,898.9 L1930.7,898.5 L1930.8,898.5 L1932.0,898.2 L1934.0,897.8 L1936.0,898.1 L1938.0,897.7 L1940.0,897.3 L1941.0,896.9 L1942.0,897.0 L1943.2,897.3 L1944.0,896.5 L1946.0,894.9 L1948.0,893.9 L1950.0,892.0 L1952.0,890.9 L1953.0,890.1 L1953.1,890.0 L1954.0,889.7 L1955.6,889.2 L1956.0,889.2 L1958.0,887.7 L1960.0,887.0 L1961.5,885.7 L1961.8,885.2 L1962.0,885.3 L1964.0,884.2 L1965.0,883.3 L1965.5,883.2 L1966.0,882.9 L1966.8,882.5 L1968.0,882.4 L1970.0,881.8 L1972.0,881.1 L1974.0,881.2 L1976.0,881.0 L1978.0,880.9 L1978.5,880.8 L1980.0,880.6 L1982.0,879.8 L1984.0,877.7 L1986.0,876.2 L1988.0,875.1 L1990.0,873.6 L1992.0,872.9 L1994.0,871.5 L1996.0,869.4 L1998.0,868.5 L2000.0,867.4 L2002.0,866.1 L2002.3,865.9 L2002.5,866.2 L2003.3,865.1 L2004.0,864.3 L2005.0,863.5 L2006.0,862.7 L2008.0,861.1 L2010.0,860.3 L2012.0,858.5 L2014.0,857.1 L2014.2,856.7 L2016.0,855.8 L2017.6,855.2 L2018.0,854.2 L2020.0,852.2 L2022.0,850.7 L2024.0,849.0 L2025.0,848.2 L2026.0,847.8 L2028.0,845.5 L2030.0,843.7 L2032.0,841.0 L2032.3,840.1 L2034.0,838.4 L2036.0,836.4 L2038.0,835.0 L2038.5,834.8 L2040.0,833.1 L2042.0,830.7 L2043.0,829.0 L2044.0,828.9 L2044.7,828.2 L2046.0,826.7 L2048.0,824.0 L2050.0,822.2 L2052.0,819.8 L2054.0,817.5 L2056.0,814.6 L2056.5,815.3 L2057.0,815.7 L2058.0,815.0 L2060.0,813.6 L2062.0,813.0 L2064.0,812.8 L2065.5,813.2 L2066.0,813.2 L2066.6,811.5 L2067.0,809.5 L2067.4,807.4 L2068.0,805.4 L2068.5,803.8 L2068.8,801.5 L2070.0,796.8 L2072.0,787.9 L2074.0,780.3 L2074.4,778.6 L2076.0,775.7 L2076.7,774.2 L2077.0,774.3 L2078.0,772.9 L2080.0,771.5 L2082.0,767.6 L2084.0,764.8 L2085.7,762.7 L2086.0,762.2 L2087.5,759.9 L2088.0,759.1 L2090.0,756.6 L2090.2,755.6 L2090.7,754.9 L2092.0,757.3 L2092.4,757.3 L2094.0,757.2 L2096.0,757.8 L2098.0,760.5 L2100.0,761.7 L2102.0,764.8 L2104.0,765.7 L2104.4,763.6 L2105.9,762.8 L2106.0,762.5 L2108.0,759.4 L2108.2,758.9 L2110.0,757.2 L2112.0,752.7 L2112.7,753.4 L2114.0,752.2 L2116.0,750.0 L2116.6,749.7 L2118.0,748.1 L2120.0,745.6 L2122.0,743.7 L2124.0,742.5 L2126.0,739.9 L2126.2,739.6 L2126.8,740.1 L2128.0,737.9 L2128.2,737.3 L2130.0,735.3 L2132.0,734.9 L2132.9,736.8 L2134.0,735.4 L2136.0,735.5 L2137.0,736.0 L2137.4,735.5 L2138.0,734.8 L2140.0,733.8 L2142.0,731.0 L2144.0,731.4 L2145.8,730.0 L2146.0,728.6 L2148.0,728.0 L2148.6,728.2 L2150.0,723.6 L2151.6,720.8 L2152.0,719.9 L2154.0,712.9 L2156.0,705.4 L2156.9,702.3 L2157.1,702.1 L2158.0,707.3 L2159.5,712.9" fill="none" stroke="#d6a22e" stroke-width="2.0" stroke-linejoin="round"/>
<path d="M1344.0,929.5 L1346.0,929.6 L1348.0,929.5 L1350.0,929.4 L1352.0,929.3 L1354.0,929.4 L1356.0,929.0 L1358.0,929.0 L1360.0,929.0 L1362.0,929.2 L1364.0,929.1 L1366.0,929.3 L1368.0,929.3 L1370.0,929.3 L1372.0,929.4 L1374.0,929.2 L1375.0,929.4 L1376.0,928.9 L1378.0,928.6 L1380.0,927.9 L1382.0,927.5 L1384.0,927.1 L1386.0,926.9 L1388.0,926.5 L1390.0,926.0 L1392.0,925.7 L1394.0,925.2 L1396.0,924.9 L1398.0,925.0 L1398.3,924.5 L1400.0,924.4 L1402.0,924.4 L1404.0,924.2 L1406.0,924.2 L1408.0,924.0 L1410.0,923.6 L1412.0,923.5 L1414.0,923.3 L1416.0,923.3 L1418.0,923.2 L1420.0,923.1 L1422.0,923.1 L1424.0,922.8 L1426.0,922.8 L1428.0,922.6 L1430.0,922.4 L1430.4,922.6 L1432.0,922.7 L1434.0,922.7 L1436.0,922.5 L1438.0,922.5 L1440.0,922.3 L1442.0,922.3 L1444.0,922.1 L1446.0,922.3 L1448.0,922.2 L1450.0,921.9 L1452.0,921.7 L1454.0,921.5 L1456.0,921.7 L1458.0,921.7 L1460.0,921.4 L1462.0,921.5 L1464.0,921.6 L1466.0,921.6 L1468.0,921.4 L1470.0,921.4 L1471.2,921.4 L1472.0,921.4 L1474.0,921.6 L1476.0,921.8 L1478.0,921.8 L1480.0,921.7 L1482.0,921.1 L1484.0,921.4 L1486.0,921.5 L1488.0,921.1 L1490.0,921.3 L1492.0,921.5 L1494.0,921.5 L1496.0,921.2 L1498.0,921.3 L1500.0,921.1 L1502.0,921.2 L1504.0,921.3 L1506.0,921.4 L1508.0,921.0 L1510.0,921.0 L1512.0,921.0 L1514.0,921.0 L1516.0,921.4 L1518.0,921.3 L1520.0,921.3 L1522.0,921.2 L1524.0,921.1 L1526.0,921.0 L1528.0,920.8 L1529.5,920.8 L1530.0,920.7 L1532.0,921.2 L1534.0,920.6 L1536.0,920.4 L1538.0,920.0 L1540.0,920.2 L1541.0,920.1 L1542.0,920.1 L1544.0,920.0 L1546.0,919.7 L1548.0,919.3 L1550.0,919.0 L1552.0,919.0 L1554.0,918.8 L1556.0,918.5 L1558.0,918.3 L1558.7,918.6 L1560.0,918.5 L1562.0,918.4 L1564.0,918.5 L1566.0,918.1 L1568.0,918.3 L1570.0,918.4 L1572.0,918.6 L1574.0,918.6 L1576.0,918.7 L1578.0,918.6 L1580.0,918.6 L1582.0,918.7 L1584.0,918.4 L1586.0,918.4 L1588.0,918.3 L1590.0,918.4 L1592.0,918.2 L1594.0,918.5 L1595.0,918.2 L1596.0,917.5 L1596.6,916.7 L1598.0,916.2 L1600.0,916.6 L1602.0,916.5 L1604.0,916.7 L1606.0,917.0 L1608.0,917.3 L1610.0,917.3 L1612.0,917.1 L1614.0,917.2 L1616.0,917.3 L1618.0,917.2 L1620.0,917.3 L1622.0,917.2 L1624.0,917.3 L1626.0,917.4 L1628.0,917.1 L1630.0,917.4 L1632.0,917.5 L1634.0,917.2 L1636.0,917.2 L1638.0,917.3 L1640.0,917.9 L1642.0,918.1 L1644.0,918.1 L1646.0,917.9 L1648.0,917.9 L1650.0,918.2 L1652.0,917.5 L1654.0,917.3 L1656.0,917.6 L1658.0,917.8 L1660.0,918.0 L1661.9,917.6 L1662.0,917.6 L1664.0,915.8 L1666.0,913.5 L1668.0,911.6 L1668.4,911.4 L1670.0,911.1 L1672.0,910.5 L1674.0,909.9 L1676.0,909.3 L1678.0,909.4 L1680.0,908.5 L1682.0,908.6 L1684.0,908.1 L1686.0,907.4 L1688.0,906.8 L1690.0,906.4 L1692.0,906.2 L1694.0,905.8 L1694.7,905.8 L1696.0,905.6 L1698.0,905.6 L1700.0,905.7 L1702.0,904.5 L1704.0,903.9 L1706.0,903.5 L1708.0,903.1 L1710.0,902.7 L1712.0,902.6 L1714.0,902.6 L1716.0,902.3 L1718.0,902.0 L1720.0,901.6 L1722.0,901.0 L1724.0,900.3 L1726.0,899.7 L1728.0,899.5 L1730.0,899.3 L1732.0,899.9 L1734.0,899.3 L1736.0,898.4 L1738.0,898.3 L1738.4,898.2 L1740.0,898.1 L1742.0,897.6 L1744.0,897.3 L1746.0,897.0 L1748.0,896.8 L1750.0,896.2 L1752.0,895.8 L1754.0,896.1 L1756.0,895.2 L1758.0,894.6 L1760.0,894.4 L1762.0,893.7 L1764.0,893.0 L1766.0,892.5 L1768.0,892.9 L1770.0,892.6 L1772.0,892.3 L1774.0,892.0 L1776.0,892.1 L1778.0,891.8 L1780.0,891.2 L1782.0,890.5 L1784.0,890.8 L1786.0,890.2 L1788.0,890.3 L1790.0,889.6 L1792.0,889.9 L1794.0,887.9 L1796.0,888.1 L1798.0,887.4 L1800.0,887.3 L1802.0,886.6 L1804.0,886.1 L1806.0,886.0 L1808.0,885.4 L1810.0,884.1 L1812.0,883.2 L1814.0,883.3 L1816.0,881.9 L1818.0,881.6 L1819.3,881.7 L1820.0,880.7 L1822.0,881.2 L1824.0,881.2 L1826.0,880.8 L1828.0,881.2 L1830.0,881.6 L1832.0,881.0 L1834.0,881.4 L1836.0,881.8 L1838.0,881.4 L1839.0,881.8 L1840.0,881.0 L1842.0,879.8 L1844.0,878.3 L1846.0,877.3 L1848.0,876.9 L1850.0,875.3 L1852.0,874.2 L1854.0,873.4 L1856.0,871.7 L1856.5,871.5 L1858.0,870.5 L1858.5,868.7 L1858.7,868.8 L1860.0,868.1 L1860.6,867.4 L1860.9,866.4 L1861.2,865.1 L1861.8,862.0 L1862.0,861.5 L1863.0,855.0 L1864.0,853.8 L1866.0,849.9 L1868.0,847.2 L1868.5,846.8 L1869.9,848.8 L1870.0,848.2 L1871.7,851.6 L1871.8,851.5 L1872.0,850.8 L1872.4,850.8 L1874.0,849.4 L1876.0,845.6 L1876.2,844.1 L1878.0,845.4 L1880.0,846.1 L1882.0,847.4 L1884.0,849.6 L1886.0,851.3 L1887.0,852.9 L1888.0,850.7 L1890.0,847.9 L1891.0,847.0 L1891.5,845.3 L1892.0,845.7 L1893.5,846.6 L1894.0,846.2 L1894.7,846.1 L1896.0,846.2 L1898.0,846.8 L1900.0,847.1 L1902.0,846.9 L1903.6,845.8 L1904.0,844.4 L1906.0,843.5 L1908.0,841.9 L1910.0,840.2 L1912.0,840.2 L1914.0,838.9 L1914.6,838.5 L1916.0,837.2 L1917.2,835.8 L1918.0,834.4 L1919.6,832.1 L1920.0,831.2 L1922.0,828.1 L1924.0,825.7 L1926.0,821.5 L1928.0,818.6 L1929.5,816.8 L1930.0,816.2 L1930.7,815.5 L1930.8,814.8 L1932.0,815.8 L1934.0,814.1 L1936.0,814.1 L1938.0,814.9 L1940.0,814.0 L1941.0,815.0 L1942.0,812.9 L1943.2,811.2 L1944.0,807.9 L1946.0,802.8 L1948.0,800.5 L1950.0,795.2 L1952.0,790.6 L1953.0,788.9 L1953.1,786.1 L1954.0,787.0 L1955.6,782.4 L1956.0,780.7 L1958.0,777.4 L1960.0,775.1 L1961.5,769.6 L1961.8,772.3 L1962.0,771.4 L1964.0,770.9 L1965.0,768.6 L1965.5,768.5 L1966.0,768.9 L1966.8,766.7 L1968.0,764.2 L1970.0,764.3 L1972.0,761.1 L1974.0,760.0 L1976.0,759.4 L1978.0,758.4 L1978.5,756.8 L1980.0,754.7 L1982.0,755.3 L1984.0,756.7 L1986.0,753.3 L1988.0,751.7 L1990.0,753.0 L1992.0,752.2 L1994.0,750.2 L1996.0,748.3 L1998.0,746.9 L2000.0,747.1 L2002.0,744.8 L2002.3,748.0 L2002.5,746.4 L2003.3,745.1 L2004.0,743.7 L2005.0,741.4 L2006.0,738.9 L2008.0,738.8 L2010.0,737.5 L2012.0,736.3 L2014.0,733.8 L2014.2,733.7 L2016.0,739.5 L2017.6,741.9 L2018.0,740.6 L2020.0,739.2 L2022.0,736.6 L2024.0,737.8 L2025.0,736.2 L2026.0,734.4 L2028.0,730.6 L2030.0,727.3 L2032.0,722.5 L2032.3,719.1 L2034.0,714.1 L2036.0,709.6 L2038.0,704.9 L2038.5,706.6 L2040.0,706.0 L2042.0,703.0 L2043.0,703.3 L2044.0,702.9 L2044.7,702.5 L2046.0,702.4 L2048.0,699.7 L2050.0,700.0 L2052.0,698.2 L2054.0,698.3 L2056.0,693.5 L2056.5,693.3 L2057.0,691.1 L2058.0,690.0 L2060.0,690.3 L2062.0,689.6 L2064.0,686.3 L2065.5,687.9 L2066.0,688.0 L2066.6,689.6 L2067.0,689.0 L2067.4,681.0 L2068.0,675.5 L2068.5,669.7 L2068.8,664.8 L2070.0,648.2 L2072.0,643.0 L2074.0,643.1 L2074.4,640.4 L2076.0,640.9 L2076.7,638.8 L2077.0,636.8 L2078.0,635.9 L2080.0,633.5 L2082.0,628.1 L2084.0,620.9 L2085.7,619.7 L2086.0,617.2 L2087.5,611.6 L2088.0,613.1 L2090.0,613.3 L2090.2,612.2 L2090.7,613.0 L2092.0,613.4 L2092.4,614.5 L2094.0,616.0 L2096.0,618.1 L2098.0,618.2 L2100.0,620.7 L2102.0,625.4 L2104.0,624.3 L2104.4,622.6 L2105.9,625.2 L2106.0,625.8 L2108.0,622.4 L2108.2,622.0 L2110.0,620.9 L2112.0,616.4 L2112.7,615.7 L2114.0,615.2 L2116.0,611.5 L2116.6,610.8 L2118.0,611.5 L2120.0,610.1 L2122.0,609.2 L2124.0,607.7 L2126.0,602.8 L2126.2,602.8 L2126.8,603.6 L2128.0,601.1 L2128.2,603.4 L2130.0,598.4 L2132.0,596.4 L2132.9,596.4 L2134.0,594.9 L2136.0,592.3 L2137.0,591.3 L2137.4,592.1 L2138.0,590.8 L2140.0,591.4 L2142.0,589.2 L2144.0,590.2 L2145.8,587.8 L2146.0,586.9 L2148.0,580.6 L2148.6,577.9 L2150.0,572.5 L2151.6,564.7 L2152.0,564.4 L2154.0,554.8 L2156.0,545.0 L2156.9,538.6 L2157.1,539.4 L2158.0,545.5 L2159.5,552.2" fill="none" stroke="#0d3467" stroke-width="2.3" stroke-linejoin="round"/>
<rect x="189.8" y="442" width="2" height="509" fill="#d6d9e0"/>
<rect x="189.8" y="949.5" width="1986.0" height="2" fill="#d6d9e0"/>
<path d="M280.9,951 L280.9,967 M412.3,951 L412.3,967 M545.8,951 L545.8,967 M677.9,951 L677.9,967 M811.4,951 L811.4,967 M942.7,951 L942.7,967 M1076.3,951 L1076.3,967 M1207.6,951 L1207.6,967 M1341.1,951 L1341.1,967 M1472.5,951 L1472.5,967 M1606.0,951 L1606.0,967 M1738.1,951 L1738.1,967 M1871.6,951 L1871.6,967 M2003.0,951 L2003.0,967 M2136.5,951 L2136.5,967" stroke="#9a9a9a" stroke-width="2"/>
<text x="280.9" y="1001.8" font-size="24.3" fill="#94a3b8" text-anchor="middle">1/1/19</text>
<text x="412.3" y="1001.8" font-size="24.3" fill="#94a3b8" text-anchor="middle">7/1/19</text>
<text x="545.8" y="1001.8" font-size="24.3" fill="#94a3b8" text-anchor="middle">1/1/20</text>
<text x="677.9" y="1001.8" font-size="24.3" fill="#94a3b8" text-anchor="middle">7/1/20</text>
<text x="811.4" y="1001.8" font-size="24.3" fill="#94a3b8" text-anchor="middle">1/1/21</text>
<text x="942.7" y="1001.8" font-size="24.3" fill="#94a3b8" text-anchor="middle">7/1/21</text>
<text x="1076.3" y="1001.8" font-size="24.3" fill="#94a3b8" text-anchor="middle">1/1/22</text>
<text x="1207.6" y="1001.8" font-size="24.3" fill="#94a3b8" text-anchor="middle">7/1/22</text>
<text x="1341.1" y="1001.8" font-size="24.3" fill="#94a3b8" text-anchor="middle">1/1/23</text>
<text x="1472.5" y="1001.8" font-size="24.3" fill="#94a3b8" text-anchor="middle">7/1/23</text>
<text x="1606.0" y="1001.8" font-size="24.3" fill="#94a3b8" text-anchor="middle">1/1/24</text>
<text x="1738.1" y="1001.8" font-size="24.3" fill="#94a3b8" text-anchor="middle">7/1/24</text>
<text x="1871.6" y="1001.8" font-size="24.3" fill="#94a3b8" text-anchor="middle">1/1/25</text>
<text x="2003.0" y="1001.8" font-size="24.3" fill="#94a3b8" text-anchor="middle">7/1/25</text>
<text x="2136.5" y="1001.8" font-size="24.3" fill="#94a3b8" text-anchor="middle">1/1/26</text>
<text x="161.5" y="452.8" font-size="26" fill="#94a3b8" text-anchor="end">$30.0B</text>
<text x="161.5" y="537.4" font-size="26" fill="#94a3b8" text-anchor="end">$25.0B</text>
<text x="161.5" y="622.0" font-size="26" fill="#94a3b8" text-anchor="end">$20.0B</text>
<text x="161.5" y="706.6" font-size="26" fill="#94a3b8" text-anchor="end">$15.0B</text>
<text x="161.5" y="791.2" font-size="26" fill="#94a3b8" text-anchor="end">$10.0B</text>
<text x="161.5" y="875.8" font-size="26" fill="#94a3b8" text-anchor="end">$5.0B</text>
<text x="161.5" y="960.4" font-size="26" fill="#94a3b8" text-anchor="end">$0.00</text>
<circle cx="161.5" cy="1055.8" r="10.6" fill="#0b3d82"/>
<text x="187.0" y="1065.0" font-size="22.5" font-weight="normal" fill="#333338" textLength="187.5" lengthAdjust="spacingAndGlyphs">US Treasury Debt</text>
<circle cx="449.5" cy="1055.8" r="10.6" fill="#d9a52b"/>
<text x="475.2" y="1065.0" font-size="22.5" font-weight="normal" fill="#333338" textLength="140.6" lengthAdjust="spacingAndGlyphs">Commodities</text>
<circle cx="737.5" cy="1055.8" r="10.6" fill="#2e64e8"/>
<text x="762.9" y="1065.0" font-size="22.5" font-weight="normal" fill="#333338" textLength="145.0" lengthAdjust="spacingAndGlyphs">Private Credit</text>
<circle cx="1025.5" cy="1055.8" r="10.6" fill="#4cc8ea"/>
<text x="1051.3" y="1065.0" font-size="22.5" font-weight="normal" fill="#333338" textLength="199.5" lengthAdjust="spacingAndGlyphs">Institutional Alter...</text>
<circle cx="1313.5" cy="1055.8" r="10.6" fill="#8a2be2"/>
<text x="1339.4" y="1065.0" font-size="22.5" font-weight="normal" fill="#333338" textLength="181.4" lengthAdjust="spacingAndGlyphs">Corporate Bonds</text>
<circle cx="1601.5" cy="1055.8" r="10.6" fill="#a9c0dd"/>
<text x="1627.4" y="1065.0" font-size="22.5" font-weight="normal" fill="#333338" textLength="202.6" lengthAdjust="spacingAndGlyphs">non-US Governm...</text>
<circle cx="1889.5" cy="1055.8" r="10.6" fill="#f0400a"/>
<text x="1915.7" y="1065.0" font-size="22.5" font-weight="normal" fill="#333338" textLength="137.9" lengthAdjust="spacingAndGlyphs">Public Equity</text>
<circle cx="161.5" cy="1090.6" r="10.6" fill="#ffd400"/>
<text x="187.0" y="1098.7" font-size="22.5" font-weight="normal" fill="#333338" textLength="146.8" lengthAdjust="spacingAndGlyphs">Private Equity</text>
<circle cx="449.5" cy="1090.6" r="10.6" fill="#4a87c4"/>
<text x="475.2" y="1098.7" font-size="22.5" font-weight="normal" fill="#333338" textLength="197.4" lengthAdjust="spacingAndGlyphs">Actively-Manage...</text>
<circle cx="737.5" cy="1090.6" r="10.6" fill="#1a0ae0"/>
<text x="762.9" y="1098.7" font-size="22.5" font-weight="normal" fill="#333338" textLength="185.9" lengthAdjust="spacingAndGlyphs">Structured Credit</text>
<path d="M3099.4,706.5 L3099.40,496.89 A6.00,6.00 0 0 1 3105.57,490.89 A215.7,215.7 0 0 1 3230.53,877.76 A6.00,6.00 0 0 1 3222.02,876.51 Z" fill="#6f8db5" stroke="#ffffff" stroke-width="2.6" stroke-linejoin="round"/>
<path d="M3099.4,706.5 L3222.02,876.51 A6.00,6.00 0 0 1 3220.52,884.99 A215.7,215.7 0 0 1 2976.73,883.92 A6.00,6.00 0 0 1 2975.31,875.43 Z" fill="#e8c884" stroke="#ffffff" stroke-width="2.6" stroke-linejoin="round"/>
<path d="M3099.4,706.5 L2975.31,875.43 A6.00,6.00 0 0 1 2966.78,876.61 A215.7,215.7 0 0 1 2891.09,762.47 A6.00,6.00 0 0 1 2895.49,755.08 Z" fill="#80a3f6" stroke="#ffffff" stroke-width="2.6" stroke-linejoin="round"/>
<path d="M3099.4,706.5 L2895.49,755.08 A6.00,6.00 0 0 1 2888.23,750.46 A215.7,215.7 0 0 1 2894.80,638.20 A6.00,6.00 0 0 1 2902.55,634.46 Z" fill="#99dff5" stroke="#ffffff" stroke-width="2.6" stroke-linejoin="round"/>
<path d="M3099.4,706.5 L2902.55,634.46 A6.00,6.00 0 0 1 2899.04,626.61 A215.7,215.7 0 0 1 2937.01,564.53 A6.00,6.00 0 0 1 2945.60,564.08 Z" fill="#b983f0" stroke="#ffffff" stroke-width="2.6" stroke-linejoin="round"/>
<path d="M3099.4,706.5 L2945.60,564.08 A6.00,6.00 0 0 1 2945.39,555.48 A215.7,215.7 0 0 1 3004.37,512.86 A6.00,6.00 0 0 1 3012.47,515.76 Z" fill="#cfdbea" stroke="#ffffff" stroke-width="2.6" stroke-linejoin="round"/>
<path d="M3099.4,706.5 L3012.47,515.76 A6.00,6.00 0 0 1 3015.60,507.74 A215.7,215.7 0 0 1 3054.78,495.47 A6.00,6.00 0 0 1 3061.92,500.26 Z" fill="#fa8f6e" stroke="#ffffff" stroke-width="2.6" stroke-linejoin="round"/>
<path d="M3099.4,706.5 L3061.92,500.26 A6.00,6.00 0 0 1 3066.92,493.26 A215.7,215.7 0 0 1 3071.10,492.66 A6.00,6.00 0 0 1 3077.85,498.00 Z" fill="#fde288" stroke="#ffffff" stroke-width="2.6" stroke-linejoin="round"/>
<path d="M3099.4,706.5 L3077.63,495.80 A3.84,3.84 0 0 1 3081.12,491.58 A215.7,215.7 0 0 1 3085.34,491.26 A3.84,3.84 0 0 1 3089.42,494.91 Z" fill="#d9a27d" stroke="#ffffff" stroke-width="2.6" stroke-linejoin="round"/>
<path d="M3099.4,706.5 L3089.42,494.91 A3.84,3.84 0 0 1 3093.15,490.89 A215.7,215.7 0 0 1 3095.49,490.84 A3.84,3.84 0 0 1 3099.40,494.67 Z" fill="#8fb0d9" stroke="#ffffff" stroke-width="2.6" stroke-linejoin="round"/>
<path d="M3305.2,638.7 L3377.0,617.1 L3385.7,617.1" fill="none" stroke="#6f8db5" stroke-width="2.2"/>
<path d="M3167.0,912.8 L3188.6,978.7 L3199.0,978.7" fill="none" stroke="#e8c884" stroke-width="2.2"/>
<path d="M2919.4,826.8 L2907.2,837.5 L2913.5,937.1" fill="none" stroke="#80a3f6" stroke-width="2.2"/>
<path d="M2883.0,692.7 L2868.3,692.7 L2830.9,835.1" fill="none" stroke="#99dff5" stroke-width="2.2"/>
<path d="M2914.5,590.7 L2902.4,584.9 L2800.3,736.5" fill="none" stroke="#b983f0" stroke-width="2.2"/>
<path d="M2973.1,529.6 L2965.3,519.1 L2807.6,637.3" fill="none" stroke="#cfdbea" stroke-width="2.2"/>
<path d="M3033.4,500.5 L3029.5,486.9 L2852.6,538.6" fill="none" stroke="#fa8f6e" stroke-width="2.2"/>
<path d="M3068.3,492.7 L3061.7,439.1 L2979.0,439.1" fill="none" stroke="#fde288" stroke-width="2.2"/>
<text x="2770.2" y="431.3" font-size="29.0" font-weight="normal" fill="#94a3b8" textLength="184.3" lengthAdjust="spacingAndGlyphs">Private Equity</text>
<text x="2823.5" y="472.5" font-size="34.0" font-weight="normal" fill="#334155" textLength="131.0" lengthAdjust="spacingAndGlyphs">$322.1M</text>
<text x="2654.4" y="530.4" font-size="29.0" font-weight="normal" fill="#94a3b8" textLength="174.1" lengthAdjust="spacingAndGlyphs">Public Equity</text>
<text x="2691.3" y="570.4" font-size="34.0" font-weight="normal" fill="#334155" textLength="137.2" lengthAdjust="spacingAndGlyphs">$932.5M</text>
<text x="2431.0" y="628.6" font-size="29.0" font-weight="normal" fill="#94a3b8" textLength="349.9" lengthAdjust="spacingAndGlyphs">non-US Government Debt</text>
<text x="2698.3" y="669.9" font-size="34.0" font-weight="normal" fill="#334155" textLength="82.7" lengthAdjust="spacingAndGlyphs">$1.5B</text>
<text x="2547.6" y="729.7" font-size="29.0" font-weight="normal" fill="#94a3b8" textLength="228.4" lengthAdjust="spacingAndGlyphs">Corporate Bonds</text>
<text x="2691.0" y="768.5" font-size="34.0" font-weight="normal" fill="#334155" textLength="85.1" lengthAdjust="spacingAndGlyphs">$1.5B</text>
<text x="2401.9" y="826.8" font-size="29.0" font-weight="normal" fill="#94a3b8" textLength="403.4" lengthAdjust="spacingAndGlyphs">Institutional Alternative Funds</text>
<text x="2715.3" y="867.7" font-size="34.0" font-weight="normal" fill="#334155" textLength="90.0" lengthAdjust="spacingAndGlyphs">$2.3B</text>
<text x="2704.6" y="927.4" font-size="29.0" font-weight="normal" fill="#94a3b8" textLength="183.1" lengthAdjust="spacingAndGlyphs">Private Credit</text>
<text x="2800.3" y="969.7" font-size="34.0" font-weight="normal" fill="#334155" textLength="87.6" lengthAdjust="spacingAndGlyphs">$2.7B</text>
<text x="3412.0" y="611.3" font-size="29.0" font-weight="normal" fill="#94a3b8" textLength="235.9" lengthAdjust="spacingAndGlyphs">US Treasury Debt</text>
<text x="3412.0" y="649.2" font-size="34.0" font-weight="normal" fill="#334155" textLength="89.3" lengthAdjust="spacingAndGlyphs">$9.6B</text>
<text x="3227.1" y="971.1" font-size="29.0" font-weight="normal" fill="#94a3b8" textLength="176.2" lengthAdjust="spacingAndGlyphs">Commodities</text>
<text x="3227.0" y="1011.9" font-size="34.0" font-weight="normal" fill="#334155" textLength="88.8" lengthAdjust="spacingAndGlyphs">$4.8B</text>
<circle cx="3471.7" cy="1065" r="26.5" fill="none" stroke="#cfcfcf" stroke-width="3.0"/><ellipse cx="3471.7" cy="1065" rx="14.6" ry="26.5" fill="none" stroke="#cfcfcf" stroke-width="2.4"/><path d="M3471.7,1038.5 L3471.7,1091.5 M3445.2,1065 L3498.2,1065" stroke="#cfcfcf" stroke-width="2.4"/><path d="M3451.3,1049.3 Q3471.7,1062.8 3492.1,1049.3 M3451.3,1080.7 Q3471.7,1067.2 3492.1,1080.7" fill="none" stroke="#cfcfcf" stroke-width="2.4"/>
<text x="3511.5" y="1084.5" font-size="73.0" font-weight="normal" fill="#cfcfcf" textLength="115.9" lengthAdjust="spacingAndGlyphs">rwa</text>
<text x="3632.0" y="1084.8" font-size="34.0" font-weight="normal" fill="#cfcfcf" textLength="51.9" lengthAdjust="spacingAndGlyphs">.xyz</text>
<text x="3452.5" y="1135.0" font-size="28.6" font-weight="normal" fill="#b4b4b4" textLength="230.5" lengthAdjust="spacingAndGlyphs">as of 02/03/2026</text>
</svg>
</body></html>
